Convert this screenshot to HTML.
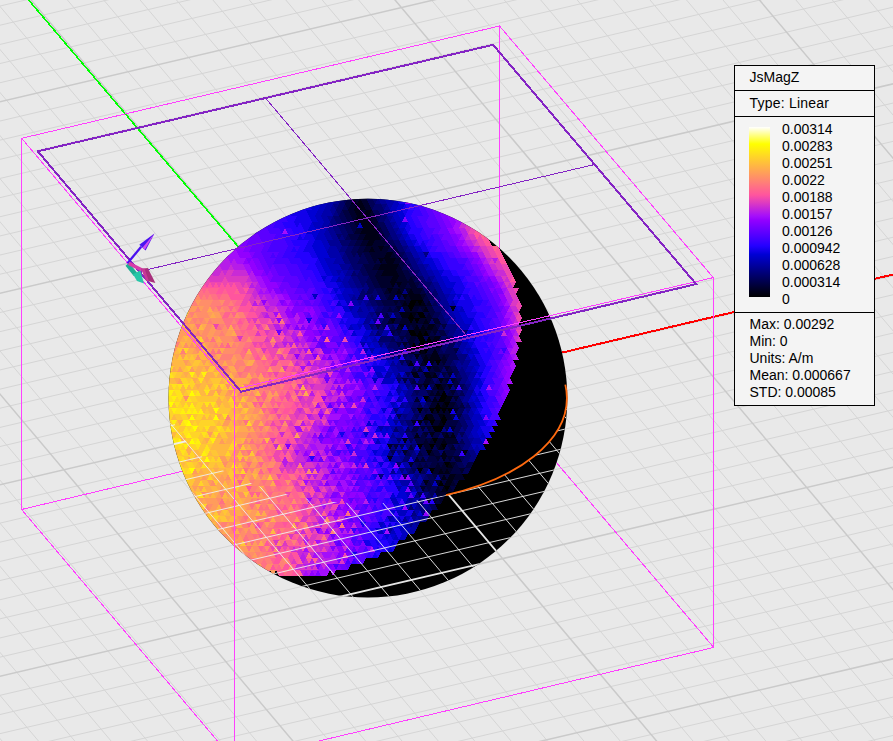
<!DOCTYPE html>
<html><head><meta charset="utf-8"><title>JsMagZ</title>
<style>html,body{margin:0;padding:0;background:#e9e9e9;overflow:hidden}svg{display:block}text{font-family:"Liberation Sans",sans-serif;font-size:14px;fill:#000}</style>
</head><body>
<svg width="893" height="741" viewBox="0 0 893 741">
<defs>
<linearGradient id="bar" x1="0" y1="0" x2="0" y2="1"><stop offset="0.000" stop-color="#ffffff"/><stop offset="0.025" stop-color="#ffffbf"/><stop offset="0.050" stop-color="#ffff7f"/><stop offset="0.075" stop-color="#ffff40"/><stop offset="0.100" stop-color="#ffff00"/><stop offset="0.125" stop-color="#fff10d"/><stop offset="0.150" stop-color="#ffe31a"/><stop offset="0.175" stop-color="#ffd428"/><stop offset="0.200" stop-color="#ffc635"/><stop offset="0.225" stop-color="#ffb842"/><stop offset="0.250" stop-color="#ffaa4f"/><stop offset="0.275" stop-color="#ff9c5c"/><stop offset="0.300" stop-color="#ff8e69"/><stop offset="0.325" stop-color="#ff8077"/><stop offset="0.350" stop-color="#ff7184"/><stop offset="0.375" stop-color="#ff6391"/><stop offset="0.400" stop-color="#ff559e"/><stop offset="0.425" stop-color="#ed47b1"/><stop offset="0.450" stop-color="#db39c3"/><stop offset="0.475" stop-color="#c82ad6"/><stop offset="0.500" stop-color="#b61ce9"/><stop offset="0.525" stop-color="#a40efb"/><stop offset="0.550" stop-color="#9200ff"/><stop offset="0.575" stop-color="#7f00ff"/><stop offset="0.600" stop-color="#6d00ff"/><stop offset="0.625" stop-color="#5b00ff"/><stop offset="0.650" stop-color="#4900ff"/><stop offset="0.675" stop-color="#3700ff"/><stop offset="0.700" stop-color="#2400ff"/><stop offset="0.725" stop-color="#1200ea"/><stop offset="0.750" stop-color="#0000d4"/><stop offset="0.775" stop-color="#0000bf"/><stop offset="0.800" stop-color="#0000aa"/><stop offset="0.825" stop-color="#000095"/><stop offset="0.850" stop-color="#00007f"/><stop offset="0.875" stop-color="#00006a"/><stop offset="0.900" stop-color="#000055"/><stop offset="0.925" stop-color="#000040"/><stop offset="0.950" stop-color="#00002a"/><stop offset="0.975" stop-color="#000015"/><stop offset="1.000" stop-color="#000000"/></linearGradient>
<clipPath id="cs"><circle cx="367.9" cy="398.1" r="199.4"/></clipPath>
<clipPath id="cl"><path d="M168.5 398.1A199.4 199.4 0 0 0 567.3 398.1A199.4 105.4 0 0 1 168.5 398.1Z"/></clipPath>
</defs>
<rect width="893" height="741" fill="#e9e9e9"/>
<g fill="none" stroke-linecap="butt">
<path d="M848.1 746.0L898.0 734.3M766.1 746.0L898.0 715.2M684.1 746.0L898.0 696.0M602.2 746.0L898.0 676.9M438.3 746.0L898.0 638.6M6.3 746.0L-5.0 732.6M356.4 746.0L898.0 619.4M42.7 746.0L-5.0 689.5M274.5 746.0L898.0 600.2M79.0 746.0L-5.0 646.5M192.7 746.0L898.0 581.1M115.3 746.0L-5.0 603.4M110.8 746.0L898.0 561.9M151.7 746.0L-5.0 560.4M29.0 746.0L898.0 542.8M188.0 746.0L-5.0 517.3M-5.0 734.8L898.0 523.6M224.4 746.0L-5.0 474.3M-5.0 715.7L898.0 504.4M260.7 746.0L-5.0 431.2M-5.0 696.5L898.0 485.3M333.4 746.0L-5.0 345.1M-5.0 658.3L898.0 446.9M369.8 746.0L-5.0 302.0M-5.0 639.1L898.0 427.8M406.2 746.0L-5.0 259.0M-5.0 620.0L898.0 408.6M442.5 746.0L-5.0 215.9M-5.0 600.9L898.0 389.4M478.9 746.0L-5.0 172.8M-5.0 581.7L898.0 370.3M515.3 746.0L-5.0 129.7M-5.0 562.6L898.0 351.1M551.7 746.0L-5.0 86.6M-5.0 543.4L898.0 331.9M588.1 746.0L-5.0 43.6M-5.0 524.3L898.0 312.8M624.4 746.0L-5.0 0.5M-5.0 505.2L898.0 293.6M697.2 746.0L63.2 -5.0M-5.0 466.9L898.0 255.3M733.6 746.0L99.5 -5.0M-5.0 447.7L898.0 236.1M770.0 746.0L135.9 -5.0M-5.0 428.6L898.0 216.9M806.4 746.0L172.3 -5.0M-5.0 409.4L898.0 197.8M842.9 746.0L208.7 -5.0M-5.0 390.3L898.0 178.6M879.3 746.0L245.1 -5.0M-5.0 371.1L898.0 159.4M898.0 725.1L281.6 -5.0M-5.0 352.0L898.0 140.2M898.0 681.9L318.0 -5.0M-5.0 332.8L898.0 121.1M898.0 638.8L354.4 -5.0M-5.0 313.7L898.0 101.9M898.0 552.5L427.2 -5.0M-5.0 275.4L898.0 63.5M898.0 509.4L463.7 -5.0M-5.0 256.2L898.0 44.3M898.0 466.2L500.1 -5.0M-5.0 237.1L898.0 25.2M898.0 423.1L536.5 -5.0M-5.0 217.9L898.0 6.0M898.0 379.9L573.0 -5.0M-5.0 198.8L863.1 -5.0M898.0 336.7L609.4 -5.0M-5.0 179.6L781.4 -5.0M898.0 293.6L645.8 -5.0M-5.0 160.5L699.8 -5.0M898.0 250.4L682.3 -5.0M-5.0 141.3L618.1 -5.0M898.0 207.3L718.8 -5.0M-5.0 122.2L536.5 -5.0M898.0 120.9L791.7 -5.0M-5.0 83.9L373.3 -5.0M898.0 77.7L828.1 -5.0M-5.0 64.7L291.7 -5.0M898.0 34.5L864.6 -5.0M-5.0 45.6L210.1 -5.0M-5.0 26.4L128.6 -5.0M-5.0 7.2L47.1 -5.0" stroke="#d5d5d5" stroke-width="1"/>
<path d="M520.2 746.0L898.0 657.7M297.1 746.0L-5.0 388.2M-5.0 677.4L898.0 466.1M660.8 746.0L26.8 -5.0M-5.0 486.0L898.0 274.4M898.0 595.6L390.8 -5.0M-5.0 294.5L898.0 82.7M898.0 164.1L755.2 -5.0M-5.0 103.0L454.9 -5.0" stroke="#cacaca" stroke-width="1.5"/>
</g>
<!-- axes -->
<path d="M28.6 0L367.5 398.9" stroke="#00ff00" stroke-width="1.6" fill="none" shape-rendering="crispEdges"/>
<path d="M367.5 398.5L893 274.5" stroke="#ff0000" stroke-width="2" fill="none" shape-rendering="crispEdges"/>
<!-- back box edges -->
<g fill="none" stroke="#ff40ff" stroke-width="1" shape-rendering="crispEdges">
<path d="M499.5 26V395M21.5 509.5L499.5 395.7L713.8 647.5"/>
</g>
<!-- sphere -->
<g clip-path="url(#cs)" shape-rendering="crispEdges">
<circle cx="367.9" cy="398.1" r="200.4" fill="#000"/>
<path fill="#000000" d="M408 306l6 0l-3-6zM411 300l6 0l-3 6zM417 300l6 0l-3 6zM408 306l6 0l-3 6zM408 318l6 0l-3-6zM417 312l6 0l-3 6zM420 318l6 0l-3-6zM408 318l6 0l-3 6zM414 318l6 0l-3 6zM408 330l6 0l-3 6zM411 336l6 0l-3-6zM417 336l6 0l-3-6zM423 336l6 0l-3-6zM417 336l6 0l-3 6zM420 342l6 0l-3-6zM426 342l6 0l-3-6zM411 348l6 0l-3-6zM417 348l6 0l-3-6zM420 342l6 0l-3 6zM417 348l6 0l-3 6zM423 348l6 0l-3 6zM435 360l6 0l-3 6zM435 384l6 0l-3 6zM441 396l6 0l-3-6zM423 396l6 0l-3 6zM438 402l6 0l-3-6zM441 396l6 0l-3 6zM435 408l6 0l-3-6zM444 402l6 0l-3 6zM417 408l6 0l-3 6zM429 408l6 0l-3 6zM435 408l6 0l-3 6zM441 408l6 0l-3 6zM447 408l6 0l-3 6zM423 420l6 0l-3-6zM441 420l6 0l-3-6zM429 420l6 0l-3 6zM441 420l6 0l-3 6zM432 426l6 0l-3 6zM435 432l6 0l-3-6zM438 426l6 0l-3 6zM432 438l6 0l-3 6zM417 444l6 0l-3 6zM429 444l6 0l-3 6zM441 444l6 0l-3 6zM426 450l6 0l-3 6zM444 462l6 0l-3 6zM417 468l6 0l-3 6zM429 468l6 0l-3 6zM438 486l6 0l-3-6zM444 486l6 0l-3 6z"/><path fill="#000015" d="M351 204l6 0l-3-6zM357 204l6 0l-3-6zM354 210l6 0l-3-6zM357 204l6 0l-3 6zM360 210l6 0l-3-6zM354 210l6 0l-3 6zM357 216l6 0l-3-6zM363 216l6 0l-3-6zM366 210l6 0l-3 6zM354 222l6 0l-3-6zM357 216l6 0l-3 6zM360 222l6 0l-3-6zM363 216l6 0l-3 6zM366 222l6 0l-3-6zM360 222l6 0l-3 6zM363 228l6 0l-3-6zM366 222l6 0l-3 6zM369 228l6 0l-3-6zM360 234l6 0l-3-6zM363 228l6 0l-3 6zM366 234l6 0l-3-6zM369 228l6 0l-3 6zM372 234l6 0l-3-6zM363 240l6 0l-3-6zM366 234l6 0l-3 6zM369 240l6 0l-3-6zM372 234l6 0l-3 6zM375 240l6 0l-3-6zM366 246l6 0l-3-6zM369 240l6 0l-3 6zM369 252l6 0l-3-6zM378 246l6 0l-3 6zM384 258l6 0l-3-6zM387 252l6 0l-3 6zM378 258l6 0l-3 6zM384 258l6 0l-3 6zM387 264l6 0l-3-6zM390 258l6 0l-3 6zM378 270l6 0l-3-6zM381 264l6 0l-3 6zM384 270l6 0l-3-6zM387 264l6 0l-3 6zM390 270l6 0l-3-6zM393 264l6 0l-3 6zM381 276l6 0l-3-6zM384 270l6 0l-3 6zM387 276l6 0l-3-6zM390 270l6 0l-3 6zM393 276l6 0l-3-6zM390 282l6 0l-3-6zM393 276l6 0l-3 6zM390 282l6 0l-3 6zM396 282l6 0l-3 6zM387 288l6 0l-3 6zM396 294l6 0l-3-6zM408 294l6 0l-3-6zM402 294l6 0l-3 6zM408 294l6 0l-3 6zM411 300l6 0l-3-6zM414 294l6 0l-3 6zM417 300l6 0l-3-6zM402 306l6 0l-3-6zM414 306l6 0l-3-6zM420 306l6 0l-3-6zM423 312l6 0l-3-6zM450 306l6 0l-3 6zM399 312l6 0l-3 6zM402 318l6 0l-3-6zM405 312l6 0l-3 6zM411 312l6 0l-3 6zM390 318l6 0l-3 6zM423 324l6 0l-3-6zM399 324l6 0l-3 6zM414 330l6 0l-3-6zM420 330l6 0l-3-6zM426 330l6 0l-3-6zM429 324l6 0l-3 6zM414 330l6 0l-3 6zM420 330l6 0l-3 6zM432 342l6 0l-3-6zM435 336l6 0l-3 6zM426 342l6 0l-3 6zM438 342l6 0l-3 6zM411 348l6 0l-3 6zM420 354l6 0l-3-6zM432 354l6 0l-3-6zM414 354l6 0l-3 6zM423 360l6 0l-3-6zM429 360l6 0l-3-6zM432 354l6 0l-3 6zM435 360l6 0l-3-6zM408 366l6 0l-3-6zM423 360l6 0l-3 6zM429 360l6 0l-3 6zM426 366l6 0l-3 6zM411 372l6 0l-3 6zM414 378l6 0l-3-6zM423 372l6 0l-3 6zM426 378l6 0l-3-6zM432 378l6 0l-3-6zM438 378l6 0l-3 6zM423 384l6 0l-3 6zM438 390l6 0l-3-6zM447 384l6 0l-3 6zM435 396l6 0l-3-6zM432 402l6 0l-3-6zM444 402l6 0l-3-6zM447 396l6 0l-3 6zM441 408l6 0l-3-6zM426 414l6 0l-3 6zM429 420l6 0l-3-6zM438 414l6 0l-3 6zM417 420l6 0l-3 6zM438 426l6 0l-3-6zM414 438l6 0l-3-6zM429 432l6 0l-3 6zM444 438l6 0l-3-6zM450 438l6 0l-3-6zM402 438l6 0l-3 6zM441 444l6 0l-3-6zM438 450l6 0l-3-6zM441 456l6 0l-3-6zM462 450l6 0l-3 6zM441 456l6 0l-3 6zM447 468l6 0l-3-6zM438 474l6 0l-3-6zM444 474l6 0l-3-6zM441 480l6 0l-3-6zM447 480l6 0l-3-6zM450 474l6 0l-3 6zM423 480l6 0l-3 6zM444 486l6 0l-3-6zM447 480l6 0l-3 6zM441 492l6 0l-3-6z"/><path fill="#00002b" d="M354 198l6 0l-3-6zM354 198l6 0l-3 6zM360 198l6 0l-3 6zM363 204l6 0l-3-6zM348 210l6 0l-3-6zM351 204l6 0l-3 6zM363 204l6 0l-3 6zM366 210l6 0l-3-6zM348 210l6 0l-3 6zM351 216l6 0l-3-6zM360 210l6 0l-3 6zM369 216l6 0l-3-6zM351 216l6 0l-3 6zM369 216l6 0l-3 6zM372 222l6 0l-3-6zM354 222l6 0l-3 6zM372 222l6 0l-3 6zM354 234l6 0l-3-6zM357 228l6 0l-3 6zM375 228l6 0l-3 6zM357 240l6 0l-3-6zM360 234l6 0l-3 6zM378 234l6 0l-3 6zM360 246l6 0l-3-6zM363 240l6 0l-3 6zM372 246l6 0l-3-6zM375 240l6 0l-3 6zM378 246l6 0l-3-6zM381 240l6 0l-3 6zM363 252l6 0l-3-6zM366 246l6 0l-3 6zM372 246l6 0l-3 6zM375 252l6 0l-3-6zM381 252l6 0l-3-6zM384 246l6 0l-3 6zM369 252l6 0l-3 6zM372 258l6 0l-3-6zM375 252l6 0l-3 6zM378 258l6 0l-3-6zM381 252l6 0l-3 6zM390 258l6 0l-3-6zM372 258l6 0l-3 6zM381 264l6 0l-3-6zM393 264l6 0l-3-6zM396 258l6 0l-3 6zM372 270l6 0l-3-6zM375 264l6 0l-3 6zM396 270l6 0l-3-6zM375 276l6 0l-3-6zM378 270l6 0l-3 6zM396 270l6 0l-3 6zM399 276l6 0l-3-6zM375 276l6 0l-3 6zM378 282l6 0l-3-6zM381 276l6 0l-3 6zM384 282l6 0l-3-6zM387 276l6 0l-3 6zM396 282l6 0l-3-6zM399 276l6 0l-3 6zM402 282l6 0l-3-6zM408 282l6 0l-3-6zM378 282l6 0l-3 6zM381 288l6 0l-3-6zM384 282l6 0l-3 6zM387 288l6 0l-3-6zM399 288l6 0l-3-6zM402 282l6 0l-3 6zM408 282l6 0l-3 6zM411 288l6 0l-3-6zM384 294l6 0l-3-6zM390 294l6 0l-3-6zM393 288l6 0l-3 6zM399 288l6 0l-3 6zM405 288l6 0l-3 6zM411 288l6 0l-3 6zM414 294l6 0l-3-6zM417 288l6 0l-3 6zM387 300l6 0l-3-6zM390 294l6 0l-3 6zM396 294l6 0l-3 6zM405 300l6 0l-3-6zM420 294l6 0l-3 6zM393 300l6 0l-3 6zM399 300l6 0l-3 6zM405 300l6 0l-3 6zM426 306l6 0l-3-6zM396 306l6 0l-3 6zM402 306l6 0l-3 6zM405 312l6 0l-3-6zM411 312l6 0l-3-6zM414 306l6 0l-3 6zM420 306l6 0l-3 6zM414 318l6 0l-3-6zM426 318l6 0l-3-6zM387 324l6 0l-3-6zM399 324l6 0l-3-6zM402 318l6 0l-3 6zM405 324l6 0l-3-6zM411 324l6 0l-3-6zM417 324l6 0l-3-6zM420 318l6 0l-3 6zM426 318l6 0l-3 6zM432 318l6 0l-3 6zM435 324l6 0l-3-6zM396 330l6 0l-3-6zM405 324l6 0l-3 6zM411 324l6 0l-3 6zM423 324l6 0l-3 6zM432 330l6 0l-3-6zM426 330l6 0l-3 6zM432 330l6 0l-3 6zM408 342l6 0l-3-6zM411 336l6 0l-3 6zM429 336l6 0l-3 6zM402 342l6 0l-3 6zM408 342l6 0l-3 6zM429 348l6 0l-3-6zM435 348l6 0l-3-6zM405 348l6 0l-3 6zM408 354l6 0l-3-6zM420 354l6 0l-3 6zM426 354l6 0l-3 6zM441 360l6 0l-3-6zM420 366l6 0l-3-6zM441 360l6 0l-3 6zM417 372l6 0l-3-6zM432 366l6 0l-3 6zM435 372l6 0l-3-6zM444 366l6 0l-3 6zM429 372l6 0l-3 6zM447 372l6 0l-3 6zM423 384l6 0l-3-6zM426 378l6 0l-3 6zM444 378l6 0l-3 6zM450 378l6 0l-3 6zM417 384l6 0l-3 6zM432 390l6 0l-3-6zM441 384l6 0l-3 6zM429 396l6 0l-3-6zM438 390l6 0l-3 6zM450 390l6 0l-3 6zM414 402l6 0l-3-6zM426 402l6 0l-3-6zM453 396l6 0l-3 6zM429 408l6 0l-3-6zM432 402l6 0l-3 6zM438 402l6 0l-3 6zM447 408l6 0l-3-6zM450 402l6 0l-3 6zM432 414l6 0l-3-6zM438 414l6 0l-3-6zM444 414l6 0l-3-6zM453 408l6 0l-3 6zM444 414l6 0l-3 6zM447 420l6 0l-3-6zM411 420l6 0l-3 6zM423 420l6 0l-3 6zM432 426l6 0l-3-6zM435 420l6 0l-3 6zM420 426l6 0l-3 6zM426 426l6 0l-3 6zM450 426l6 0l-3 6zM423 432l6 0l-3 6zM441 432l6 0l-3 6zM423 444l6 0l-3-6zM429 444l6 0l-3-6zM435 444l6 0l-3-6zM438 438l6 0l-3 6zM444 438l6 0l-3 6zM447 444l6 0l-3-6zM450 438l6 0l-3 6zM453 444l6 0l-3-6zM387 444l6 0l-3 6zM423 444l6 0l-3 6zM426 450l6 0l-3-6zM435 444l6 0l-3 6zM450 450l6 0l-3-6zM402 450l6 0l-3 6zM429 456l6 0l-3-6zM387 456l6 0l-3 6zM414 462l6 0l-3-6zM420 462l6 0l-3-6zM435 456l6 0l-3 6zM447 456l6 0l-3 6zM453 456l6 0l-3 6zM456 462l6 0l-3-6zM408 462l6 0l-3 6zM435 468l6 0l-3-6zM441 468l6 0l-3-6zM450 462l6 0l-3 6zM432 474l6 0l-3-6zM435 468l6 0l-3 6zM441 468l6 0l-3 6zM447 468l6 0l-3 6zM459 468l6 0l-3 6zM453 480l6 0l-3-6zM456 474l6 0l-3 6zM459 480l6 0l-3-6zM435 480l6 0l-3 6zM450 486l6 0l-3-6zM420 486l6 0l-3 6zM435 492l6 0l-3-6zM447 492l6 0l-3-6zM435 492l6 0l-3 6zM438 498l6 0l-3-6zM441 492l6 0l-3 6zM426 498l6 0l-3 6zM432 498l6 0l-3 6zM438 498l6 0l-3 6z"/><path fill="#000040" d="M351 192l6 0l-3 6zM357 192l6 0l-3 6zM360 198l6 0l-3-6zM363 192l6 0l-3 6zM345 204l6 0l-3-6zM348 198l6 0l-3 6zM345 204l6 0l-3 6zM342 210l6 0l-3 6zM345 216l6 0l-3-6zM345 216l6 0l-3 6zM348 222l6 0l-3-6zM348 222l6 0l-3 6zM351 228l6 0l-3-6zM375 228l6 0l-3-6zM351 228l6 0l-3 6zM378 234l6 0l-3-6zM348 234l6 0l-3 6zM351 240l6 0l-3-6zM354 234l6 0l-3 6zM381 240l6 0l-3-6zM354 246l6 0l-3-6zM357 240l6 0l-3 6zM384 246l6 0l-3-6zM357 252l6 0l-3-6zM360 246l6 0l-3 6zM387 252l6 0l-3-6zM390 246l6 0l-3 6zM393 252l6 0l-3-6zM357 252l6 0l-3 6zM363 252l6 0l-3 6zM366 258l6 0l-3-6zM393 252l6 0l-3 6zM396 258l6 0l-3-6zM366 258l6 0l-3 6zM369 264l6 0l-3-6zM375 264l6 0l-3-6zM399 264l6 0l-3-6zM363 264l6 0l-3 6zM366 270l6 0l-3-6zM369 264l6 0l-3 6zM399 264l6 0l-3 6zM366 270l6 0l-3 6zM369 276l6 0l-3-6zM372 270l6 0l-3 6zM402 270l6 0l-3 6zM405 276l6 0l-3-6zM369 276l6 0l-3 6zM372 282l6 0l-3-6zM405 276l6 0l-3 6zM411 276l6 0l-3 6zM372 282l6 0l-3 6zM375 288l6 0l-3-6zM393 288l6 0l-3-6zM405 288l6 0l-3-6zM414 282l6 0l-3 6zM381 288l6 0l-3 6zM420 294l6 0l-3-6zM384 294l6 0l-3 6zM423 300l6 0l-3-6zM381 300l6 0l-3 6zM384 306l6 0l-3-6zM387 300l6 0l-3 6zM390 306l6 0l-3-6zM396 306l6 0l-3-6zM423 300l6 0l-3 6zM387 312l6 0l-3-6zM393 312l6 0l-3-6zM417 312l6 0l-3-6zM426 306l6 0l-3 6zM429 312l6 0l-3-6zM384 318l6 0l-3-6zM423 312l6 0l-3 6zM429 312l6 0l-3 6zM393 324l6 0l-3-6zM396 318l6 0l-3 6zM375 324l6 0l-3 6zM408 330l6 0l-3-6zM417 324l6 0l-3 6zM435 324l6 0l-3 6zM441 324l6 0l-3 6zM390 330l6 0l-3 6zM396 330l6 0l-3 6zM405 336l6 0l-3-6zM429 336l6 0l-3-6zM438 330l6 0l-3 6zM441 336l6 0l-3-6zM399 336l6 0l-3 6zM405 336l6 0l-3 6zM414 342l6 0l-3-6zM444 342l6 0l-3-6zM396 342l6 0l-3 6zM414 342l6 0l-3 6zM432 342l6 0l-3 6zM426 354l6 0l-3-6zM429 348l6 0l-3 6zM435 348l6 0l-3 6zM453 348l6 0l-3 6zM438 354l6 0l-3 6zM444 354l6 0l-3 6zM405 360l6 0l-3 6zM432 366l6 0l-3-6zM438 366l6 0l-3-6zM411 372l6 0l-3-6zM429 372l6 0l-3-6zM438 366l6 0l-3 6zM447 372l6 0l-3-6zM441 372l6 0l-3 6zM402 378l6 0l-3 6zM411 384l6 0l-3-6zM429 384l6 0l-3-6zM441 384l6 0l-3-6zM453 384l6 0l-3-6zM444 390l6 0l-3-6zM453 384l6 0l-3 6zM426 390l6 0l-3 6zM432 390l6 0l-3 6zM447 396l6 0l-3-6zM435 396l6 0l-3 6zM453 408l6 0l-3-6zM459 408l6 0l-3-6zM423 408l6 0l-3 6zM432 414l6 0l-3 6zM435 420l6 0l-3-6zM450 414l6 0l-3 6zM456 414l6 0l-3 6zM444 426l6 0l-3-6zM447 420l6 0l-3 6zM450 426l6 0l-3-6zM453 420l6 0l-3 6zM411 432l6 0l-3-6zM414 426l6 0l-3 6zM429 432l6 0l-3-6zM444 426l6 0l-3 6zM420 438l6 0l-3-6zM432 438l6 0l-3-6zM435 432l6 0l-3 6zM447 432l6 0l-3 6zM414 438l6 0l-3 6zM417 444l6 0l-3-6zM420 438l6 0l-3 6zM426 438l6 0l-3 6zM393 444l6 0l-3 6zM408 450l6 0l-3-6zM447 444l6 0l-3 6zM417 456l6 0l-3-6zM432 450l6 0l-3 6zM435 456l6 0l-3-6zM444 450l6 0l-3 6zM447 456l6 0l-3-6zM450 450l6 0l-3 6zM426 462l6 0l-3-6zM429 456l6 0l-3 6zM432 462l6 0l-3-6zM444 462l6 0l-3-6zM417 468l6 0l-3-6zM423 468l6 0l-3-6zM429 468l6 0l-3-6zM432 462l6 0l-3 6zM438 462l6 0l-3 6zM453 468l6 0l-3-6zM465 468l6 0l-3-6zM468 462l6 0l-3 6zM450 474l6 0l-3-6zM453 468l6 0l-3 6zM456 474l6 0l-3-6zM432 474l6 0l-3 6zM438 474l6 0l-3 6zM444 474l6 0l-3 6zM426 486l6 0l-3-6zM441 480l6 0l-3 6zM453 480l6 0l-3 6zM426 486l6 0l-3 6zM438 486l6 0l-3 6zM450 486l6 0l-3 6zM435 504l6 0l-3-6z"/><path fill="#000055" d="M342 198l6 0l-3-6zM345 192l6 0l-3 6zM348 198l6 0l-3-6zM366 198l6 0l-3-6zM342 198l6 0l-3 6zM366 198l6 0l-3 6zM369 204l6 0l-3-6zM342 210l6 0l-3-6zM369 204l6 0l-3 6zM339 216l6 0l-3-6zM372 210l6 0l-3 6zM375 216l6 0l-3-6zM339 216l6 0l-3 6zM342 222l6 0l-3-6zM375 216l6 0l-3 6zM342 222l6 0l-3 6zM345 228l6 0l-3-6zM378 222l6 0l-3 6zM381 228l6 0l-3-6zM345 228l6 0l-3 6zM348 234l6 0l-3-6zM381 228l6 0l-3 6zM384 234l6 0l-3-6zM345 240l6 0l-3-6zM384 234l6 0l-3 6zM348 246l6 0l-3-6zM351 240l6 0l-3 6zM387 240l6 0l-3 6zM390 246l6 0l-3-6zM351 252l6 0l-3-6zM354 246l6 0l-3 6zM351 252l6 0l-3 6zM360 258l6 0l-3-6zM399 252l6 0l-3 6zM357 264l6 0l-3-6zM360 258l6 0l-3 6zM363 264l6 0l-3-6zM402 258l6 0l-3 6zM360 270l6 0l-3-6zM402 270l6 0l-3-6zM405 264l6 0l-3 6zM360 270l6 0l-3 6zM363 276l6 0l-3-6zM408 270l6 0l-3 6zM411 276l6 0l-3-6zM366 282l6 0l-3-6zM414 282l6 0l-3-6zM366 282l6 0l-3 6zM369 288l6 0l-3-6zM417 288l6 0l-3-6zM366 294l6 0l-3-6zM369 288l6 0l-3 6zM375 288l6 0l-3 6zM378 294l6 0l-3-6zM426 294l6 0l-3-6zM369 300l6 0l-3-6zM378 294l6 0l-3 6zM381 300l6 0l-3-6zM399 300l6 0l-3-6zM426 294l6 0l-3 6zM429 300l6 0l-3-6zM375 300l6 0l-3 6zM378 306l6 0l-3-6zM432 306l6 0l-3-6zM381 312l6 0l-3-6zM384 306l6 0l-3 6zM390 306l6 0l-3 6zM375 312l6 0l-3 6zM381 312l6 0l-3 6zM393 312l6 0l-3 6zM396 318l6 0l-3-6zM432 318l6 0l-3-6zM435 312l6 0l-3 6zM381 324l6 0l-3-6zM384 318l6 0l-3 6zM381 324l6 0l-3 6zM390 330l6 0l-3-6zM393 336l6 0l-3-6zM399 336l6 0l-3-6zM402 330l6 0l-3 6zM435 336l6 0l-3-6zM390 342l6 0l-3-6zM423 336l6 0l-3 6zM438 342l6 0l-3-6zM405 348l6 0l-3-6zM423 348l6 0l-3-6zM447 348l6 0l-3-6zM450 342l6 0l-3 6zM399 348l6 0l-3 6zM414 354l6 0l-3-6zM438 354l6 0l-3-6zM444 354l6 0l-3-6zM447 348l6 0l-3 6zM450 354l6 0l-3-6zM390 354l6 0l-3 6zM396 354l6 0l-3 6zM402 354l6 0l-3 6zM408 354l6 0l-3 6zM417 360l6 0l-3-6zM447 360l6 0l-3-6zM450 354l6 0l-3 6zM453 360l6 0l-3-6zM399 360l6 0l-3 6zM417 360l6 0l-3 6zM444 366l6 0l-3-6zM447 360l6 0l-3 6zM450 366l6 0l-3 6zM453 372l6 0l-3-6zM405 372l6 0l-3 6zM420 378l6 0l-3-6zM435 372l6 0l-3 6zM444 378l6 0l-3-6zM453 372l6 0l-3 6zM408 378l6 0l-3 6zM417 384l6 0l-3-6zM420 378l6 0l-3 6zM435 384l6 0l-3-6zM456 378l6 0l-3 6zM420 390l6 0l-3-6zM429 384l6 0l-3 6zM459 384l6 0l-3 6zM414 390l6 0l-3 6zM444 390l6 0l-3 6zM453 396l6 0l-3-6zM459 396l6 0l-3-6zM429 396l6 0l-3 6zM450 402l6 0l-3-6zM456 402l6 0l-3-6zM417 408l6 0l-3-6zM426 402l6 0l-3 6zM456 402l6 0l-3 6zM411 408l6 0l-3 6zM420 414l6 0l-3-6zM426 414l6 0l-3-6zM456 414l6 0l-3-6zM459 408l6 0l-3 6zM396 414l6 0l-3 6zM414 414l6 0l-3 6zM420 414l6 0l-3 6zM426 426l6 0l-3-6zM456 426l6 0l-3-6zM405 432l6 0l-3-6zM453 432l6 0l-3-6zM456 426l6 0l-3 6zM411 432l6 0l-3 6zM453 432l6 0l-3 6zM459 432l6 0l-3 6zM408 438l6 0l-3 6zM459 444l6 0l-3-6zM399 444l6 0l-3 6zM420 450l6 0l-3-6zM432 450l6 0l-3-6zM444 450l6 0l-3-6zM456 450l6 0l-3-6zM390 450l6 0l-3 6zM405 456l6 0l-3-6zM420 450l6 0l-3 6zM423 456l6 0l-3-6zM453 456l6 0l-3-6zM456 450l6 0l-3 6zM417 456l6 0l-3 6zM438 462l6 0l-3-6zM450 462l6 0l-3-6zM459 456l6 0l-3 6zM414 462l6 0l-3 6zM420 462l6 0l-3 6zM426 462l6 0l-3 6zM456 462l6 0l-3 6zM459 468l6 0l-3-6zM411 468l6 0l-3 6zM420 474l6 0l-3-6zM462 474l6 0l-3-6zM465 468l6 0l-3 6zM402 474l6 0l-3 6zM426 474l6 0l-3 6zM429 480l6 0l-3-6zM429 480l6 0l-3 6zM423 492l6 0l-3-6zM429 492l6 0l-3-6zM432 486l6 0l-3 6zM417 492l6 0l-3 6zM429 492l6 0l-3 6zM429 504l6 0l-3 6zM432 510l6 0l-3-6z"/><path fill="#00006a" d="M369 192l6 0l-3 6zM372 198l6 0l-3-6zM339 204l6 0l-3-6zM372 198l6 0l-3 6zM336 210l6 0l-3-6zM339 204l6 0l-3 6zM372 210l6 0l-3-6zM375 204l6 0l-3 6zM378 210l6 0l-3-6zM336 210l6 0l-3 6zM378 210l6 0l-3 6zM333 216l6 0l-3 6zM336 222l6 0l-3-6zM378 222l6 0l-3-6zM381 216l6 0l-3 6zM336 222l6 0l-3 6zM339 228l6 0l-3-6zM339 228l6 0l-3 6zM342 234l6 0l-3-6zM336 234l6 0l-3 6zM342 234l6 0l-3 6zM387 240l6 0l-3-6zM339 240l6 0l-3 6zM342 246l6 0l-3-6zM345 240l6 0l-3 6zM393 240l6 0l-3 6zM396 246l6 0l-3-6zM345 252l6 0l-3-6zM348 246l6 0l-3 6zM396 246l6 0l-3 6zM399 252l6 0l-3-6zM345 252l6 0l-3 6zM348 258l6 0l-3-6zM354 258l6 0l-3-6zM402 258l6 0l-3-6zM348 258l6 0l-3 6zM351 264l6 0l-3-6zM354 258l6 0l-3 6zM405 264l6 0l-3-6zM351 264l6 0l-3 6zM354 270l6 0l-3-6zM357 264l6 0l-3 6zM408 270l6 0l-3-6zM351 276l6 0l-3-6zM357 276l6 0l-3-6zM414 270l6 0l-3 6zM357 276l6 0l-3 6zM360 282l6 0l-3-6zM363 276l6 0l-3 6zM417 276l6 0l-3 6zM420 282l6 0l-3-6zM360 282l6 0l-3 6zM420 282l6 0l-3 6zM423 288l6 0l-3-6zM426 282l6 0l-3 6zM360 294l6 0l-3-6zM372 294l6 0l-3-6zM423 288l6 0l-3 6zM432 294l6 0l-3-6zM357 300l6 0l-3-6zM360 294l6 0l-3 6zM366 294l6 0l-3 6zM372 294l6 0l-3 6zM432 294l6 0l-3 6zM369 300l6 0l-3 6zM372 306l6 0l-3-6zM429 300l6 0l-3 6zM375 312l6 0l-3-6zM378 306l6 0l-3 6zM432 306l6 0l-3 6zM435 312l6 0l-3-6zM438 306l6 0l-3 6zM387 312l6 0l-3 6zM438 318l6 0l-3-6zM429 324l6 0l-3-6zM438 318l6 0l-3 6zM441 324l6 0l-3-6zM369 324l6 0l-3 6zM378 330l6 0l-3-6zM387 324l6 0l-3 6zM438 330l6 0l-3-6zM375 336l6 0l-3-6zM444 330l6 0l-3 6zM462 330l6 0l-3 6zM378 342l6 0l-3-6zM381 336l6 0l-3 6zM384 342l6 0l-3-6zM387 336l6 0l-3 6zM396 342l6 0l-3-6zM402 342l6 0l-3-6zM441 336l6 0l-3 6zM447 336l6 0l-3 6zM450 342l6 0l-3-6zM387 348l6 0l-3-6zM390 342l6 0l-3 6zM393 348l6 0l-3-6zM441 348l6 0l-3-6zM393 348l6 0l-3 6zM441 348l6 0l-3 6zM405 360l6 0l-3-6zM411 360l6 0l-3-6zM411 360l6 0l-3 6zM450 366l6 0l-3-6zM414 366l6 0l-3 6zM420 366l6 0l-3 6zM441 372l6 0l-3-6zM417 372l6 0l-3 6zM456 378l6 0l-3-6zM396 378l6 0l-3 6zM432 378l6 0l-3 6zM411 384l6 0l-3 6zM462 390l6 0l-3-6zM411 396l6 0l-3-6zM417 396l6 0l-3-6zM420 390l6 0l-3 6zM423 396l6 0l-3-6zM456 390l6 0l-3 6zM411 408l6 0l-3-6zM414 402l6 0l-3 6zM423 408l6 0l-3-6zM465 408l6 0l-3-6zM414 414l6 0l-3-6zM411 420l6 0l-3-6zM459 420l6 0l-3-6zM405 420l6 0l-3 6zM408 426l6 0l-3-6zM420 426l6 0l-3-6zM459 420l6 0l-3 6zM462 426l6 0l-3-6zM393 432l6 0l-3-6zM417 432l6 0l-3-6zM423 432l6 0l-3-6zM462 426l6 0l-3 6zM405 432l6 0l-3 6zM408 438l6 0l-3-6zM417 432l6 0l-3 6zM426 438l6 0l-3-6zM438 438l6 0l-3-6zM396 438l6 0l-3 6zM411 444l6 0l-3 6zM453 444l6 0l-3 6zM459 444l6 0l-3 6zM408 450l6 0l-3 6zM438 450l6 0l-3 6zM465 456l6 0l-3-6zM402 462l6 0l-3-6zM405 456l6 0l-3 6zM423 456l6 0l-3 6zM462 462l6 0l-3-6zM465 456l6 0l-3 6zM396 462l6 0l-3 6zM411 468l6 0l-3-6zM462 462l6 0l-3 6zM408 474l6 0l-3-6zM423 468l6 0l-3 6zM423 480l6 0l-3-6zM420 486l6 0l-3-6zM426 498l6 0l-3-6zM417 504l6 0l-3-6zM408 510l6 0l-3-6zM426 510l6 0l-3 6z"/><path fill="#000080" d="M336 198l6 0l-3-6zM375 192l6 0l-3 6zM336 198l6 0l-3 6zM375 204l6 0l-3-6zM333 204l6 0l-3 6zM381 204l6 0l-3 6zM333 216l6 0l-3-6zM381 216l6 0l-3-6zM384 210l6 0l-3 6zM330 222l6 0l-3-6zM384 222l6 0l-3-6zM330 222l6 0l-3 6zM333 228l6 0l-3-6zM384 222l6 0l-3 6zM387 228l6 0l-3-6zM333 228l6 0l-3 6zM336 234l6 0l-3-6zM387 228l6 0l-3 6zM390 234l6 0l-3-6zM339 240l6 0l-3-6zM390 234l6 0l-3 6zM393 240l6 0l-3-6zM339 252l6 0l-3-6zM342 246l6 0l-3 6zM402 246l6 0l-3 6zM342 258l6 0l-3-6zM405 252l6 0l-3 6zM408 258l6 0l-3-6zM423 252l6 0l-3 6zM342 258l6 0l-3 6zM345 264l6 0l-3-6zM408 258l6 0l-3 6zM411 264l6 0l-3-6zM348 270l6 0l-3-6zM411 264l6 0l-3 6zM414 270l6 0l-3-6zM354 270l6 0l-3 6zM417 276l6 0l-3-6zM351 276l6 0l-3 6zM354 282l6 0l-3-6zM426 282l6 0l-3-6zM354 282l6 0l-3 6zM357 288l6 0l-3-6zM363 288l6 0l-3-6zM429 288l6 0l-3-6zM363 288l6 0l-3 6zM402 294l6 0l-3-6zM429 288l6 0l-3 6zM435 300l6 0l-3-6zM366 306l6 0l-3-6zM435 300l6 0l-3 6zM372 306l6 0l-3 6zM441 312l6 0l-3-6zM369 312l6 0l-3 6zM441 312l6 0l-3 6zM372 318l6 0l-3 6zM378 318l6 0l-3 6zM444 318l6 0l-3 6zM372 330l6 0l-3-6zM393 324l6 0l-3 6zM444 330l6 0l-3-6zM447 324l6 0l-3 6zM450 330l6 0l-3-6zM453 324l6 0l-3 6zM378 330l6 0l-3 6zM447 336l6 0l-3-6zM450 330l6 0l-3 6zM393 336l6 0l-3 6zM378 342l6 0l-3 6zM384 342l6 0l-3 6zM399 348l6 0l-3-6zM444 342l6 0l-3 6zM456 342l6 0l-3 6zM387 348l6 0l-3 6zM456 354l6 0l-3 6zM459 360l6 0l-3-6zM462 354l6 0l-3 6zM402 366l6 0l-3-6zM453 360l6 0l-3 6zM459 360l6 0l-3 6zM408 366l6 0l-3 6zM459 372l6 0l-3-6zM396 378l6 0l-3-6zM408 378l6 0l-3-6zM459 372l6 0l-3 6zM462 378l6 0l-3-6zM459 384l6 0l-3-6zM462 378l6 0l-3 6zM405 384l6 0l-3 6zM450 390l6 0l-3-6zM465 384l6 0l-3 6zM462 390l6 0l-3 6zM411 396l6 0l-3 6zM417 396l6 0l-3 6zM459 396l6 0l-3 6zM408 402l6 0l-3 6zM462 402l6 0l-3 6zM393 408l6 0l-3 6zM465 408l6 0l-3 6zM402 414l6 0l-3 6zM417 420l6 0l-3-6zM462 414l6 0l-3 6zM465 420l6 0l-3-6zM399 420l6 0l-3 6zM408 426l6 0l-3 6zM441 432l6 0l-3-6zM459 432l6 0l-3-6zM456 438l6 0l-3-6zM462 438l6 0l-3-6zM411 444l6 0l-3-6zM456 438l6 0l-3 6zM462 438l6 0l-3 6zM465 444l6 0l-3-6zM390 450l6 0l-3-6zM405 444l6 0l-3 6zM462 450l6 0l-3-6zM465 444l6 0l-3 6zM387 456l6 0l-3-6zM396 450l6 0l-3 6zM411 456l6 0l-3-6zM468 450l6 0l-3 6zM471 456l6 0l-3-6zM411 456l6 0l-3 6zM468 462l6 0l-3-6zM471 456l6 0l-3 6zM399 468l6 0l-3 6zM405 468l6 0l-3 6zM378 474l6 0l-3 6zM414 474l6 0l-3 6zM420 474l6 0l-3 6zM411 480l6 0l-3 6zM414 486l6 0l-3 6zM414 498l6 0l-3-6zM423 492l6 0l-3 6zM417 504l6 0l-3 6zM420 510l6 0l-3-6zM426 510l6 0l-3-6zM411 516l6 0l-3-6zM420 510l6 0l-3 6zM420 522l6 0l-3-6zM408 522l6 0l-3 6z"/><path fill="#000095" d="M330 198l6 0l-3-6zM378 198l6 0l-3-6zM333 204l6 0l-3-6zM378 198l6 0l-3 6zM381 204l6 0l-3-6zM330 210l6 0l-3-6zM384 210l6 0l-3-6zM330 210l6 0l-3 6zM327 216l6 0l-3 6zM387 216l6 0l-3 6zM327 228l6 0l-3-6zM390 222l6 0l-3 6zM327 228l6 0l-3 6zM330 234l6 0l-3-6zM393 228l6 0l-3 6zM330 234l6 0l-3 6zM333 240l6 0l-3-6zM396 234l6 0l-3 6zM327 240l6 0l-3 6zM330 246l6 0l-3-6zM333 240l6 0l-3 6zM336 246l6 0l-3-6zM399 240l6 0l-3 6zM402 246l6 0l-3-6zM336 246l6 0l-3 6zM405 252l6 0l-3-6zM339 252l6 0l-3 6zM414 258l6 0l-3 6zM339 264l6 0l-3 6zM342 270l6 0l-3-6zM345 264l6 0l-3 6zM417 264l6 0l-3 6zM420 270l6 0l-3-6zM345 276l6 0l-3-6zM348 270l6 0l-3 6zM420 270l6 0l-3 6zM423 276l6 0l-3-6zM348 282l6 0l-3-6zM423 276l6 0l-3 6zM429 276l6 0l-3 6zM348 282l6 0l-3 6zM351 288l6 0l-3-6zM432 282l6 0l-3 6zM435 288l6 0l-3-6zM357 288l6 0l-3 6zM435 288l6 0l-3 6zM438 294l6 0l-3-6zM351 300l6 0l-3-6zM438 294l6 0l-3 6zM441 300l6 0l-3-6zM357 300l6 0l-3 6zM363 300l6 0l-3 6zM438 306l6 0l-3-6zM441 300l6 0l-3 6zM444 306l6 0l-3-6zM357 312l6 0l-3-6zM366 306l6 0l-3 6zM444 306l6 0l-3 6zM366 318l6 0l-3-6zM372 318l6 0l-3-6zM444 318l6 0l-3-6zM363 324l6 0l-3-6zM366 318l6 0l-3 6zM450 318l6 0l-3 6zM369 336l6 0l-3-6zM453 336l6 0l-3-6zM456 330l6 0l-3 6zM456 342l6 0l-3-6zM453 348l6 0l-3-6zM390 354l6 0l-3-6zM396 354l6 0l-3-6zM456 354l6 0l-3-6zM387 360l6 0l-3-6zM390 366l6 0l-3-6zM396 366l6 0l-3-6zM456 366l6 0l-3-6zM462 366l6 0l-3-6zM465 360l6 0l-3 6zM396 366l6 0l-3 6zM399 372l6 0l-3-6zM402 366l6 0l-3 6zM405 372l6 0l-3-6zM456 366l6 0l-3 6zM462 366l6 0l-3 6zM402 378l6 0l-3-6zM438 378l6 0l-3-6zM465 372l6 0l-3 6zM405 384l6 0l-3-6zM414 378l6 0l-3 6zM465 384l6 0l-3-6zM408 390l6 0l-3-6zM405 396l6 0l-3-6zM408 390l6 0l-3 6zM465 396l6 0l-3-6zM468 390l6 0l-3 6zM405 396l6 0l-3 6zM408 402l6 0l-3-6zM462 402l6 0l-3-6zM465 396l6 0l-3 6zM399 408l6 0l-3-6zM405 408l6 0l-3-6zM420 402l6 0l-3 6zM408 414l6 0l-3-6zM462 414l6 0l-3-6zM399 420l6 0l-3-6zM405 420l6 0l-3-6zM408 414l6 0l-3 6zM393 420l6 0l-3 6zM402 426l6 0l-3-6zM465 420l6 0l-3 6zM468 426l6 0l-3-6zM396 426l6 0l-3 6zM399 432l6 0l-3-6zM465 432l6 0l-3-6zM468 426l6 0l-3 6zM390 438l6 0l-3-6zM399 432l6 0l-3 6zM465 432l6 0l-3 6zM405 444l6 0l-3-6zM468 438l6 0l-3 6zM468 450l6 0l-3-6zM399 456l6 0l-3 6zM390 474l6 0l-3-6zM414 474l6 0l-3-6zM411 480l6 0l-3-6zM414 486l6 0l-3-6zM408 486l6 0l-3 6zM417 492l6 0l-3-6zM408 498l6 0l-3 6zM420 498l6 0l-3 6zM414 510l6 0l-3-6zM423 504l6 0l-3 6zM402 522l6 0l-3-6zM411 516l6 0l-3 6zM417 516l6 0l-3 6zM423 516l6 0l-3 6zM414 522l6 0l-3 6zM387 528l6 0l-3 6z"/><path fill="#0000aa" d="M381 192l6 0l-3 6zM384 198l6 0l-3-6zM324 198l6 0l-3 6zM327 204l6 0l-3-6zM330 198l6 0l-3 6zM384 198l6 0l-3 6zM387 204l6 0l-3-6zM390 198l6 0l-3 6zM324 210l6 0l-3-6zM327 204l6 0l-3 6zM387 204l6 0l-3 6zM321 216l6 0l-3-6zM324 210l6 0l-3 6zM327 216l6 0l-3-6zM387 216l6 0l-3-6zM390 210l6 0l-3 6zM321 216l6 0l-3 6zM324 222l6 0l-3-6zM390 222l6 0l-3-6zM321 228l6 0l-3-6zM324 222l6 0l-3 6zM393 228l6 0l-3-6zM324 234l6 0l-3-6zM396 234l6 0l-3-6zM324 234l6 0l-3 6zM327 240l6 0l-3-6zM399 240l6 0l-3-6zM327 252l6 0l-3-6zM330 246l6 0l-3 6zM333 252l6 0l-3-6zM408 246l6 0l-3 6zM411 252l6 0l-3-6zM327 252l6 0l-3 6zM330 258l6 0l-3-6zM333 252l6 0l-3 6zM336 258l6 0l-3-6zM411 252l6 0l-3 6zM414 258l6 0l-3-6zM333 264l6 0l-3-6zM336 258l6 0l-3 6zM339 264l6 0l-3-6zM417 264l6 0l-3-6zM423 264l6 0l-3 6zM336 270l6 0l-3 6zM342 270l6 0l-3 6zM426 270l6 0l-3 6zM429 276l6 0l-3-6zM336 282l6 0l-3-6zM342 282l6 0l-3-6zM345 276l6 0l-3 6zM432 282l6 0l-3-6zM342 282l6 0l-3 6zM345 288l6 0l-3-6zM351 288l6 0l-3 6zM354 294l6 0l-3-6zM348 294l6 0l-3 6zM354 294l6 0l-3 6zM444 294l6 0l-3 6zM351 300l6 0l-3 6zM354 306l6 0l-3-6zM360 306l6 0l-3-6zM450 306l6 0l-3-6zM348 306l6 0l-3 6zM360 306l6 0l-3 6zM363 312l6 0l-3-6zM369 312l6 0l-3-6zM399 312l6 0l-3-6zM447 312l6 0l-3-6zM357 312l6 0l-3 6zM360 318l6 0l-3-6zM363 312l6 0l-3 6zM447 312l6 0l-3 6zM450 318l6 0l-3-6zM447 324l6 0l-3-6zM363 324l6 0l-3 6zM366 330l6 0l-3-6zM456 330l6 0l-3-6zM372 330l6 0l-3 6zM381 336l6 0l-3-6zM384 330l6 0l-3 6zM459 336l6 0l-3-6zM372 342l6 0l-3-6zM453 336l6 0l-3 6zM459 336l6 0l-3 6zM360 342l6 0l-3 6zM381 348l6 0l-3-6zM459 348l6 0l-3-6zM462 342l6 0l-3 6zM369 348l6 0l-3 6zM459 348l6 0l-3 6zM465 348l6 0l-3 6zM381 360l6 0l-3-6zM384 354l6 0l-3 6zM393 360l6 0l-3-6zM465 360l6 0l-3-6zM390 366l6 0l-3 6zM393 372l6 0l-3-6zM423 372l6 0l-3-6zM465 372l6 0l-3-6zM468 366l6 0l-3 6zM384 378l6 0l-3-6zM387 372l6 0l-3 6zM393 372l6 0l-3 6zM468 378l6 0l-3-6zM471 372l6 0l-3 6zM399 384l6 0l-3-6zM468 378l6 0l-3 6zM396 390l6 0l-3-6zM468 390l6 0l-3-6zM396 390l6 0l-3 6zM402 390l6 0l-3 6zM396 402l6 0l-3-6zM402 402l6 0l-3 6zM468 402l6 0l-3 6zM471 408l6 0l-3-6zM402 414l6 0l-3-6zM405 408l6 0l-3 6zM468 414l6 0l-3-6zM468 414l6 0l-3 6zM378 426l6 0l-3 6zM390 426l6 0l-3 6zM396 438l6 0l-3-6zM468 438l6 0l-3-6zM390 438l6 0l-3 6zM393 444l6 0l-3-6zM471 444l6 0l-3-6zM474 438l6 0l-3 6zM477 444l6 0l-3-6zM396 450l6 0l-3-6zM474 450l6 0l-3-6zM399 456l6 0l-3-6zM414 450l6 0l-3 6zM474 450l6 0l-3 6zM390 462l6 0l-3-6zM393 456l6 0l-3 6zM396 462l6 0l-3-6zM402 462l6 0l-3 6zM405 468l6 0l-3-6zM402 474l6 0l-3-6zM417 480l6 0l-3-6zM435 480l6 0l-3-6zM399 480l6 0l-3 6zM402 486l6 0l-3-6zM405 480l6 0l-3 6zM417 480l6 0l-3 6zM396 486l6 0l-3 6zM432 498l6 0l-3-6zM405 504l6 0l-3-6zM411 504l6 0l-3-6zM414 498l6 0l-3 6zM414 510l6 0l-3 6zM387 516l6 0l-3 6zM414 522l6 0l-3-6zM405 528l6 0l-3-6zM411 528l6 0l-3-6zM408 534l6 0l-3-6zM411 528l6 0l-3 6z"/><path fill="#0000bf" d="M387 192l6 0l-3 6zM390 198l6 0l-3-6zM321 204l6 0l-3-6zM393 204l6 0l-3-6zM318 210l6 0l-3-6zM321 204l6 0l-3 6zM390 210l6 0l-3-6zM393 204l6 0l-3 6zM315 216l6 0l-3-6zM318 210l6 0l-3 6zM393 216l6 0l-3-6zM315 216l6 0l-3 6zM318 222l6 0l-3-6zM393 216l6 0l-3 6zM396 222l6 0l-3-6zM312 222l6 0l-3 6zM315 228l6 0l-3-6zM318 222l6 0l-3 6zM357 228l6 0l-3-6zM396 222l6 0l-3 6zM318 234l6 0l-3-6zM321 228l6 0l-3 6zM399 228l6 0l-3 6zM315 240l6 0l-3-6zM318 234l6 0l-3 6zM321 240l6 0l-3-6zM402 234l6 0l-3 6zM321 240l6 0l-3 6zM324 246l6 0l-3-6zM405 240l6 0l-3 6zM408 246l6 0l-3-6zM324 246l6 0l-3 6zM417 252l6 0l-3 6zM420 258l6 0l-3-6zM324 258l6 0l-3 6zM327 264l6 0l-3-6zM330 258l6 0l-3 6zM420 258l6 0l-3 6zM327 264l6 0l-3 6zM330 270l6 0l-3-6zM333 264l6 0l-3 6zM336 270l6 0l-3-6zM426 270l6 0l-3-6zM330 270l6 0l-3 6zM333 276l6 0l-3-6zM339 276l6 0l-3-6zM432 270l6 0l-3 6zM435 276l6 0l-3-6zM339 276l6 0l-3 6zM435 276l6 0l-3 6zM438 282l6 0l-3-6zM339 288l6 0l-3-6zM438 282l6 0l-3 6zM441 288l6 0l-3-6zM342 294l6 0l-3-6zM345 288l6 0l-3 6zM348 294l6 0l-3-6zM441 288l6 0l-3 6zM444 294l6 0l-3-6zM447 288l6 0l-3 6zM312 294l6 0l-3 6zM342 294l6 0l-3 6zM345 300l6 0l-3-6zM393 300l6 0l-3-6zM447 300l6 0l-3-6zM450 294l6 0l-3 6zM345 300l6 0l-3 6zM447 300l6 0l-3 6zM351 312l6 0l-3-6zM354 306l6 0l-3 6zM453 312l6 0l-3-6zM459 312l6 0l-3-6zM351 312l6 0l-3 6zM354 318l6 0l-3-6zM390 318l6 0l-3-6zM453 312l6 0l-3 6zM456 318l6 0l-3-6zM369 324l6 0l-3-6zM453 324l6 0l-3-6zM456 318l6 0l-3 6zM459 324l6 0l-3-6zM348 330l6 0l-3-6zM357 324l6 0l-3 6zM402 330l6 0l-3-6zM459 324l6 0l-3 6zM462 330l6 0l-3-6zM465 324l6 0l-3 6zM468 330l6 0l-3 6zM363 336l6 0l-3 6zM369 336l6 0l-3 6zM366 342l6 0l-3 6zM372 342l6 0l-3 6zM375 348l6 0l-3-6zM465 348l6 0l-3-6zM363 348l6 0l-3 6zM378 354l6 0l-3-6zM381 348l6 0l-3 6zM384 354l6 0l-3-6zM462 354l6 0l-3-6zM468 354l6 0l-3-6zM375 360l6 0l-3-6zM471 360l6 0l-3-6zM387 360l6 0l-3 6zM393 360l6 0l-3 6zM468 366l6 0l-3-6zM471 360l6 0l-3 6zM474 366l6 0l-3-6zM387 372l6 0l-3-6zM471 372l6 0l-3-6zM375 372l6 0l-3 6zM378 378l6 0l-3-6zM450 378l6 0l-3-6zM372 378l6 0l-3 6zM381 384l6 0l-3-6zM384 378l6 0l-3 6zM387 384l6 0l-3-6zM390 378l6 0l-3 6zM447 384l6 0l-3-6zM471 384l6 0l-3-6zM474 378l6 0l-3 6zM399 384l6 0l-3 6zM471 384l6 0l-3 6zM471 396l6 0l-3-6zM399 396l6 0l-3 6zM468 402l6 0l-3-6zM474 402l6 0l-3-6zM390 402l6 0l-3 6zM396 414l6 0l-3-6zM471 408l6 0l-3 6zM393 420l6 0l-3-6zM471 420l6 0l-3-6zM474 414l6 0l-3 6zM477 420l6 0l-3-6zM471 420l6 0l-3 6zM474 426l6 0l-3-6zM384 426l6 0l-3 6zM402 426l6 0l-3 6zM471 432l6 0l-3-6zM474 426l6 0l-3 6zM393 432l6 0l-3 6zM471 432l6 0l-3 6zM474 438l6 0l-3-6zM480 438l6 0l-3-6zM375 444l6 0l-3-6zM387 444l6 0l-3-6zM399 444l6 0l-3-6zM471 444l6 0l-3 6zM477 444l6 0l-3 6zM480 450l6 0l-3-6zM396 474l6 0l-3-6zM426 474l6 0l-3-6zM408 474l6 0l-3 6zM393 480l6 0l-3 6zM432 486l6 0l-3-6zM411 492l6 0l-3-6zM405 492l6 0l-3 6zM390 498l6 0l-3 6zM393 504l6 0l-3-6zM405 504l6 0l-3 6zM411 504l6 0l-3 6zM396 510l6 0l-3 6zM399 516l6 0l-3-6zM402 510l6 0l-3 6zM390 522l6 0l-3-6zM396 522l6 0l-3-6zM405 516l6 0l-3 6zM378 522l6 0l-3 6zM378 534l6 0l-3-6zM390 534l6 0l-3-6zM399 528l6 0l-3 6zM402 534l6 0l-3-6zM405 528l6 0l-3 6zM393 540l6 0l-3-6zM399 540l6 0l-3-6zM402 534l6 0l-3 6z"/><path fill="#0000d4" d="M396 198l6 0l-3-6zM309 204l6 0l-3-6zM312 198l6 0l-3 6zM315 204l6 0l-3-6zM318 198l6 0l-3 6zM309 204l6 0l-3 6zM312 210l6 0l-3-6zM315 204l6 0l-3 6zM396 210l6 0l-3-6zM399 204l6 0l-3 6zM306 210l6 0l-3 6zM309 216l6 0l-3-6zM312 210l6 0l-3 6zM396 210l6 0l-3 6zM399 216l6 0l-3-6zM309 216l6 0l-3 6zM312 222l6 0l-3-6zM399 216l6 0l-3 6zM309 228l6 0l-3-6zM399 228l6 0l-3-6zM402 222l6 0l-3 6zM306 234l6 0l-3-6zM309 228l6 0l-3 6zM312 234l6 0l-3-6zM315 228l6 0l-3 6zM402 234l6 0l-3-6zM312 234l6 0l-3 6zM405 240l6 0l-3-6zM312 246l6 0l-3-6zM315 240l6 0l-3 6zM318 246l6 0l-3-6zM411 240l6 0l-3 6zM312 246l6 0l-3 6zM315 252l6 0l-3-6zM318 246l6 0l-3 6zM321 252l6 0l-3-6zM414 246l6 0l-3 6zM417 252l6 0l-3-6zM315 252l6 0l-3 6zM318 258l6 0l-3-6zM321 252l6 0l-3 6zM324 258l6 0l-3-6zM318 258l6 0l-3 6zM321 264l6 0l-3-6zM423 264l6 0l-3-6zM426 258l6 0l-3 6zM429 264l6 0l-3-6zM321 264l6 0l-3 6zM324 270l6 0l-3-6zM429 264l6 0l-3 6zM432 270l6 0l-3-6zM324 270l6 0l-3 6zM327 276l6 0l-3-6zM438 270l6 0l-3 6zM321 276l6 0l-3 6zM330 282l6 0l-3-6zM333 276l6 0l-3 6zM441 276l6 0l-3 6zM444 282l6 0l-3-6zM336 282l6 0l-3 6zM444 282l6 0l-3 6zM447 288l6 0l-3-6zM450 282l6 0l-3 6zM333 288l6 0l-3 6zM339 288l6 0l-3 6zM450 294l6 0l-3-6zM336 294l6 0l-3 6zM339 300l6 0l-3-6zM456 294l6 0l-3 6zM336 306l6 0l-3-6zM453 300l6 0l-3 6zM342 306l6 0l-3 6zM345 312l6 0l-3-6zM456 306l6 0l-3 6zM459 312l6 0l-3 6zM462 318l6 0l-3-6zM357 324l6 0l-3-6zM360 318l6 0l-3 6zM462 318l6 0l-3 6zM465 324l6 0l-3-6zM468 318l6 0l-3 6zM351 324l6 0l-3 6zM354 330l6 0l-3-6zM351 336l6 0l-3-6zM363 336l6 0l-3-6zM366 330l6 0l-3 6zM465 336l6 0l-3-6zM360 342l6 0l-3-6zM366 342l6 0l-3-6zM375 336l6 0l-3 6zM462 342l6 0l-3-6zM465 336l6 0l-3 6zM471 336l6 0l-3 6zM369 348l6 0l-3-6zM468 342l6 0l-3 6zM372 354l6 0l-3-6zM375 348l6 0l-3 6zM471 348l6 0l-3 6zM474 354l6 0l-3-6zM366 354l6 0l-3 6zM468 354l6 0l-3 6zM384 366l6 0l-3-6zM372 366l6 0l-3 6zM375 372l6 0l-3-6zM378 366l6 0l-3 6zM381 372l6 0l-3-6zM474 366l6 0l-3 6zM390 378l6 0l-3-6zM399 372l6 0l-3 6zM477 372l6 0l-3 6zM477 384l6 0l-3-6zM402 390l6 0l-3-6zM426 390l6 0l-3-6zM477 384l6 0l-3 6zM387 396l6 0l-3-6zM399 396l6 0l-3-6zM477 396l6 0l-3-6zM420 402l6 0l-3-6zM471 396l6 0l-3 6zM393 408l6 0l-3-6zM474 402l6 0l-3 6zM477 408l6 0l-3-6zM381 408l6 0l-3 6zM390 414l6 0l-3-6zM399 408l6 0l-3 6zM474 414l6 0l-3-6zM387 420l6 0l-3-6zM453 420l6 0l-3-6zM366 426l6 0l-3-6zM387 420l6 0l-3 6zM390 426l6 0l-3-6zM396 426l6 0l-3-6zM477 420l6 0l-3 6zM480 426l6 0l-3-6zM375 432l6 0l-3-6zM381 432l6 0l-3-6zM387 432l6 0l-3-6zM447 432l6 0l-3-6zM477 432l6 0l-3-6zM363 432l6 0l-3 6zM381 432l6 0l-3 6zM387 432l6 0l-3 6zM477 432l6 0l-3 6zM480 438l6 0l-3 6zM402 450l6 0l-3-6zM372 450l6 0l-3 6zM381 456l6 0l-3-6zM384 450l6 0l-3 6zM393 456l6 0l-3-6zM384 462l6 0l-3-6zM378 462l6 0l-3 6zM390 462l6 0l-3 6zM396 486l6 0l-3-6zM399 492l6 0l-3-6zM402 486l6 0l-3 6zM390 498l6 0l-3-6zM396 498l6 0l-3-6zM399 492l6 0l-3 6zM402 498l6 0l-3-6zM402 498l6 0l-3 6zM393 504l6 0l-3 6zM399 504l6 0l-3 6zM390 510l6 0l-3 6zM417 516l6 0l-3-6zM381 528l6 0l-3-6zM387 528l6 0l-3-6zM393 528l6 0l-3-6zM399 528l6 0l-3-6zM402 522l6 0l-3 6zM375 528l6 0l-3 6zM384 534l6 0l-3 6zM390 534l6 0l-3 6zM390 546l6 0l-3-6zM387 552l6 0l-3-6z"/><path fill="#1200ea" d="M396 198l6 0l-3 6zM399 204l6 0l-3-6zM294 210l6 0l-3-6zM297 204l6 0l-3 6zM300 210l6 0l-3-6zM303 204l6 0l-3 6zM306 210l6 0l-3-6zM402 210l6 0l-3-6zM288 210l6 0l-3 6zM291 216l6 0l-3-6zM294 210l6 0l-3 6zM297 216l6 0l-3-6zM300 210l6 0l-3 6zM303 216l6 0l-3-6zM402 210l6 0l-3 6zM294 222l6 0l-3-6zM297 216l6 0l-3 6zM300 222l6 0l-3-6zM303 216l6 0l-3 6zM306 222l6 0l-3-6zM294 222l6 0l-3 6zM300 222l6 0l-3 6zM303 228l6 0l-3-6zM306 222l6 0l-3 6zM405 228l6 0l-3-6zM303 228l6 0l-3 6zM405 228l6 0l-3 6zM297 240l6 0l-3-6zM303 240l6 0l-3-6zM306 234l6 0l-3 6zM309 240l6 0l-3-6zM408 234l6 0l-3 6zM411 240l6 0l-3-6zM306 246l6 0l-3-6zM309 240l6 0l-3 6zM414 246l6 0l-3-6zM420 246l6 0l-3-6zM303 252l6 0l-3-6zM306 246l6 0l-3 6zM309 252l6 0l-3-6zM420 246l6 0l-3 6zM423 252l6 0l-3-6zM309 252l6 0l-3 6zM312 258l6 0l-3-6zM426 258l6 0l-3-6zM315 264l6 0l-3-6zM432 258l6 0l-3 6zM435 264l6 0l-3-6zM315 264l6 0l-3 6zM318 270l6 0l-3-6zM435 264l6 0l-3 6zM438 270l6 0l-3-6zM318 270l6 0l-3 6zM321 276l6 0l-3-6zM441 276l6 0l-3-6zM444 270l6 0l-3 6zM447 276l6 0l-3-6zM324 282l6 0l-3-6zM327 276l6 0l-3 6zM447 276l6 0l-3 6zM450 282l6 0l-3-6zM453 276l6 0l-3 6zM456 282l6 0l-3-6zM324 282l6 0l-3 6zM327 288l6 0l-3-6zM330 282l6 0l-3 6zM333 288l6 0l-3-6zM453 288l6 0l-3-6zM456 282l6 0l-3 6zM459 288l6 0l-3-6zM330 294l6 0l-3-6zM336 294l6 0l-3-6zM453 288l6 0l-3 6zM456 294l6 0l-3-6zM459 288l6 0l-3 6zM333 300l6 0l-3-6zM375 300l6 0l-3-6zM453 300l6 0l-3-6zM462 294l6 0l-3 6zM465 300l6 0l-3-6zM339 300l6 0l-3 6zM342 306l6 0l-3-6zM456 306l6 0l-3-6zM459 300l6 0l-3 6zM462 306l6 0l-3-6zM465 300l6 0l-3 6zM468 306l6 0l-3-6zM462 306l6 0l-3 6zM465 312l6 0l-3-6zM468 306l6 0l-3 6zM342 318l6 0l-3-6zM345 312l6 0l-3 6zM348 318l6 0l-3-6zM465 312l6 0l-3 6zM468 318l6 0l-3-6zM471 312l6 0l-3 6zM306 318l6 0l-3 6zM339 324l6 0l-3-6zM345 324l6 0l-3-6zM348 318l6 0l-3 6zM351 324l6 0l-3-6zM354 318l6 0l-3 6zM471 324l6 0l-3-6zM345 324l6 0l-3 6zM360 330l6 0l-3-6zM471 324l6 0l-3 6zM474 330l6 0l-3-6zM354 330l6 0l-3 6zM357 336l6 0l-3-6zM360 330l6 0l-3 6zM474 330l6 0l-3 6zM477 336l6 0l-3-6zM468 342l6 0l-3-6zM471 348l6 0l-3-6zM366 354l6 0l-3-6zM372 354l6 0l-3 6zM378 354l6 0l-3 6zM474 354l6 0l-3 6zM477 360l6 0l-3-6zM363 360l6 0l-3 6zM372 366l6 0l-3-6zM378 366l6 0l-3-6zM381 360l6 0l-3 6zM477 360l6 0l-3 6zM480 366l6 0l-3-6zM366 366l6 0l-3 6zM477 372l6 0l-3-6zM480 366l6 0l-3 6zM372 378l6 0l-3-6zM381 372l6 0l-3 6zM474 378l6 0l-3-6zM393 384l6 0l-3-6zM480 378l6 0l-3 6zM390 390l6 0l-3-6zM474 390l6 0l-3-6zM393 396l6 0l-3-6zM474 390l6 0l-3 6zM375 396l6 0l-3 6zM384 402l6 0l-3-6zM387 396l6 0l-3 6zM477 396l6 0l-3 6zM480 402l6 0l-3-6zM387 408l6 0l-3-6zM450 414l6 0l-3-6zM477 408l6 0l-3 6zM480 414l6 0l-3 6zM372 426l6 0l-3-6zM483 420l6 0l-3 6zM480 426l6 0l-3 6zM483 432l6 0l-3-6zM486 426l6 0l-3 6zM339 432l6 0l-3 6zM483 432l6 0l-3 6zM486 438l6 0l-3-6zM372 438l6 0l-3 6zM378 438l6 0l-3 6zM381 444l6 0l-3-6zM378 450l6 0l-3-6zM384 450l6 0l-3-6zM414 450l6 0l-3-6zM375 456l6 0l-3-6zM378 450l6 0l-3 6zM372 462l6 0l-3-6zM381 456l6 0l-3 6zM408 462l6 0l-3-6zM387 468l6 0l-3-6zM399 468l6 0l-3-6zM381 468l6 0l-3 6zM384 474l6 0l-3-6zM372 474l6 0l-3 6zM384 474l6 0l-3 6zM390 474l6 0l-3 6zM396 474l6 0l-3 6zM387 480l6 0l-3 6zM411 492l6 0l-3 6zM396 498l6 0l-3 6zM396 510l6 0l-3-6zM405 516l6 0l-3-6zM408 510l6 0l-3 6zM384 522l6 0l-3-6zM393 516l6 0l-3 6zM399 516l6 0l-3 6zM408 522l6 0l-3-6zM360 522l6 0l-3 6zM396 522l6 0l-3 6zM381 528l6 0l-3 6zM393 528l6 0l-3 6zM396 534l6 0l-3-6zM381 540l6 0l-3-6zM387 540l6 0l-3-6zM396 534l6 0l-3 6zM363 540l6 0l-3 6zM366 546l6 0l-3-6zM375 540l6 0l-3 6zM387 540l6 0l-3 6zM393 540l6 0l-3 6zM375 552l6 0l-3-6zM390 546l6 0l-3 6zM351 552l6 0l-3 6zM372 558l6 0l-3-6z"/><path fill="#2400ff" d="M402 198l6 0l-3 6zM408 198l6 0l-3 6zM411 204l6 0l-3-6zM288 210l6 0l-3-6zM405 204l6 0l-3 6zM411 204l6 0l-3 6zM285 216l6 0l-3-6zM405 216l6 0l-3-6zM408 210l6 0l-3 6zM285 216l6 0l-3 6zM288 222l6 0l-3-6zM291 216l6 0l-3 6zM405 216l6 0l-3 6zM408 222l6 0l-3-6zM282 222l6 0l-3 6zM285 228l6 0l-3-6zM288 222l6 0l-3 6zM291 228l6 0l-3-6zM297 228l6 0l-3-6zM408 222l6 0l-3 6zM411 228l6 0l-3-6zM291 228l6 0l-3 6zM294 234l6 0l-3-6zM297 228l6 0l-3 6zM300 234l6 0l-3-6zM408 234l6 0l-3-6zM411 228l6 0l-3 6zM414 234l6 0l-3-6zM417 228l6 0l-3 6zM300 234l6 0l-3 6zM414 234l6 0l-3 6zM417 240l6 0l-3-6zM291 240l6 0l-3 6zM294 246l6 0l-3-6zM297 240l6 0l-3 6zM300 246l6 0l-3-6zM303 240l6 0l-3 6zM417 240l6 0l-3 6zM423 240l6 0l-3 6zM291 252l6 0l-3-6zM297 252l6 0l-3-6zM300 246l6 0l-3 6zM426 246l6 0l-3 6zM294 258l6 0l-3-6zM297 252l6 0l-3 6zM300 258l6 0l-3-6zM303 252l6 0l-3 6zM306 258l6 0l-3-6zM429 252l6 0l-3 6zM432 258l6 0l-3-6zM435 252l6 0l-3 6zM438 258l6 0l-3-6zM300 258l6 0l-3 6zM303 264l6 0l-3-6zM306 258l6 0l-3 6zM309 264l6 0l-3-6zM312 258l6 0l-3 6zM438 258l6 0l-3 6zM441 264l6 0l-3-6zM306 270l6 0l-3-6zM309 264l6 0l-3 6zM312 270l6 0l-3-6zM441 264l6 0l-3 6zM444 270l6 0l-3-6zM312 270l6 0l-3 6zM315 276l6 0l-3-6zM450 270l6 0l-3 6zM453 276l6 0l-3-6zM315 276l6 0l-3 6zM318 282l6 0l-3-6zM459 276l6 0l-3 6zM462 282l6 0l-3 6zM321 288l6 0l-3 6zM324 294l6 0l-3-6zM462 294l6 0l-3-6zM465 288l6 0l-3 6zM330 294l6 0l-3 6zM459 300l6 0l-3-6zM471 300l6 0l-3-6zM327 300l6 0l-3 6zM471 300l6 0l-3 6zM474 306l6 0l-3-6zM477 300l6 0l-3 6zM330 306l6 0l-3 6zM471 312l6 0l-3-6zM474 318l6 0l-3-6zM477 312l6 0l-3 6zM480 318l6 0l-3-6zM342 318l6 0l-3 6zM474 318l6 0l-3 6zM477 324l6 0l-3-6zM339 324l6 0l-3 6zM468 330l6 0l-3-6zM477 324l6 0l-3 6zM480 330l6 0l-3-6zM342 330l6 0l-3 6zM387 336l6 0l-3-6zM471 336l6 0l-3-6zM480 330l6 0l-3 6zM354 342l6 0l-3-6zM357 336l6 0l-3 6zM474 342l6 0l-3-6zM477 336l6 0l-3 6zM483 336l6 0l-3 6zM354 342l6 0l-3 6zM363 348l6 0l-3-6zM474 342l6 0l-3 6zM477 348l6 0l-3-6zM480 342l6 0l-3 6zM483 348l6 0l-3-6zM357 348l6 0l-3 6zM477 348l6 0l-3 6zM480 354l6 0l-3-6zM486 354l6 0l-3-6zM399 360l6 0l-3-6zM480 354l6 0l-3 6zM483 360l6 0l-3-6zM486 354l6 0l-3 6zM369 360l6 0l-3 6zM375 360l6 0l-3 6zM426 366l6 0l-3-6zM483 360l6 0l-3 6zM384 366l6 0l-3 6zM483 372l6 0l-3-6zM486 366l6 0l-3 6zM480 378l6 0l-3-6zM483 372l6 0l-3 6zM387 384l6 0l-3 6zM393 384l6 0l-3 6zM480 390l6 0l-3-6zM483 384l6 0l-3 6zM390 390l6 0l-3 6zM480 390l6 0l-3 6zM483 396l6 0l-3-6zM366 402l6 0l-3-6zM381 396l6 0l-3 6zM393 396l6 0l-3 6zM402 402l6 0l-3-6zM483 396l6 0l-3 6zM384 402l6 0l-3 6zM396 402l6 0l-3 6zM480 402l6 0l-3 6zM483 408l6 0l-3-6zM366 414l6 0l-3-6zM378 414l6 0l-3-6zM480 414l6 0l-3-6zM483 408l6 0l-3 6zM486 414l6 0l-3-6zM369 420l6 0l-3-6zM372 414l6 0l-3 6zM375 420l6 0l-3-6zM381 420l6 0l-3-6zM486 414l6 0l-3 6zM381 420l6 0l-3 6zM486 426l6 0l-3-6zM489 420l6 0l-3 6zM489 432l6 0l-3-6zM375 432l6 0l-3 6zM402 438l6 0l-3-6zM384 438l6 0l-3 6zM345 444l6 0l-3 6zM366 450l6 0l-3-6zM381 444l6 0l-3 6zM369 456l6 0l-3-6zM309 456l6 0l-3 6zM366 462l6 0l-3-6zM375 468l6 0l-3-6zM393 468l6 0l-3 6zM369 480l6 0l-3-6zM393 480l6 0l-3-6zM390 486l6 0l-3-6zM375 492l6 0l-3-6zM378 486l6 0l-3 6zM384 486l6 0l-3 6zM387 492l6 0l-3-6zM390 486l6 0l-3 6zM393 492l6 0l-3-6zM393 492l6 0l-3 6zM372 498l6 0l-3 6zM384 498l6 0l-3 6zM429 504l6 0l-3-6zM381 504l6 0l-3 6zM378 510l6 0l-3 6zM378 522l6 0l-3-6zM390 522l6 0l-3 6zM369 528l6 0l-3 6zM375 540l6 0l-3-6zM369 540l6 0l-3 6zM372 546l6 0l-3-6zM378 546l6 0l-3-6zM381 540l6 0l-3 6zM384 546l6 0l-3-6zM372 546l6 0l-3 6zM381 552l6 0l-3-6zM384 546l6 0l-3 6zM375 552l6 0l-3 6z"/><path fill="#3700ff" d="M414 198l6 0l-3 6zM408 210l6 0l-3-6zM414 210l6 0l-3-6zM279 216l6 0l-3-6zM282 210l6 0l-3 6zM411 216l6 0l-3-6zM414 210l6 0l-3 6zM417 216l6 0l-3-6zM270 222l6 0l-3-6zM273 216l6 0l-3 6zM276 222l6 0l-3-6zM279 216l6 0l-3 6zM282 222l6 0l-3-6zM411 216l6 0l-3 6zM414 222l6 0l-3-6zM273 228l6 0l-3-6zM276 222l6 0l-3 6zM279 228l6 0l-3-6zM414 222l6 0l-3 6zM417 228l6 0l-3-6zM279 228l6 0l-3 6zM285 228l6 0l-3 6zM288 234l6 0l-3-6zM420 234l6 0l-3-6zM282 234l6 0l-3 6zM285 240l6 0l-3-6zM288 234l6 0l-3 6zM291 240l6 0l-3-6zM294 234l6 0l-3 6zM420 234l6 0l-3 6zM423 240l6 0l-3-6zM429 240l6 0l-3-6zM285 240l6 0l-3 6zM288 246l6 0l-3-6zM426 246l6 0l-3-6zM429 240l6 0l-3 6zM285 252l6 0l-3-6zM288 246l6 0l-3 6zM294 246l6 0l-3 6zM429 252l6 0l-3-6zM432 246l6 0l-3 6zM282 258l6 0l-3-6zM285 252l6 0l-3 6zM288 258l6 0l-3-6zM291 252l6 0l-3 6zM441 252l6 0l-3 6zM444 258l6 0l-3-6zM288 258l6 0l-3 6zM291 264l6 0l-3-6zM294 258l6 0l-3 6zM297 264l6 0l-3-6zM444 258l6 0l-3 6zM447 264l6 0l-3-6zM450 258l6 0l-3 6zM453 264l6 0l-3-6zM297 264l6 0l-3 6zM300 270l6 0l-3-6zM303 264l6 0l-3 6zM447 264l6 0l-3 6zM450 270l6 0l-3-6zM453 264l6 0l-3 6zM456 270l6 0l-3-6zM459 264l6 0l-3 6zM300 270l6 0l-3 6zM303 276l6 0l-3-6zM306 270l6 0l-3 6zM309 276l6 0l-3-6zM456 270l6 0l-3 6zM459 276l6 0l-3-6zM462 270l6 0l-3 6zM465 276l6 0l-3-6zM303 276l6 0l-3 6zM309 276l6 0l-3 6zM312 282l6 0l-3-6zM462 282l6 0l-3-6zM312 282l6 0l-3 6zM315 288l6 0l-3-6zM318 282l6 0l-3 6zM321 288l6 0l-3-6zM465 288l6 0l-3-6zM468 282l6 0l-3 6zM471 288l6 0l-3-6zM315 288l6 0l-3 6zM318 294l6 0l-3-6zM327 288l6 0l-3 6zM468 294l6 0l-3-6zM471 288l6 0l-3 6zM474 294l6 0l-3-6zM321 300l6 0l-3-6zM324 294l6 0l-3 6zM327 300l6 0l-3-6zM363 300l6 0l-3-6zM468 294l6 0l-3 6zM474 294l6 0l-3 6zM477 300l6 0l-3-6zM321 300l6 0l-3 6zM324 306l6 0l-3-6zM333 300l6 0l-3 6zM480 306l6 0l-3-6zM483 300l6 0l-3 6zM324 306l6 0l-3 6zM327 312l6 0l-3-6zM333 312l6 0l-3-6zM336 306l6 0l-3 6zM339 312l6 0l-3-6zM474 306l6 0l-3 6zM477 312l6 0l-3-6zM480 306l6 0l-3 6zM483 312l6 0l-3-6zM486 306l6 0l-3 6zM321 312l6 0l-3 6zM324 318l6 0l-3-6zM330 318l6 0l-3-6zM333 312l6 0l-3 6zM339 312l6 0l-3 6zM483 312l6 0l-3 6zM336 318l6 0l-3 6zM480 318l6 0l-3 6zM483 324l6 0l-3-6zM486 318l6 0l-3 6zM321 324l6 0l-3 6zM342 330l6 0l-3-6zM384 330l6 0l-3-6zM483 324l6 0l-3 6zM486 330l6 0l-3-6zM345 336l6 0l-3-6zM483 336l6 0l-3-6zM486 330l6 0l-3 6zM489 336l6 0l-3-6zM348 342l6 0l-3-6zM351 336l6 0l-3 6zM480 342l6 0l-3-6zM486 342l6 0l-3-6zM489 336l6 0l-3 6zM489 348l6 0l-3-6zM354 354l6 0l-3-6zM483 348l6 0l-3 6zM489 348l6 0l-3 6zM501 348l6 0l-3 6zM348 354l6 0l-3 6zM354 354l6 0l-3 6zM357 360l6 0l-3-6zM360 354l6 0l-3 6zM489 360l6 0l-3-6zM360 366l6 0l-3-6zM366 366l6 0l-3-6zM486 366l6 0l-3-6zM360 366l6 0l-3 6zM363 372l6 0l-3-6zM354 378l6 0l-3-6zM357 372l6 0l-3 6zM360 378l6 0l-3-6zM366 378l6 0l-3-6zM486 378l6 0l-3-6zM489 372l6 0l-3 6zM360 378l6 0l-3 6zM483 384l6 0l-3-6zM486 378l6 0l-3 6zM489 384l6 0l-3-6zM381 384l6 0l-3 6zM384 390l6 0l-3-6zM456 390l6 0l-3-6zM372 390l6 0l-3 6zM378 390l6 0l-3 6zM381 396l6 0l-3-6zM384 390l6 0l-3 6zM378 402l6 0l-3-6zM486 402l6 0l-3-6zM489 396l6 0l-3 6zM492 402l6 0l-3-6zM369 408l6 0l-3-6zM378 402l6 0l-3 6zM381 408l6 0l-3-6zM486 402l6 0l-3 6zM489 408l6 0l-3-6zM363 408l6 0l-3 6zM384 414l6 0l-3-6zM378 414l6 0l-3 6zM390 414l6 0l-3 6zM375 420l6 0l-3 6zM378 426l6 0l-3-6zM414 426l6 0l-3-6zM492 426l6 0l-3-6zM351 432l6 0l-3-6zM357 432l6 0l-3-6zM372 426l6 0l-3 6zM360 438l6 0l-3-6zM369 432l6 0l-3 6zM357 444l6 0l-3-6zM369 444l6 0l-3 6zM372 450l6 0l-3-6zM375 444l6 0l-3 6zM348 450l6 0l-3 6zM366 450l6 0l-3 6zM459 456l6 0l-3-6zM357 456l6 0l-3 6zM369 456l6 0l-3 6zM366 462l6 0l-3 6zM369 468l6 0l-3-6zM381 468l6 0l-3-6zM384 462l6 0l-3 6zM378 474l6 0l-3-6zM387 468l6 0l-3 6zM363 480l6 0l-3-6zM381 480l6 0l-3-6zM375 480l6 0l-3 6zM384 486l6 0l-3-6zM369 492l6 0l-3-6zM366 498l6 0l-3-6zM420 498l6 0l-3-6zM366 498l6 0l-3 6zM381 504l6 0l-3-6zM387 504l6 0l-3-6zM372 510l6 0l-3-6zM375 516l6 0l-3-6zM393 516l6 0l-3-6zM375 516l6 0l-3 6zM369 528l6 0l-3-6zM372 522l6 0l-3 6zM375 528l6 0l-3-6zM384 522l6 0l-3 6zM351 528l6 0l-3 6zM366 534l6 0l-3-6zM372 534l6 0l-3-6zM369 540l6 0l-3-6zM372 534l6 0l-3 6zM378 534l6 0l-3 6zM378 546l6 0l-3 6zM366 558l6 0l-3-6zM351 564l6 0l-3-6z"/><path fill="#4900ff" d="M417 204l6 0l-3-6zM417 204l6 0l-3 6zM420 210l6 0l-3-6zM420 210l6 0l-3 6zM423 216l6 0l-3-6zM264 222l6 0l-3-6zM267 216l6 0l-3 6zM417 216l6 0l-3 6zM420 222l6 0l-3-6zM423 216l6 0l-3 6zM258 222l6 0l-3 6zM261 228l6 0l-3-6zM264 222l6 0l-3 6zM267 228l6 0l-3-6zM270 222l6 0l-3 6zM420 222l6 0l-3 6zM423 228l6 0l-3-6zM267 228l6 0l-3 6zM270 234l6 0l-3-6zM273 228l6 0l-3 6zM276 234l6 0l-3-6zM423 228l6 0l-3 6zM426 234l6 0l-3-6zM429 228l6 0l-3 6zM273 240l6 0l-3-6zM276 234l6 0l-3 6zM279 240l6 0l-3-6zM426 234l6 0l-3 6zM432 234l6 0l-3 6zM435 240l6 0l-3-6zM270 246l6 0l-3-6zM273 240l6 0l-3 6zM276 246l6 0l-3-6zM279 240l6 0l-3 6zM282 246l6 0l-3-6zM432 246l6 0l-3-6zM435 240l6 0l-3 6zM438 246l6 0l-3-6zM267 252l6 0l-3-6zM270 246l6 0l-3 6zM273 252l6 0l-3-6zM276 246l6 0l-3 6zM279 252l6 0l-3-6zM282 246l6 0l-3 6zM435 252l6 0l-3-6zM438 246l6 0l-3 6zM441 252l6 0l-3-6zM270 258l6 0l-3-6zM276 258l6 0l-3-6zM279 252l6 0l-3 6zM447 252l6 0l-3 6zM450 258l6 0l-3-6zM273 264l6 0l-3-6zM276 258l6 0l-3 6zM279 264l6 0l-3-6zM282 258l6 0l-3 6zM285 264l6 0l-3-6zM456 258l6 0l-3 6zM459 264l6 0l-3-6zM462 258l6 0l-3 6zM285 264l6 0l-3 6zM288 270l6 0l-3-6zM291 264l6 0l-3 6zM294 270l6 0l-3-6zM462 270l6 0l-3-6zM288 270l6 0l-3 6zM291 276l6 0l-3-6zM294 270l6 0l-3 6zM297 276l6 0l-3-6zM468 270l6 0l-3 6zM297 276l6 0l-3 6zM300 282l6 0l-3-6zM306 282l6 0l-3-6zM465 276l6 0l-3 6zM468 282l6 0l-3-6zM471 276l6 0l-3 6zM474 282l6 0l-3-6zM297 288l6 0l-3-6zM300 282l6 0l-3 6zM303 288l6 0l-3-6zM306 282l6 0l-3 6zM309 288l6 0l-3-6zM477 288l6 0l-3-6zM303 288l6 0l-3 6zM312 294l6 0l-3-6zM477 288l6 0l-3 6zM480 294l6 0l-3-6zM309 300l6 0l-3-6zM318 294l6 0l-3 6zM480 294l6 0l-3 6zM483 300l6 0l-3-6zM318 306l6 0l-3-6zM330 306l6 0l-3-6zM486 306l6 0l-3-6zM489 312l6 0l-3-6zM378 318l6 0l-3-6zM486 318l6 0l-3-6zM489 312l6 0l-3 6zM492 318l6 0l-3-6zM318 318l6 0l-3 6zM321 324l6 0l-3-6zM330 318l6 0l-3 6zM333 324l6 0l-3-6zM489 324l6 0l-3-6zM333 324l6 0l-3 6zM489 324l6 0l-3 6zM492 330l6 0l-3-6zM339 336l6 0l-3-6zM348 330l6 0l-3 6zM492 330l6 0l-3 6zM495 336l6 0l-3-6zM339 336l6 0l-3 6zM345 336l6 0l-3 6zM492 342l6 0l-3-6zM495 336l6 0l-3 6zM336 342l6 0l-3 6zM348 342l6 0l-3 6zM351 348l6 0l-3-6zM357 348l6 0l-3-6zM486 342l6 0l-3 6zM492 342l6 0l-3 6zM402 354l6 0l-3-6zM492 354l6 0l-3-6zM495 348l6 0l-3 6zM492 354l6 0l-3 6zM495 360l6 0l-3-6zM498 354l6 0l-3 6zM345 360l6 0l-3 6zM414 366l6 0l-3-6zM489 360l6 0l-3 6zM492 366l6 0l-3-6zM489 372l6 0l-3-6zM492 366l6 0l-3 6zM351 372l6 0l-3 6zM492 378l6 0l-3-6zM354 378l6 0l-3 6zM363 384l6 0l-3-6zM378 378l6 0l-3 6zM363 384l6 0l-3 6zM378 390l6 0l-3-6zM414 390l6 0l-3-6zM489 384l6 0l-3 6zM363 396l6 0l-3-6zM375 396l6 0l-3-6zM486 390l6 0l-3 6zM489 396l6 0l-3-6zM492 390l6 0l-3 6zM372 402l6 0l-3-6zM390 402l6 0l-3-6zM363 408l6 0l-3-6zM366 402l6 0l-3 6zM375 408l6 0l-3-6zM492 402l6 0l-3 6zM495 408l6 0l-3-6zM375 408l6 0l-3 6zM387 408l6 0l-3 6zM489 408l6 0l-3 6zM492 414l6 0l-3-6zM366 414l6 0l-3 6zM384 414l6 0l-3 6zM489 420l6 0l-3-6zM492 414l6 0l-3 6zM495 420l6 0l-3-6zM369 432l6 0l-3-6zM354 438l6 0l-3-6zM366 438l6 0l-3-6zM348 450l6 0l-3-6zM354 450l6 0l-3-6zM336 450l6 0l-3 6zM354 450l6 0l-3 6zM357 456l6 0l-3-6zM360 450l6 0l-3 6zM363 456l6 0l-3-6zM354 462l6 0l-3-6zM363 456l6 0l-3 6zM375 456l6 0l-3 6zM378 462l6 0l-3-6zM354 462l6 0l-3 6zM360 462l6 0l-3 6zM354 474l6 0l-3-6zM369 468l6 0l-3 6zM375 468l6 0l-3 6zM357 480l6 0l-3-6zM354 486l6 0l-3-6zM372 486l6 0l-3-6zM381 480l6 0l-3 6zM408 486l6 0l-3-6zM372 486l6 0l-3 6zM369 492l6 0l-3 6zM372 498l6 0l-3-6zM378 498l6 0l-3-6zM381 492l6 0l-3 6zM387 492l6 0l-3 6zM378 498l6 0l-3 6zM399 504l6 0l-3-6zM363 504l6 0l-3 6zM378 510l6 0l-3-6zM384 510l6 0l-3-6zM387 504l6 0l-3 6zM390 510l6 0l-3-6zM372 510l6 0l-3 6zM381 516l6 0l-3-6zM384 510l6 0l-3 6zM387 516l6 0l-3-6zM357 516l6 0l-3 6zM360 522l6 0l-3-6zM369 516l6 0l-3 6zM381 516l6 0l-3 6zM366 522l6 0l-3 6zM357 528l6 0l-3 6zM351 540l6 0l-3-6zM360 534l6 0l-3 6zM363 540l6 0l-3-6zM366 534l6 0l-3 6zM351 540l6 0l-3 6zM357 540l6 0l-3 6zM363 552l6 0l-3-6zM363 552l6 0l-3 6zM369 552l6 0l-3 6zM345 564l6 0l-3-6zM333 564l6 0l-3 6z"/><path fill="#5b00ff" d="M423 204l6 0l-3-6zM423 204l6 0l-3 6zM426 210l6 0l-3-6zM432 210l6 0l-3-6zM426 210l6 0l-3 6zM429 216l6 0l-3-6zM426 222l6 0l-3-6zM429 216l6 0l-3 6zM432 222l6 0l-3-6zM255 228l6 0l-3-6zM426 222l6 0l-3 6zM429 228l6 0l-3-6zM432 222l6 0l-3 6zM435 228l6 0l-3-6zM252 234l6 0l-3-6zM255 228l6 0l-3 6zM258 234l6 0l-3-6zM261 228l6 0l-3 6zM264 234l6 0l-3-6zM432 234l6 0l-3-6zM435 228l6 0l-3 6zM258 234l6 0l-3 6zM261 240l6 0l-3-6zM264 234l6 0l-3 6zM267 240l6 0l-3-6zM270 234l6 0l-3 6zM438 234l6 0l-3 6zM261 240l6 0l-3 6zM264 246l6 0l-3-6zM267 240l6 0l-3 6zM441 240l6 0l-3 6zM444 246l6 0l-3-6zM261 252l6 0l-3-6zM264 246l6 0l-3 6zM444 246l6 0l-3 6zM447 252l6 0l-3-6zM450 246l6 0l-3 6zM453 252l6 0l-3-6zM261 252l6 0l-3 6zM264 258l6 0l-3-6zM267 252l6 0l-3 6zM273 252l6 0l-3 6zM453 252l6 0l-3 6zM456 258l6 0l-3-6zM264 258l6 0l-3 6zM267 264l6 0l-3-6zM270 258l6 0l-3 6zM465 264l6 0l-3-6zM267 264l6 0l-3 6zM273 264l6 0l-3 6zM276 270l6 0l-3-6zM279 264l6 0l-3 6zM282 270l6 0l-3-6zM465 264l6 0l-3 6zM468 270l6 0l-3-6zM276 270l6 0l-3 6zM279 276l6 0l-3-6zM282 270l6 0l-3 6zM285 276l6 0l-3-6zM471 276l6 0l-3-6zM282 282l6 0l-3-6zM285 276l6 0l-3 6zM288 282l6 0l-3-6zM291 276l6 0l-3 6zM294 282l6 0l-3-6zM477 276l6 0l-3 6zM288 282l6 0l-3 6zM291 288l6 0l-3-6zM294 282l6 0l-3 6zM474 282l6 0l-3 6zM480 282l6 0l-3 6zM483 288l6 0l-3-6zM294 294l6 0l-3-6zM297 288l6 0l-3 6zM300 294l6 0l-3-6zM306 294l6 0l-3-6zM309 288l6 0l-3 6zM483 288l6 0l-3 6zM486 294l6 0l-3-6zM297 300l6 0l-3-6zM306 294l6 0l-3 6zM315 300l6 0l-3-6zM486 294l6 0l-3 6zM489 300l6 0l-3-6zM303 300l6 0l-3 6zM306 306l6 0l-3-6zM312 306l6 0l-3-6zM315 300l6 0l-3 6zM489 300l6 0l-3 6zM492 306l6 0l-3-6zM318 306l6 0l-3 6zM321 312l6 0l-3-6zM492 306l6 0l-3 6zM495 312l6 0l-3-6zM306 318l6 0l-3-6zM318 318l6 0l-3-6zM327 312l6 0l-3 6zM315 324l6 0l-3-6zM324 318l6 0l-3 6zM492 318l6 0l-3 6zM495 324l6 0l-3-6zM336 330l6 0l-3-6zM495 324l6 0l-3 6zM498 330l6 0l-3-6zM318 330l6 0l-3 6zM336 330l6 0l-3 6zM498 330l6 0l-3 6zM321 336l6 0l-3 6zM330 342l6 0l-3-6zM333 336l6 0l-3 6zM336 342l6 0l-3-6zM498 342l6 0l-3-6zM318 342l6 0l-3 6zM321 348l6 0l-3-6zM342 342l6 0l-3 6zM345 348l6 0l-3-6zM495 348l6 0l-3-6zM498 342l6 0l-3 6zM501 348l6 0l-3-6zM333 348l6 0l-3 6zM351 348l6 0l-3 6zM345 360l6 0l-3-6zM342 366l6 0l-3-6zM357 360l6 0l-3 6zM495 360l6 0l-3 6zM348 366l6 0l-3 6zM354 366l6 0l-3 6zM495 372l6 0l-3-6zM369 372l6 0l-3 6zM495 372l6 0l-3 6zM366 378l6 0l-3 6zM369 384l6 0l-3-6zM375 384l6 0l-3-6zM492 378l6 0l-3 6zM495 384l6 0l-3-6zM498 378l6 0l-3 6zM366 390l6 0l-3-6zM375 384l6 0l-3 6zM492 390l6 0l-3-6zM495 384l6 0l-3 6zM366 390l6 0l-3 6zM369 396l6 0l-3-6zM495 396l6 0l-3-6zM348 402l6 0l-3-6zM357 396l6 0l-3 6zM363 396l6 0l-3 6zM369 396l6 0l-3 6zM327 408l6 0l-3-6zM372 402l6 0l-3 6zM333 408l6 0l-3 6zM360 414l6 0l-3-6zM369 408l6 0l-3 6zM372 414l6 0l-3-6zM495 408l6 0l-3 6zM351 420l6 0l-3-6zM363 420l6 0l-3-6zM354 426l6 0l-3-6zM363 420l6 0l-3 6zM369 420l6 0l-3 6zM384 426l6 0l-3-6zM327 432l6 0l-3-6zM360 426l6 0l-3 6zM318 438l6 0l-3-6zM336 438l6 0l-3-6zM342 438l6 0l-3-6zM351 432l6 0l-3 6zM357 432l6 0l-3 6zM378 438l6 0l-3-6zM351 444l6 0l-3-6zM354 438l6 0l-3 6zM366 438l6 0l-3 6zM357 444l6 0l-3 6zM363 444l6 0l-3 6zM333 456l6 0l-3-6zM342 450l6 0l-3 6zM348 462l6 0l-3-6zM351 456l6 0l-3 6zM372 462l6 0l-3 6zM330 474l6 0l-3-6zM348 474l6 0l-3-6zM357 468l6 0l-3 6zM360 474l6 0l-3-6zM366 474l6 0l-3-6zM351 480l6 0l-3-6zM360 474l6 0l-3 6zM366 474l6 0l-3 6zM357 480l6 0l-3 6zM360 486l6 0l-3-6zM369 480l6 0l-3 6zM357 492l6 0l-3-6zM360 486l6 0l-3 6zM366 486l6 0l-3 6zM381 492l6 0l-3-6zM363 492l6 0l-3 6zM375 492l6 0l-3 6zM384 498l6 0l-3-6zM408 498l6 0l-3-6zM348 498l6 0l-3 6zM369 504l6 0l-3-6zM375 504l6 0l-3-6zM354 510l6 0l-3-6zM360 510l6 0l-3-6zM369 504l6 0l-3 6zM375 504l6 0l-3 6zM357 516l6 0l-3-6zM360 510l6 0l-3 6zM363 516l6 0l-3-6zM369 516l6 0l-3-6zM348 522l6 0l-3-6zM372 522l6 0l-3-6zM363 528l6 0l-3-6zM360 534l6 0l-3-6zM363 528l6 0l-3 6zM354 534l6 0l-3 6zM336 546l6 0l-3-6zM354 546l6 0l-3-6zM351 552l6 0l-3-6zM354 558l6 0l-3-6zM360 558l6 0l-3-6zM354 558l6 0l-3 6zM357 564l6 0l-3-6zM360 558l6 0l-3 6zM345 564l6 0l-3 6z"/><path fill="#6d00ff" d="M429 204l6 0l-3 6zM432 210l6 0l-3 6zM435 216l6 0l-3-6zM435 216l6 0l-3 6zM438 222l6 0l-3-6zM438 222l6 0l-3 6zM441 228l6 0l-3-6zM246 234l6 0l-3-6zM249 228l6 0l-3 6zM438 234l6 0l-3-6zM441 228l6 0l-3 6zM444 234l6 0l-3-6zM240 234l6 0l-3 6zM246 234l6 0l-3 6zM249 240l6 0l-3-6zM252 234l6 0l-3 6zM255 240l6 0l-3-6zM441 240l6 0l-3-6zM444 234l6 0l-3 6zM447 240l6 0l-3-6zM246 246l6 0l-3-6zM249 240l6 0l-3 6zM252 246l6 0l-3-6zM255 240l6 0l-3 6zM258 246l6 0l-3-6zM447 240l6 0l-3 6zM450 246l6 0l-3-6zM249 252l6 0l-3-6zM252 246l6 0l-3 6zM255 252l6 0l-3-6zM258 246l6 0l-3 6zM252 258l6 0l-3-6zM255 252l6 0l-3 6zM258 258l6 0l-3-6zM459 252l6 0l-3 6zM462 258l6 0l-3-6zM258 258l6 0l-3 6zM261 264l6 0l-3-6zM468 258l6 0l-3 6zM261 264l6 0l-3 6zM264 270l6 0l-3-6zM270 270l6 0l-3-6zM471 264l6 0l-3 6zM474 270l6 0l-3-6zM264 270l6 0l-3 6zM270 270l6 0l-3 6zM273 276l6 0l-3-6zM474 270l6 0l-3 6zM477 276l6 0l-3-6zM270 282l6 0l-3-6zM273 276l6 0l-3 6zM276 282l6 0l-3-6zM279 276l6 0l-3 6zM480 282l6 0l-3-6zM486 282l6 0l-3-6zM279 288l6 0l-3-6zM282 282l6 0l-3 6zM285 288l6 0l-3-6zM486 282l6 0l-3 6zM489 288l6 0l-3-6zM279 288l6 0l-3 6zM285 288l6 0l-3 6zM288 294l6 0l-3-6zM291 288l6 0l-3 6zM492 294l6 0l-3-6zM288 294l6 0l-3 6zM291 300l6 0l-3-6zM294 294l6 0l-3 6zM300 294l6 0l-3 6zM303 300l6 0l-3-6zM492 294l6 0l-3 6zM495 300l6 0l-3-6zM294 306l6 0l-3-6zM300 306l6 0l-3-6zM309 300l6 0l-3 6zM495 300l6 0l-3 6zM312 306l6 0l-3 6zM315 312l6 0l-3-6zM498 306l6 0l-3 6zM303 312l6 0l-3 6zM315 312l6 0l-3 6zM495 312l6 0l-3 6zM498 318l6 0l-3-6zM327 324l6 0l-3-6zM375 324l6 0l-3-6zM498 318l6 0l-3 6zM315 324l6 0l-3 6zM327 324l6 0l-3 6zM330 330l6 0l-3-6zM276 330l6 0l-3 6zM324 330l6 0l-3 6zM327 336l6 0l-3-6zM330 330l6 0l-3 6zM333 336l6 0l-3-6zM312 342l6 0l-3-6zM318 342l6 0l-3-6zM501 336l6 0l-3 6zM315 348l6 0l-3-6zM321 348l6 0l-3 6zM324 354l6 0l-3-6zM327 348l6 0l-3 6zM345 348l6 0l-3 6zM348 354l6 0l-3-6zM498 354l6 0l-3-6zM504 354l6 0l-3-6zM327 360l6 0l-3-6zM501 360l6 0l-3-6zM339 360l6 0l-3 6zM348 366l6 0l-3-6zM498 366l6 0l-3-6zM330 366l6 0l-3 6zM333 372l6 0l-3-6zM339 372l6 0l-3-6zM342 366l6 0l-3 6zM351 372l6 0l-3-6zM357 372l6 0l-3-6zM498 366l6 0l-3 6zM339 372l6 0l-3 6zM348 378l6 0l-3-6zM498 378l6 0l-3-6zM324 378l6 0l-3 6zM348 378l6 0l-3 6zM360 390l6 0l-3-6zM369 384l6 0l-3 6zM498 390l6 0l-3-6zM498 390l6 0l-3 6zM345 396l6 0l-3 6zM354 402l6 0l-3-6zM495 396l6 0l-3 6zM498 402l6 0l-3-6zM342 402l6 0l-3 6zM357 408l6 0l-3-6zM498 402l6 0l-3 6zM345 408l6 0l-3 6zM348 414l6 0l-3-6zM351 408l6 0l-3 6zM357 420l6 0l-3-6zM333 420l6 0l-3 6zM345 420l6 0l-3 6zM351 420l6 0l-3 6zM357 420l6 0l-3 6zM330 426l6 0l-3 6zM339 432l6 0l-3-6zM345 432l6 0l-3-6zM354 426l6 0l-3 6zM366 426l6 0l-3 6zM324 438l6 0l-3-6zM345 432l6 0l-3 6zM318 438l6 0l-3 6zM342 438l6 0l-3 6zM348 438l6 0l-3 6zM330 450l6 0l-3-6zM360 450l6 0l-3-6zM330 450l6 0l-3 6zM318 462l6 0l-3-6zM342 462l6 0l-3-6zM360 462l6 0l-3-6zM333 468l6 0l-3-6zM363 468l6 0l-3 6zM375 480l6 0l-3-6zM336 486l6 0l-3-6zM348 486l6 0l-3-6zM363 480l6 0l-3 6zM378 486l6 0l-3-6zM351 492l6 0l-3-6zM363 492l6 0l-3-6zM354 498l6 0l-3 6zM423 504l6 0l-3-6zM357 504l6 0l-3 6zM366 510l6 0l-3 6zM345 516l6 0l-3 6zM354 522l6 0l-3-6zM363 516l6 0l-3 6zM366 522l6 0l-3-6zM330 534l6 0l-3 6zM333 540l6 0l-3 6zM345 552l6 0l-3-6zM357 552l6 0l-3-6zM360 546l6 0l-3 6zM348 558l6 0l-3-6zM357 552l6 0l-3 6zM339 564l6 0l-3 6zM342 570l6 0l-3-6z"/><path fill="#8000ff" d="M435 204l6 0l-3 6zM438 210l6 0l-3-6zM438 210l6 0l-3 6zM441 216l6 0l-3-6zM402 222l6 0l-3-6zM441 216l6 0l-3 6zM444 222l6 0l-3-6zM444 222l6 0l-3 6zM447 228l6 0l-3-6zM237 240l6 0l-3-6zM243 240l6 0l-3-6zM450 234l6 0l-3 6zM453 240l6 0l-3-6zM237 240l6 0l-3 6zM240 246l6 0l-3-6zM243 240l6 0l-3 6zM453 240l6 0l-3 6zM243 252l6 0l-3-6zM246 246l6 0l-3 6zM456 246l6 0l-3 6zM459 252l6 0l-3-6zM249 252l6 0l-3 6zM465 252l6 0l-3 6zM468 258l6 0l-3-6zM246 258l6 0l-3 6zM252 258l6 0l-3 6zM255 264l6 0l-3-6zM471 264l6 0l-3-6zM474 258l6 0l-3 6zM255 264l6 0l-3 6zM258 270l6 0l-3-6zM477 264l6 0l-3 6zM261 276l6 0l-3-6zM267 276l6 0l-3-6zM480 270l6 0l-3 6zM267 276l6 0l-3 6zM483 276l6 0l-3 6zM276 282l6 0l-3 6zM492 282l6 0l-3 6zM273 288l6 0l-3 6zM276 294l6 0l-3-6zM282 294l6 0l-3-6zM489 288l6 0l-3 6zM495 288l6 0l-3 6zM498 294l6 0l-3-6zM279 300l6 0l-3 6zM291 300l6 0l-3 6zM297 300l6 0l-3 6zM348 306l6 0l-3-6zM498 306l6 0l-3-6zM291 312l6 0l-3-6zM294 306l6 0l-3 6zM297 312l6 0l-3-6zM300 306l6 0l-3 6zM306 306l6 0l-3 6zM501 312l6 0l-3-6zM291 312l6 0l-3 6zM312 318l6 0l-3-6zM501 312l6 0l-3 6zM312 318l6 0l-3 6zM501 324l6 0l-3-6zM294 330l6 0l-3-6zM300 330l6 0l-3-6zM306 330l6 0l-3-6zM501 324l6 0l-3 6zM504 330l6 0l-3-6zM312 330l6 0l-3 6zM315 336l6 0l-3-6zM321 336l6 0l-3-6zM504 330l6 0l-3 6zM327 336l6 0l-3 6zM504 342l6 0l-3-6zM324 342l6 0l-3 6zM327 348l6 0l-3-6zM330 342l6 0l-3 6zM333 348l6 0l-3-6zM339 348l6 0l-3-6zM504 342l6 0l-3 6zM309 348l6 0l-3 6zM339 348l6 0l-3 6zM312 354l6 0l-3 6zM336 354l6 0l-3 6zM342 354l6 0l-3 6zM351 360l6 0l-3-6zM363 360l6 0l-3-6zM504 354l6 0l-3 6zM330 366l6 0l-3-6zM351 360l6 0l-3 6zM501 360l6 0l-3 6zM504 366l6 0l-3-6zM501 372l6 0l-3-6zM324 378l6 0l-3-6zM342 378l6 0l-3-6zM345 372l6 0l-3 6zM363 372l6 0l-3 6zM501 372l6 0l-3 6zM333 384l6 0l-3-6zM342 378l6 0l-3 6zM501 384l6 0l-3-6zM336 390l6 0l-3-6zM342 390l6 0l-3-6zM348 390l6 0l-3-6zM351 384l6 0l-3 6zM357 384l6 0l-3 6zM501 384l6 0l-3 6zM504 390l6 0l-3-6zM342 390l6 0l-3 6zM351 396l6 0l-3-6zM354 390l6 0l-3 6zM357 396l6 0l-3-6zM360 390l6 0l-3 6zM501 396l6 0l-3-6zM351 396l6 0l-3 6zM501 396l6 0l-3 6zM336 402l6 0l-3 6zM348 402l6 0l-3 6zM360 402l6 0l-3 6zM354 414l6 0l-3-6zM339 420l6 0l-3-6zM342 414l6 0l-3 6zM345 420l6 0l-3-6zM354 414l6 0l-3 6zM360 414l6 0l-3 6zM483 420l6 0l-3-6zM327 420l6 0l-3 6zM336 426l6 0l-3-6zM339 420l6 0l-3 6zM342 426l6 0l-3-6zM348 426l6 0l-3-6zM360 426l6 0l-3-6zM336 426l6 0l-3 6zM348 426l6 0l-3 6zM327 432l6 0l-3 6zM348 438l6 0l-3-6zM384 438l6 0l-3-6zM330 438l6 0l-3 6zM336 438l6 0l-3 6zM360 438l6 0l-3 6zM285 444l6 0l-3 6zM333 444l6 0l-3 6zM342 450l6 0l-3-6zM324 450l6 0l-3 6zM339 456l6 0l-3-6zM345 456l6 0l-3-6zM327 456l6 0l-3 6zM330 462l6 0l-3-6zM339 456l6 0l-3 6zM336 474l6 0l-3-6zM342 474l6 0l-3-6zM345 468l6 0l-3 6zM351 468l6 0l-3 6zM339 480l6 0l-3-6zM342 474l6 0l-3 6zM354 474l6 0l-3 6zM387 480l6 0l-3-6zM399 480l6 0l-3-6zM324 486l6 0l-3-6zM345 480l6 0l-3 6zM366 486l6 0l-3-6zM405 492l6 0l-3-6zM330 498l6 0l-3-6zM333 492l6 0l-3 6zM345 492l6 0l-3 6zM354 498l6 0l-3-6zM345 504l6 0l-3-6zM357 504l6 0l-3-6zM360 498l6 0l-3 6zM336 510l6 0l-3-6zM345 504l6 0l-3 6zM366 510l6 0l-3-6zM351 516l6 0l-3 6zM336 522l6 0l-3 6zM342 522l6 0l-3 6zM348 522l6 0l-3 6zM354 522l6 0l-3 6zM357 528l6 0l-3-6zM315 528l6 0l-3 6zM339 528l6 0l-3 6zM345 528l6 0l-3 6zM354 534l6 0l-3-6zM348 534l6 0l-3 6zM357 540l6 0l-3-6zM360 546l6 0l-3-6zM330 546l6 0l-3 6zM348 546l6 0l-3 6zM366 546l6 0l-3 6zM336 558l6 0l-3-6zM345 552l6 0l-3 6zM336 558l6 0l-3 6zM348 558l6 0l-3 6zM315 564l6 0l-3 6zM327 564l6 0l-3 6zM336 570l6 0l-3-6zM315 576l6 0l-3-6z"/><path fill="#9200ff" d="M405 204l6 0l-3-6zM444 210l6 0l-3 6zM447 216l6 0l-3-6zM447 216l6 0l-3 6zM450 222l6 0l-3-6zM450 222l6 0l-3 6zM447 228l6 0l-3 6zM450 234l6 0l-3-6zM456 234l6 0l-3 6zM234 246l6 0l-3-6zM456 246l6 0l-3-6zM459 240l6 0l-3 6zM234 246l6 0l-3 6zM237 252l6 0l-3-6zM240 246l6 0l-3 6zM462 246l6 0l-3 6zM465 252l6 0l-3-6zM237 252l6 0l-3 6zM240 258l6 0l-3-6zM243 252l6 0l-3 6zM246 258l6 0l-3-6zM471 252l6 0l-3 6zM474 258l6 0l-3-6zM243 264l6 0l-3-6zM249 264l6 0l-3-6zM477 264l6 0l-3-6zM249 264l6 0l-3 6zM252 270l6 0l-3-6zM480 270l6 0l-3-6zM252 270l6 0l-3 6zM255 276l6 0l-3-6zM258 270l6 0l-3 6zM483 276l6 0l-3-6zM261 276l6 0l-3 6zM264 282l6 0l-3-6zM489 276l6 0l-3 6zM492 282l6 0l-3-6zM264 282l6 0l-3 6zM267 288l6 0l-3-6zM270 282l6 0l-3 6zM273 288l6 0l-3-6zM495 288l6 0l-3-6zM267 288l6 0l-3 6zM282 294l6 0l-3 6zM285 300l6 0l-3-6zM498 294l6 0l-3 6zM501 300l6 0l-3-6zM261 300l6 0l-3 6zM282 306l6 0l-3-6zM288 306l6 0l-3-6zM501 300l6 0l-3 6zM285 312l6 0l-3-6zM303 312l6 0l-3-6zM309 312l6 0l-3-6zM504 306l6 0l-3 6zM285 312l6 0l-3 6zM288 318l6 0l-3-6zM297 312l6 0l-3 6zM300 318l6 0l-3-6zM309 312l6 0l-3 6zM336 318l6 0l-3-6zM276 318l6 0l-3 6zM297 324l6 0l-3-6zM300 318l6 0l-3 6zM309 324l6 0l-3-6zM504 318l6 0l-3 6zM285 324l6 0l-3 6zM309 324l6 0l-3 6zM318 330l6 0l-3-6zM303 336l6 0l-3-6zM306 330l6 0l-3 6zM309 336l6 0l-3-6zM507 336l6 0l-3-6zM306 342l6 0l-3-6zM309 336l6 0l-3 6zM507 336l6 0l-3 6zM507 348l6 0l-3-6zM330 354l6 0l-3-6zM336 354l6 0l-3-6zM294 354l6 0l-3 6zM321 360l6 0l-3-6zM339 360l6 0l-3-6zM507 360l6 0l-3-6zM507 360l6 0l-3 6zM369 372l6 0l-3-6zM504 366l6 0l-3 6zM507 372l6 0l-3-6zM336 378l6 0l-3-6zM504 378l6 0l-3-6zM507 372l6 0l-3 6zM339 384l6 0l-3-6zM357 384l6 0l-3-6zM504 378l6 0l-3 6zM345 384l6 0l-3 6zM336 390l6 0l-3 6zM504 390l6 0l-3 6zM321 396l6 0l-3 6zM336 402l6 0l-3-6zM330 402l6 0l-3 6zM345 408l6 0l-3-6zM354 402l6 0l-3 6zM330 414l6 0l-3-6zM336 414l6 0l-3-6zM339 408l6 0l-3 6zM342 414l6 0l-3-6zM357 408l6 0l-3 6zM318 414l6 0l-3 6zM321 432l6 0l-3-6zM324 426l6 0l-3 6zM342 426l6 0l-3 6zM312 438l6 0l-3-6zM330 438l6 0l-3-6zM321 444l6 0l-3-6zM324 438l6 0l-3 6zM327 444l6 0l-3-6zM333 444l6 0l-3-6zM369 444l6 0l-3-6zM324 450l6 0l-3-6zM339 444l6 0l-3 6zM351 444l6 0l-3 6zM303 456l6 0l-3-6zM315 456l6 0l-3-6zM306 462l6 0l-3-6zM312 462l6 0l-3-6zM345 456l6 0l-3 6zM327 468l6 0l-3-6zM336 462l6 0l-3 6zM348 462l6 0l-3 6zM357 468l6 0l-3-6zM393 468l6 0l-3-6zM372 474l6 0l-3-6zM324 474l6 0l-3 6zM333 480l6 0l-3-6zM348 474l6 0l-3 6zM405 480l6 0l-3-6zM336 486l6 0l-3 6zM339 492l6 0l-3-6zM345 492l6 0l-3-6zM354 486l6 0l-3 6zM336 498l6 0l-3-6zM342 498l6 0l-3-6zM348 498l6 0l-3-6zM351 492l6 0l-3 6zM357 492l6 0l-3 6zM360 498l6 0l-3-6zM306 498l6 0l-3 6zM342 498l6 0l-3 6zM351 504l6 0l-3-6zM342 510l6 0l-3-6zM351 504l6 0l-3 6zM402 510l6 0l-3-6zM333 516l6 0l-3-6zM342 510l6 0l-3 6zM348 510l6 0l-3 6zM423 516l6 0l-3-6zM342 522l6 0l-3-6zM345 528l6 0l-3-6zM324 534l6 0l-3-6zM342 534l6 0l-3 6zM345 540l6 0l-3-6zM339 540l6 0l-3 6zM342 546l6 0l-3-6zM348 546l6 0l-3-6zM336 546l6 0l-3 6zM339 552l6 0l-3-6zM354 546l6 0l-3 6zM339 552l6 0l-3 6zM342 558l6 0l-3 6zM330 570l6 0l-3-6zM309 576l6 0l-3-6z"/><path fill="#a40efb" d="M450 210l6 0l-3 6zM453 216l6 0l-3-6zM453 216l6 0l-3 6zM456 222l6 0l-3-6zM453 228l6 0l-3-6zM456 222l6 0l-3 6zM282 234l6 0l-3-6zM453 228l6 0l-3 6zM456 234l6 0l-3-6zM459 240l6 0l-3-6zM462 246l6 0l-3-6zM225 252l6 0l-3-6zM228 246l6 0l-3 6zM231 252l6 0l-3-6zM468 246l6 0l-3 6zM222 258l6 0l-3-6zM225 252l6 0l-3 6zM228 258l6 0l-3-6zM231 252l6 0l-3 6zM234 258l6 0l-3-6zM228 258l6 0l-3 6zM234 258l6 0l-3 6zM237 264l6 0l-3-6zM240 258l6 0l-3 6zM480 258l6 0l-3 6zM243 264l6 0l-3 6zM246 270l6 0l-3-6zM483 264l6 0l-3 6zM486 270l6 0l-3-6zM246 270l6 0l-3 6zM486 270l6 0l-3 6zM489 276l6 0l-3-6zM255 276l6 0l-3 6zM258 282l6 0l-3-6zM258 282l6 0l-3 6zM261 288l6 0l-3-6zM498 282l6 0l-3 6zM258 294l6 0l-3-6zM264 294l6 0l-3-6zM270 294l6 0l-3-6zM501 288l6 0l-3 6zM270 294l6 0l-3 6zM276 294l6 0l-3 6zM279 300l6 0l-3-6zM276 306l6 0l-3-6zM285 300l6 0l-3 6zM504 306l6 0l-3-6zM288 306l6 0l-3 6zM273 312l6 0l-3 6zM504 318l6 0l-3-6zM507 312l6 0l-3 6zM288 318l6 0l-3 6zM291 324l6 0l-3-6zM303 324l6 0l-3-6zM507 324l6 0l-3-6zM291 324l6 0l-3 6zM303 324l6 0l-3 6zM312 330l6 0l-3-6zM507 324l6 0l-3 6zM510 330l6 0l-3 6zM294 342l6 0l-3-6zM303 336l6 0l-3 6zM510 342l6 0l-3-6zM309 348l6 0l-3-6zM312 342l6 0l-3 6zM510 342l6 0l-3 6zM303 348l6 0l-3 6zM342 354l6 0l-3-6zM507 348l6 0l-3 6zM324 354l6 0l-3 6zM330 354l6 0l-3 6zM333 360l6 0l-3-6zM510 354l6 0l-3 6zM306 366l6 0l-3-6zM336 366l6 0l-3-6zM354 366l6 0l-3-6zM510 366l6 0l-3-6zM300 366l6 0l-3 6zM324 366l6 0l-3 6zM336 366l6 0l-3 6zM510 366l6 0l-3 6zM330 378l6 0l-3-6zM333 372l6 0l-3 6zM336 378l6 0l-3 6zM351 384l6 0l-3-6zM507 384l6 0l-3-6zM330 390l6 0l-3-6zM354 390l6 0l-3-6zM486 390l6 0l-3-6zM327 396l6 0l-3-6zM345 396l6 0l-3-6zM348 390l6 0l-3 6zM342 402l6 0l-3-6zM315 408l6 0l-3-6zM324 402l6 0l-3 6zM318 414l6 0l-3-6zM327 420l6 0l-3-6zM330 414l6 0l-3 6zM333 420l6 0l-3-6zM336 414l6 0l-3 6zM348 414l6 0l-3 6zM330 426l6 0l-3-6zM294 426l6 0l-3 6zM297 432l6 0l-3-6zM318 426l6 0l-3 6zM333 432l6 0l-3-6zM321 432l6 0l-3 6zM333 432l6 0l-3 6zM312 438l6 0l-3 6zM339 444l6 0l-3-6zM483 444l6 0l-3-6zM309 444l6 0l-3 6zM312 450l6 0l-3-6zM336 450l6 0l-3-6zM294 450l6 0l-3 6zM306 450l6 0l-3 6zM315 456l6 0l-3 6zM324 462l6 0l-3-6zM333 456l6 0l-3 6zM315 468l6 0l-3-6zM342 462l6 0l-3 6zM345 468l6 0l-3-6zM315 468l6 0l-3 6zM327 468l6 0l-3 6zM333 468l6 0l-3 6zM339 468l6 0l-3 6zM321 480l6 0l-3-6zM330 474l6 0l-3 6zM336 474l6 0l-3 6zM345 480l6 0l-3-6zM303 480l6 0l-3 6zM318 486l6 0l-3-6zM327 480l6 0l-3 6zM330 486l6 0l-3-6zM333 480l6 0l-3 6zM339 480l6 0l-3 6zM342 486l6 0l-3-6zM351 480l6 0l-3 6zM315 492l6 0l-3-6zM342 486l6 0l-3 6zM348 486l6 0l-3 6zM324 498l6 0l-3-6zM330 498l6 0l-3 6zM333 504l6 0l-3-6zM336 498l6 0l-3 6zM321 504l6 0l-3 6zM339 504l6 0l-3 6zM348 510l6 0l-3-6zM327 516l6 0l-3-6zM336 510l6 0l-3 6zM339 516l6 0l-3-6zM351 516l6 0l-3-6zM333 516l6 0l-3 6zM333 528l6 0l-3-6zM318 534l6 0l-3-6zM384 534l6 0l-3-6zM327 540l6 0l-3-6zM333 540l6 0l-3-6zM336 534l6 0l-3 6zM339 540l6 0l-3-6zM315 540l6 0l-3 6zM345 540l6 0l-3 6zM303 552l6 0l-3-6zM312 558l6 0l-3-6zM321 552l6 0l-3 6zM324 558l6 0l-3-6zM327 552l6 0l-3 6zM333 552l6 0l-3 6zM318 570l6 0l-3-6zM324 570l6 0l-3-6zM303 576l6 0l-3-6zM312 570l6 0l-3 6zM318 570l6 0l-3 6zM321 576l6 0l-3-6zM324 570l6 0l-3 6zM330 570l6 0l-3 6z"/><path fill="#b61ce9" d="M459 228l6 0l-3 6zM462 234l6 0l-3-6zM462 234l6 0l-3 6zM465 240l6 0l-3 6zM468 246l6 0l-3-6zM471 252l6 0l-3-6zM474 246l6 0l-3 6zM219 252l6 0l-3 6zM477 252l6 0l-3 6zM480 258l6 0l-3-6zM216 258l6 0l-3 6zM219 264l6 0l-3-6zM222 258l6 0l-3 6zM225 264l6 0l-3-6zM231 264l6 0l-3-6zM483 264l6 0l-3-6zM492 258l6 0l-3 6zM219 264l6 0l-3 6zM222 270l6 0l-3-6zM225 264l6 0l-3 6zM231 264l6 0l-3 6zM234 270l6 0l-3-6zM237 264l6 0l-3 6zM240 270l6 0l-3-6zM249 276l6 0l-3-6zM492 270l6 0l-3 6zM249 276l6 0l-3 6zM252 282l6 0l-3-6zM495 276l6 0l-3 6zM498 282l6 0l-3-6zM249 288l6 0l-3-6zM255 288l6 0l-3-6zM501 288l6 0l-3-6zM255 288l6 0l-3 6zM261 288l6 0l-3 6zM504 294l6 0l-3-6zM258 294l6 0l-3 6zM264 294l6 0l-3 6zM267 300l6 0l-3-6zM273 300l6 0l-3-6zM504 294l6 0l-3 6zM507 300l6 0l-3-6zM252 306l6 0l-3-6zM267 300l6 0l-3 6zM270 306l6 0l-3-6zM273 300l6 0l-3 6zM507 300l6 0l-3 6zM264 306l6 0l-3 6zM276 306l6 0l-3 6zM279 312l6 0l-3-6zM282 306l6 0l-3 6zM507 312l6 0l-3-6zM264 318l6 0l-3-6zM279 312l6 0l-3 6zM282 318l6 0l-3-6zM294 318l6 0l-3-6zM510 318l6 0l-3-6zM285 324l6 0l-3-6zM294 318l6 0l-3 6zM510 318l6 0l-3 6zM273 324l6 0l-3 6zM276 330l6 0l-3-6zM282 330l6 0l-3-6zM288 330l6 0l-3-6zM297 324l6 0l-3 6zM510 330l6 0l-3-6zM282 330l6 0l-3 6zM291 336l6 0l-3-6zM300 330l6 0l-3 6zM513 336l6 0l-3-6zM291 336l6 0l-3 6zM300 342l6 0l-3-6zM315 336l6 0l-3 6zM282 342l6 0l-3 6zM288 342l6 0l-3 6zM294 342l6 0l-3 6zM300 342l6 0l-3 6zM306 342l6 0l-3 6zM513 348l6 0l-3-6zM297 348l6 0l-3 6zM312 354l6 0l-3-6zM360 354l6 0l-3-6zM510 354l6 0l-3-6zM513 348l6 0l-3 6zM303 360l6 0l-3-6zM306 354l6 0l-3 6zM309 360l6 0l-3-6zM318 354l6 0l-3 6zM369 360l6 0l-3-6zM513 360l6 0l-3-6zM312 366l6 0l-3-6zM318 366l6 0l-3-6zM321 360l6 0l-3 6zM327 360l6 0l-3 6zM333 360l6 0l-3 6zM318 366l6 0l-3 6zM327 372l6 0l-3-6zM345 372l6 0l-3-6zM318 378l6 0l-3-6zM321 372l6 0l-3 6zM330 378l6 0l-3 6zM345 384l6 0l-3-6zM372 390l6 0l-3-6zM309 396l6 0l-3-6zM324 390l6 0l-3 6zM333 396l6 0l-3-6zM327 396l6 0l-3 6zM339 396l6 0l-3 6zM333 408l6 0l-3-6zM306 414l6 0l-3 6zM324 414l6 0l-3 6zM300 426l6 0l-3-6zM312 426l6 0l-3-6zM318 426l6 0l-3-6zM312 426l6 0l-3 6zM315 432l6 0l-3-6zM306 438l6 0l-3-6zM303 444l6 0l-3-6zM309 444l6 0l-3-6zM315 444l6 0l-3-6zM363 444l6 0l-3-6zM297 444l6 0l-3 6zM300 450l6 0l-3-6zM306 450l6 0l-3-6zM315 444l6 0l-3 6zM318 450l6 0l-3-6zM321 444l6 0l-3 6zM327 444l6 0l-3 6zM300 450l6 0l-3 6zM312 450l6 0l-3 6zM321 456l6 0l-3-6zM327 456l6 0l-3-6zM282 462l6 0l-3-6zM303 456l6 0l-3 6zM336 462l6 0l-3-6zM282 462l6 0l-3 6zM300 462l6 0l-3 6zM321 468l6 0l-3-6zM324 462l6 0l-3 6zM330 462l6 0l-3 6zM309 468l6 0l-3 6zM306 474l6 0l-3 6zM312 474l6 0l-3 6zM327 480l6 0l-3-6zM309 480l6 0l-3 6zM315 480l6 0l-3 6zM312 486l6 0l-3 6zM327 492l6 0l-3-6zM333 492l6 0l-3-6zM327 492l6 0l-3 6zM318 498l6 0l-3 6zM324 498l6 0l-3 6zM363 504l6 0l-3-6zM354 510l6 0l-3 6zM318 522l6 0l-3-6zM321 516l6 0l-3 6zM318 522l6 0l-3 6zM327 528l6 0l-3 6zM336 534l6 0l-3-6zM342 534l6 0l-3-6zM303 540l6 0l-3 6zM327 540l6 0l-3 6zM327 552l6 0l-3-6zM333 552l6 0l-3-6zM369 552l6 0l-3-6zM300 558l6 0l-3-6zM315 552l6 0l-3 6zM330 558l6 0l-3-6zM300 558l6 0l-3 6zM309 564l6 0l-3-6zM318 558l6 0l-3 6zM324 558l6 0l-3 6zM327 564l6 0l-3-6zM330 558l6 0l-3 6zM333 564l6 0l-3-6zM303 564l6 0l-3 6zM309 564l6 0l-3 6zM300 570l6 0l-3 6zM306 570l6 0l-3 6z"/><path fill="#c82bd6" d="M459 216l6 0l-3 6zM462 222l6 0l-3-6zM459 228l6 0l-3-6zM462 222l6 0l-3 6zM465 240l6 0l-3-6zM471 240l6 0l-3 6zM477 252l6 0l-3-6zM213 264l6 0l-3-6zM486 258l6 0l-3 6zM210 270l6 0l-3-6zM213 264l6 0l-3 6zM216 270l6 0l-3-6zM228 270l6 0l-3-6zM489 264l6 0l-3 6zM492 270l6 0l-3-6zM210 270l6 0l-3 6zM213 276l6 0l-3-6zM216 270l6 0l-3 6zM222 270l6 0l-3 6zM231 276l6 0l-3-6zM234 270l6 0l-3 6zM237 276l6 0l-3-6zM240 270l6 0l-3 6zM243 276l6 0l-3-6zM495 276l6 0l-3-6zM498 270l6 0l-3 6zM501 276l6 0l-3-6zM246 282l6 0l-3-6zM504 282l6 0l-3-6zM252 282l6 0l-3 6zM507 288l6 0l-3-6zM252 294l6 0l-3-6zM252 294l6 0l-3 6zM261 300l6 0l-3-6zM258 306l6 0l-3-6zM264 306l6 0l-3-6zM267 312l6 0l-3-6zM270 306l6 0l-3 6zM510 306l6 0l-3 6zM513 312l6 0l-3-6zM261 312l6 0l-3 6zM270 318l6 0l-3 6zM282 318l6 0l-3 6zM513 324l6 0l-3-6zM324 330l6 0l-3-6zM513 324l6 0l-3 6zM285 336l6 0l-3-6zM294 330l6 0l-3 6zM501 336l6 0l-3-6zM282 342l6 0l-3-6zM297 336l6 0l-3 6zM513 336l6 0l-3 6zM273 348l6 0l-3-6zM288 354l6 0l-3-6zM291 348l6 0l-3 6zM315 348l6 0l-3 6zM297 360l6 0l-3-6zM294 366l6 0l-3-6zM303 360l6 0l-3 6zM315 360l6 0l-3 6zM324 366l6 0l-3-6zM309 372l6 0l-3-6zM312 366l6 0l-3 6zM315 372l6 0l-3 6zM303 384l6 0l-3-6zM321 384l6 0l-3-6zM327 384l6 0l-3-6zM297 384l6 0l-3 6zM309 384l6 0l-3 6zM324 390l6 0l-3-6zM327 384l6 0l-3 6zM333 384l6 0l-3 6zM339 384l6 0l-3 6zM297 396l6 0l-3 6zM324 402l6 0l-3-6zM330 402l6 0l-3-6zM333 396l6 0l-3 6zM360 402l6 0l-3-6zM297 408l6 0l-3 6zM321 408l6 0l-3 6zM309 420l6 0l-3-6zM315 420l6 0l-3 6zM324 426l6 0l-3-6zM309 432l6 0l-3-6zM279 432l6 0l-3 6zM300 438l6 0l-3-6zM303 432l6 0l-3 6zM309 432l6 0l-3 6zM315 432l6 0l-3 6zM372 438l6 0l-3-6zM294 438l6 0l-3 6zM300 438l6 0l-3 6zM306 438l6 0l-3 6zM273 444l6 0l-3 6zM294 450l6 0l-3-6zM297 456l6 0l-3-6zM318 450l6 0l-3 6zM351 456l6 0l-3-6zM294 462l6 0l-3-6zM297 456l6 0l-3 6zM300 462l6 0l-3-6zM288 462l6 0l-3 6zM294 462l6 0l-3 6zM312 462l6 0l-3 6zM318 462l6 0l-3 6zM339 468l6 0l-3-6zM351 468l6 0l-3-6zM303 468l6 0l-3 6zM321 468l6 0l-3 6zM324 474l6 0l-3-6zM312 486l6 0l-3-6zM300 486l6 0l-3 6zM324 486l6 0l-3 6zM306 498l6 0l-3-6zM312 498l6 0l-3-6zM321 492l6 0l-3 6zM339 492l6 0l-3 6zM309 504l6 0l-3-6zM318 510l6 0l-3-6zM327 504l6 0l-3 6zM312 510l6 0l-3 6zM318 510l6 0l-3 6zM330 510l6 0l-3 6zM315 516l6 0l-3 6zM339 516l6 0l-3 6zM312 522l6 0l-3 6zM327 528l6 0l-3-6zM330 522l6 0l-3 6zM351 528l6 0l-3-6zM300 534l6 0l-3-6zM309 528l6 0l-3 6zM333 528l6 0l-3 6zM348 534l6 0l-3-6zM303 540l6 0l-3-6zM318 546l6 0l-3-6zM330 546l6 0l-3-6zM291 552l6 0l-3-6zM297 552l6 0l-3-6zM312 546l6 0l-3 6zM318 546l6 0l-3 6zM324 546l6 0l-3 6zM342 546l6 0l-3 6zM297 552l6 0l-3 6zM303 552l6 0l-3 6zM309 552l6 0l-3 6zM318 558l6 0l-3-6zM303 564l6 0l-3-6zM315 564l6 0l-3-6zM321 564l6 0l-3-6zM294 570l6 0l-3-6zM297 564l6 0l-3 6zM321 564l6 0l-3 6z"/><path fill="#db39c3" d="M465 228l6 0l-3-6zM465 228l6 0l-3 6zM468 234l6 0l-3 6zM471 240l6 0l-3-6zM474 246l6 0l-3-6zM480 246l6 0l-3 6zM483 252l6 0l-3-6zM483 252l6 0l-3 6zM486 258l6 0l-3-6zM489 264l6 0l-3-6zM495 264l6 0l-3-6zM495 264l6 0l-3 6zM498 270l6 0l-3-6zM204 270l6 0l-3 6zM207 276l6 0l-3-6zM219 276l6 0l-3-6zM225 276l6 0l-3-6zM228 270l6 0l-3 6zM207 276l6 0l-3 6zM210 282l6 0l-3-6zM213 276l6 0l-3 6zM216 282l6 0l-3-6zM219 276l6 0l-3 6zM225 276l6 0l-3 6zM228 282l6 0l-3-6zM231 276l6 0l-3 6zM234 282l6 0l-3-6zM237 276l6 0l-3 6zM240 282l6 0l-3-6zM243 276l6 0l-3 6zM501 276l6 0l-3 6zM240 282l6 0l-3 6zM246 282l6 0l-3 6zM504 282l6 0l-3 6zM246 294l6 0l-3-6zM249 288l6 0l-3 6zM507 288l6 0l-3 6zM510 294l6 0l-3-6zM249 300l6 0l-3-6zM255 300l6 0l-3-6zM510 294l6 0l-3 6zM513 300l6 0l-3-6zM249 300l6 0l-3 6zM510 306l6 0l-3-6zM513 300l6 0l-3 6zM273 312l6 0l-3-6zM258 318l6 0l-3-6zM267 312l6 0l-3 6zM270 318l6 0l-3-6zM513 312l6 0l-3 6zM252 318l6 0l-3 6zM255 324l6 0l-3 6zM267 324l6 0l-3 6zM270 330l6 0l-3-6zM279 324l6 0l-3 6zM516 330l6 0l-3-6zM255 336l6 0l-3-6zM264 330l6 0l-3 6zM288 330l6 0l-3 6zM237 336l6 0l-3 6zM264 342l6 0l-3-6zM285 336l6 0l-3 6zM288 342l6 0l-3-6zM516 342l6 0l-3-6zM276 342l6 0l-3 6zM279 348l6 0l-3-6zM297 348l6 0l-3-6zM303 348l6 0l-3-6zM261 348l6 0l-3 6zM294 354l6 0l-3-6zM300 354l6 0l-3-6zM318 354l6 0l-3-6zM279 360l6 0l-3-6zM291 360l6 0l-3-6zM300 354l6 0l-3 6zM297 360l6 0l-3 6zM282 366l6 0l-3 6zM315 372l6 0l-3-6zM321 372l6 0l-3-6zM297 372l6 0l-3 6zM303 372l6 0l-3 6zM309 372l6 0l-3 6zM312 378l6 0l-3-6zM318 378l6 0l-3 6zM303 384l6 0l-3 6zM312 390l6 0l-3-6zM315 384l6 0l-3 6zM318 390l6 0l-3-6zM321 384l6 0l-3 6zM294 390l6 0l-3 6zM330 390l6 0l-3 6zM339 396l6 0l-3-6zM300 402l6 0l-3-6zM306 402l6 0l-3-6zM309 396l6 0l-3 6zM300 402l6 0l-3 6zM306 402l6 0l-3 6zM318 402l6 0l-3 6zM339 408l6 0l-3-6zM294 414l6 0l-3-6zM300 414l6 0l-3-6zM309 408l6 0l-3 6zM327 408l6 0l-3 6zM294 414l6 0l-3 6zM312 414l6 0l-3 6zM315 420l6 0l-3-6zM321 420l6 0l-3-6zM288 426l6 0l-3-6zM306 426l6 0l-3-6zM303 432l6 0l-3-6zM363 432l6 0l-3-6zM291 432l6 0l-3 6zM270 438l6 0l-3 6zM285 444l6 0l-3-6zM297 444l6 0l-3-6zM345 444l6 0l-3-6zM291 444l6 0l-3 6zM303 444l6 0l-3 6zM282 450l6 0l-3 6zM291 456l6 0l-3-6zM291 456l6 0l-3 6zM321 456l6 0l-3 6zM285 468l6 0l-3-6zM291 468l6 0l-3-6zM303 468l6 0l-3-6zM306 462l6 0l-3 6zM309 468l6 0l-3-6zM363 468l6 0l-3-6zM279 468l6 0l-3 6zM285 468l6 0l-3 6zM291 468l6 0l-3 6zM318 474l6 0l-3-6zM297 480l6 0l-3-6zM315 480l6 0l-3-6zM318 474l6 0l-3 6zM294 486l6 0l-3-6zM306 486l6 0l-3-6zM321 480l6 0l-3 6zM318 486l6 0l-3 6zM330 486l6 0l-3 6zM303 492l6 0l-3 6zM315 492l6 0l-3 6zM312 498l6 0l-3 6zM321 504l6 0l-3-6zM303 504l6 0l-3 6zM312 510l6 0l-3-6zM315 504l6 0l-3 6zM324 510l6 0l-3-6zM309 516l6 0l-3-6zM324 510l6 0l-3 6zM300 522l6 0l-3-6zM303 516l6 0l-3 6zM327 516l6 0l-3 6zM330 522l6 0l-3-6zM306 522l6 0l-3 6zM294 534l6 0l-3-6zM321 528l6 0l-3 6zM288 534l6 0l-3 6zM309 540l6 0l-3-6zM312 534l6 0l-3 6zM324 534l6 0l-3 6zM273 540l6 0l-3 6zM282 546l6 0l-3-6zM309 540l6 0l-3 6zM321 540l6 0l-3 6zM324 546l6 0l-3-6zM276 546l6 0l-3 6zM315 552l6 0l-3-6zM291 564l6 0l-3-6zM339 564l6 0l-3-6zM300 570l6 0l-3-6zM306 570l6 0l-3-6zM312 570l6 0l-3-6z"/><path fill="#ed47b1" d="M468 222l6 0l-3 6zM471 228l6 0l-3-6zM468 234l6 0l-3-6zM471 228l6 0l-3 6zM477 240l6 0l-3-6zM477 240l6 0l-3 6zM480 246l6 0l-3-6zM486 246l6 0l-3 6zM489 252l6 0l-3-6zM489 252l6 0l-3 6zM492 258l6 0l-3-6zM501 264l6 0l-3 6zM504 270l6 0l-3-6zM504 270l6 0l-3 6zM507 276l6 0l-3-6zM201 276l6 0l-3 6zM204 282l6 0l-3-6zM222 282l6 0l-3-6zM507 276l6 0l-3 6zM204 282l6 0l-3 6zM210 282l6 0l-3 6zM216 282l6 0l-3 6zM222 282l6 0l-3 6zM228 282l6 0l-3 6zM234 282l6 0l-3 6zM237 288l6 0l-3-6zM243 288l6 0l-3-6zM510 282l6 0l-3 6zM237 288l6 0l-3 6zM240 294l6 0l-3-6zM513 288l6 0l-3 6zM243 300l6 0l-3-6zM246 294l6 0l-3 6zM240 306l6 0l-3-6zM243 300l6 0l-3 6zM255 300l6 0l-3 6zM516 306l6 0l-3-6zM249 312l6 0l-3-6zM255 312l6 0l-3-6zM258 306l6 0l-3 6zM261 312l6 0l-3-6zM516 306l6 0l-3 6zM255 312l6 0l-3 6zM516 318l6 0l-3-6zM246 318l6 0l-3 6zM258 318l6 0l-3 6zM261 324l6 0l-3-6zM264 318l6 0l-3 6zM273 324l6 0l-3-6zM516 318l6 0l-3 6zM213 324l6 0l-3 6zM258 330l6 0l-3-6zM267 336l6 0l-3-6zM270 330l6 0l-3 6zM279 336l6 0l-3-6zM516 330l6 0l-3 6zM267 336l6 0l-3 6zM273 336l6 0l-3 6zM276 342l6 0l-3-6zM342 342l6 0l-3-6zM252 342l6 0l-3 6zM258 342l6 0l-3 6zM264 342l6 0l-3 6zM267 348l6 0l-3-6zM285 348l6 0l-3-6zM267 348l6 0l-3 6zM270 354l6 0l-3-6zM273 348l6 0l-3 6zM270 354l6 0l-3 6zM276 354l6 0l-3 6zM285 360l6 0l-3-6zM288 354l6 0l-3 6zM270 366l6 0l-3-6zM273 360l6 0l-3 6zM291 360l6 0l-3 6zM300 366l6 0l-3-6zM309 360l6 0l-3 6zM291 372l6 0l-3-6zM297 372l6 0l-3-6zM306 366l6 0l-3 6zM273 372l6 0l-3 6zM294 378l6 0l-3-6zM300 378l6 0l-3-6zM327 372l6 0l-3 6zM267 384l6 0l-3-6zM279 384l6 0l-3-6zM300 378l6 0l-3 6zM306 378l6 0l-3 6zM309 384l6 0l-3-6zM315 384l6 0l-3-6zM306 390l6 0l-3-6zM285 396l6 0l-3-6zM300 390l6 0l-3 6zM312 390l6 0l-3 6zM318 390l6 0l-3 6zM321 396l6 0l-3-6zM285 396l6 0l-3 6zM303 396l6 0l-3 6zM294 402l6 0l-3 6zM303 408l6 0l-3-6zM309 408l6 0l-3-6zM321 408l6 0l-3-6zM351 408l6 0l-3-6zM273 408l6 0l-3 6zM315 408l6 0l-3 6zM276 414l6 0l-3 6zM288 414l6 0l-3 6zM291 420l6 0l-3-6zM297 420l6 0l-3-6zM300 414l6 0l-3 6zM270 426l6 0l-3-6zM279 420l6 0l-3 6zM285 420l6 0l-3 6zM291 420l6 0l-3 6zM303 420l6 0l-3 6zM321 420l6 0l-3 6zM276 426l6 0l-3 6zM288 426l6 0l-3 6zM291 432l6 0l-3-6zM297 432l6 0l-3 6zM282 450l6 0l-3-6zM273 456l6 0l-3-6zM276 450l6 0l-3 6zM288 450l6 0l-3 6zM309 456l6 0l-3-6zM273 456l6 0l-3 6zM276 462l6 0l-3-6zM279 468l6 0l-3-6zM288 474l6 0l-3-6zM297 468l6 0l-3 6zM276 474l6 0l-3 6zM303 480l6 0l-3-6zM309 480l6 0l-3-6zM291 480l6 0l-3 6zM294 486l6 0l-3 6zM297 492l6 0l-3-6zM306 486l6 0l-3 6zM321 492l6 0l-3-6zM285 492l6 0l-3 6zM318 498l6 0l-3-6zM315 504l6 0l-3-6zM327 504l6 0l-3-6zM339 504l6 0l-3-6zM300 510l6 0l-3-6zM330 510l6 0l-3-6zM333 504l6 0l-3 6zM276 510l6 0l-3 6zM300 510l6 0l-3 6zM303 516l6 0l-3-6zM315 516l6 0l-3-6zM309 516l6 0l-3 6zM312 522l6 0l-3-6zM336 522l6 0l-3-6zM255 528l6 0l-3-6zM294 522l6 0l-3 6zM309 528l6 0l-3-6zM315 528l6 0l-3-6zM321 528l6 0l-3-6zM324 522l6 0l-3 6zM312 534l6 0l-3-6zM297 540l6 0l-3-6zM315 540l6 0l-3-6zM318 534l6 0l-3 6zM297 540l6 0l-3 6zM306 546l6 0l-3-6zM270 546l6 0l-3 6zM282 546l6 0l-3 6zM288 546l6 0l-3 6zM294 546l6 0l-3 6zM306 546l6 0l-3 6zM309 552l6 0l-3-6zM321 552l6 0l-3-6zM273 552l6 0l-3 6zM288 558l6 0l-3-6zM342 558l6 0l-3-6zM288 558l6 0l-3 6z"/><path fill="#ff559e" d="M474 234l6 0l-3-6zM477 228l6 0l-3 6zM474 234l6 0l-3 6zM483 240l6 0l-3-6zM483 240l6 0l-3 6zM486 246l6 0l-3-6zM495 252l6 0l-3-6zM495 252l6 0l-3 6zM498 258l6 0l-3-6zM498 258l6 0l-3 6zM501 264l6 0l-3-6zM198 282l6 0l-3-6zM510 282l6 0l-3-6zM198 282l6 0l-3 6zM201 288l6 0l-3-6zM207 288l6 0l-3-6zM213 288l6 0l-3-6zM219 288l6 0l-3-6zM225 288l6 0l-3-6zM231 288l6 0l-3-6zM216 294l6 0l-3-6zM219 288l6 0l-3 6zM225 288l6 0l-3 6zM228 294l6 0l-3-6zM231 288l6 0l-3 6zM243 288l6 0l-3 6zM228 294l6 0l-3 6zM231 300l6 0l-3-6zM234 294l6 0l-3 6zM237 300l6 0l-3-6zM240 294l6 0l-3 6zM246 306l6 0l-3-6zM237 312l6 0l-3-6zM240 306l6 0l-3 6zM243 312l6 0l-3-6zM246 306l6 0l-3 6zM252 306l6 0l-3 6zM246 318l6 0l-3-6zM249 312l6 0l-3 6zM252 318l6 0l-3-6zM276 318l6 0l-3-6zM237 324l6 0l-3-6zM249 324l6 0l-3-6zM267 324l6 0l-3-6zM246 330l6 0l-3-6zM249 324l6 0l-3 6zM258 330l6 0l-3 6zM261 336l6 0l-3-6zM273 336l6 0l-3-6zM297 336l6 0l-3-6zM279 336l6 0l-3 6zM255 348l6 0l-3-6zM261 348l6 0l-3-6zM264 354l6 0l-3-6zM282 354l6 0l-3-6zM285 348l6 0l-3 6zM255 360l6 0l-3-6zM267 360l6 0l-3-6zM285 372l6 0l-3-6zM288 366l6 0l-3 6zM294 366l6 0l-3 6zM303 372l6 0l-3-6zM267 372l6 0l-3 6zM282 378l6 0l-3-6zM288 378l6 0l-3-6zM282 378l6 0l-3 6zM285 384l6 0l-3-6zM288 378l6 0l-3 6zM294 378l6 0l-3 6zM312 378l6 0l-3 6zM288 390l6 0l-3-6zM294 390l6 0l-3-6zM306 390l6 0l-3 6zM315 396l6 0l-3-6zM279 396l6 0l-3 6zM288 402l6 0l-3-6zM312 402l6 0l-3-6zM315 396l6 0l-3 6zM318 402l6 0l-3-6zM258 402l6 0l-3 6zM276 402l6 0l-3 6zM291 408l6 0l-3-6zM297 408l6 0l-3-6zM270 414l6 0l-3-6zM282 414l6 0l-3-6zM285 408l6 0l-3 6zM291 408l6 0l-3 6zM306 414l6 0l-3-6zM312 414l6 0l-3-6zM303 420l6 0l-3-6zM309 420l6 0l-3 6zM285 432l6 0l-3-6zM306 426l6 0l-3 6zM276 438l6 0l-3-6zM288 438l6 0l-3-6zM276 438l6 0l-3 6zM279 444l6 0l-3-6zM282 438l6 0l-3 6zM288 438l6 0l-3 6zM291 444l6 0l-3-6zM288 450l6 0l-3-6zM279 456l6 0l-3-6zM267 456l6 0l-3 6zM279 456l6 0l-3 6zM288 462l6 0l-3-6zM267 468l6 0l-3 6zM282 474l6 0l-3-6zM300 474l6 0l-3-6zM282 474l6 0l-3 6zM285 480l6 0l-3-6zM294 474l6 0l-3 6zM273 480l6 0l-3 6zM276 486l6 0l-3-6zM297 480l6 0l-3 6zM246 486l6 0l-3 6zM303 492l6 0l-3-6zM309 492l6 0l-3-6zM309 492l6 0l-3 6zM300 498l6 0l-3 6zM282 510l6 0l-3-6zM291 504l6 0l-3 6zM297 504l6 0l-3 6zM306 510l6 0l-3-6zM309 504l6 0l-3 6zM294 510l6 0l-3 6zM297 516l6 0l-3-6zM306 522l6 0l-3-6zM282 522l6 0l-3 6zM276 534l6 0l-3-6zM297 528l6 0l-3 6zM306 534l6 0l-3-6zM279 540l6 0l-3-6zM291 540l6 0l-3-6zM306 534l6 0l-3 6zM264 546l6 0l-3-6zM312 546l6 0l-3-6zM300 546l6 0l-3 6zM276 558l6 0l-3-6zM291 552l6 0l-3 6zM294 558l6 0l-3-6zM273 564l6 0l-3-6zM276 558l6 0l-3 6zM294 558l6 0l-3 6zM306 558l6 0l-3 6zM270 570l6 0l-3-6zM282 570l6 0l-3-6zM285 564l6 0l-3 6zM291 564l6 0l-3 6zM279 576l6 0l-3-6zM291 576l6 0l-3-6zM294 570l6 0l-3 6z"/><path fill="#ff6391" d="M477 228l6 0l-3-6zM480 234l6 0l-3-6zM480 234l6 0l-3 6zM492 246l6 0l-3 6zM195 288l6 0l-3-6zM201 288l6 0l-3 6zM207 288l6 0l-3 6zM210 294l6 0l-3-6zM213 288l6 0l-3 6zM222 294l6 0l-3-6zM234 294l6 0l-3-6zM216 294l6 0l-3 6zM234 306l6 0l-3-6zM237 300l6 0l-3 6zM228 306l6 0l-3 6zM222 318l6 0l-3-6zM225 312l6 0l-3 6zM231 312l6 0l-3 6zM243 312l6 0l-3 6zM240 318l6 0l-3 6zM255 324l6 0l-3-6zM237 324l6 0l-3 6zM261 324l6 0l-3 6zM240 330l6 0l-3 6zM246 330l6 0l-3 6zM249 336l6 0l-3-6zM252 330l6 0l-3 6zM252 342l6 0l-3-6zM255 336l6 0l-3 6zM258 342l6 0l-3-6zM261 336l6 0l-3 6zM324 342l6 0l-3-6zM225 348l6 0l-3-6zM249 348l6 0l-3-6zM291 348l6 0l-3-6zM243 348l6 0l-3 6zM249 348l6 0l-3 6zM252 354l6 0l-3-6zM306 354l6 0l-3-6zM252 354l6 0l-3 6zM264 354l6 0l-3 6zM273 360l6 0l-3-6zM315 360l6 0l-3-6zM261 360l6 0l-3 6zM267 360l6 0l-3 6zM279 360l6 0l-3 6zM282 366l6 0l-3-6zM285 360l6 0l-3 6zM264 366l6 0l-3 6zM261 372l6 0l-3 6zM276 378l6 0l-3-6zM279 372l6 0l-3 6zM285 372l6 0l-3 6zM249 384l6 0l-3-6zM273 384l6 0l-3-6zM297 384l6 0l-3-6zM255 384l6 0l-3 6zM267 384l6 0l-3 6zM282 390l6 0l-3-6zM285 384l6 0l-3 6zM261 396l6 0l-3-6zM279 396l6 0l-3-6zM288 390l6 0l-3 6zM255 396l6 0l-3 6zM261 396l6 0l-3 6zM270 402l6 0l-3-6zM294 402l6 0l-3-6zM252 402l6 0l-3 6zM270 402l6 0l-3 6zM282 402l6 0l-3 6zM285 408l6 0l-3-6zM288 402l6 0l-3 6zM261 408l6 0l-3 6zM267 408l6 0l-3 6zM279 408l6 0l-3 6zM288 414l6 0l-3-6zM303 408l6 0l-3 6zM324 414l6 0l-3-6zM282 414l6 0l-3 6zM264 426l6 0l-3-6zM273 420l6 0l-3 6zM276 426l6 0l-3-6zM294 426l6 0l-3-6zM270 426l6 0l-3 6zM300 426l6 0l-3 6zM267 432l6 0l-3 6zM270 438l6 0l-3-6zM282 438l6 0l-3-6zM285 432l6 0l-3 6zM261 444l6 0l-3-6zM267 444l6 0l-3-6zM264 450l6 0l-3-6zM270 450l6 0l-3-6zM255 456l6 0l-3-6zM264 450l6 0l-3 6zM270 450l6 0l-3 6zM285 456l6 0l-3-6zM285 456l6 0l-3 6zM258 462l6 0l-3 6zM258 474l6 0l-3-6zM294 474l6 0l-3-6zM279 480l6 0l-3-6zM300 474l6 0l-3 6zM237 480l6 0l-3 6zM279 480l6 0l-3 6zM282 486l6 0l-3-6zM288 486l6 0l-3-6zM276 486l6 0l-3 6zM291 492l6 0l-3-6zM249 492l6 0l-3 6zM255 492l6 0l-3 6zM267 492l6 0l-3 6zM291 492l6 0l-3 6zM294 498l6 0l-3-6zM255 504l6 0l-3-6zM276 498l6 0l-3 6zM288 498l6 0l-3 6zM294 498l6 0l-3 6zM303 504l6 0l-3-6zM273 504l6 0l-3 6zM276 510l6 0l-3-6zM285 516l6 0l-3-6zM306 510l6 0l-3 6zM321 516l6 0l-3-6zM264 522l6 0l-3-6zM297 516l6 0l-3 6zM246 522l6 0l-3 6zM258 522l6 0l-3 6zM273 528l6 0l-3-6zM276 522l6 0l-3 6zM279 528l6 0l-3-6zM285 528l6 0l-3-6zM288 522l6 0l-3 6zM297 528l6 0l-3-6zM291 528l6 0l-3 6zM303 528l6 0l-3 6zM258 534l6 0l-3 6zM270 534l6 0l-3 6zM273 540l6 0l-3-6zM282 534l6 0l-3 6zM294 534l6 0l-3 6zM300 534l6 0l-3 6zM285 540l6 0l-3 6zM288 546l6 0l-3-6zM294 546l6 0l-3-6zM300 546l6 0l-3-6zM258 546l6 0l-3 6zM267 552l6 0l-3-6zM279 552l6 0l-3-6zM285 552l6 0l-3-6zM279 552l6 0l-3 6zM282 558l6 0l-3-6zM285 552l6 0l-3 6zM249 564l6 0l-3-6zM270 558l6 0l-3 6zM297 564l6 0l-3-6zM312 558l6 0l-3 6zM276 570l6 0l-3-6zM276 570l6 0l-3 6zM285 576l6 0l-3-6zM288 570l6 0l-3 6zM297 576l6 0l-3-6z"/><path fill="#ff7184" d="M195 288l6 0l-3 6zM198 294l6 0l-3-6zM204 294l6 0l-3-6zM189 300l6 0l-3-6zM192 294l6 0l-3 6zM198 294l6 0l-3 6zM204 294l6 0l-3 6zM210 294l6 0l-3 6zM213 300l6 0l-3-6zM219 300l6 0l-3-6zM222 294l6 0l-3 6zM225 300l6 0l-3-6zM189 300l6 0l-3 6zM222 306l6 0l-3-6zM225 300l6 0l-3 6zM231 300l6 0l-3 6zM216 306l6 0l-3 6zM234 306l6 0l-3 6zM222 318l6 0l-3 6zM225 324l6 0l-3-6zM228 318l6 0l-3 6zM234 318l6 0l-3 6zM243 324l6 0l-3-6zM279 324l6 0l-3-6zM195 324l6 0l-3 6zM216 330l6 0l-3-6zM225 324l6 0l-3 6zM231 324l6 0l-3 6zM240 330l6 0l-3-6zM243 324l6 0l-3 6zM252 330l6 0l-3-6zM234 330l6 0l-3 6zM237 336l6 0l-3-6zM243 336l6 0l-3-6zM210 342l6 0l-3-6zM234 342l6 0l-3-6zM240 342l6 0l-3-6zM243 336l6 0l-3 6zM249 336l6 0l-3 6zM198 342l6 0l-3 6zM219 348l6 0l-3-6zM243 348l6 0l-3-6zM246 342l6 0l-3 6zM270 342l6 0l-3 6zM210 354l6 0l-3-6zM216 354l6 0l-3-6zM240 354l6 0l-3-6zM258 354l6 0l-3-6zM279 348l6 0l-3 6zM240 354l6 0l-3 6zM258 354l6 0l-3 6zM282 354l6 0l-3 6zM213 360l6 0l-3 6zM255 360l6 0l-3 6zM258 366l6 0l-3-6zM264 366l6 0l-3-6zM276 366l6 0l-3-6zM222 366l6 0l-3 6zM243 372l6 0l-3-6zM246 366l6 0l-3 6zM255 372l6 0l-3-6zM258 366l6 0l-3 6zM261 372l6 0l-3-6zM270 366l6 0l-3 6zM273 372l6 0l-3-6zM276 366l6 0l-3 6zM237 372l6 0l-3 6zM255 372l6 0l-3 6zM264 378l6 0l-3-6zM270 378l6 0l-3-6zM291 372l6 0l-3 6zM306 378l6 0l-3-6zM252 378l6 0l-3 6zM255 384l6 0l-3-6zM276 378l6 0l-3 6zM291 384l6 0l-3-6zM261 384l6 0l-3 6zM264 390l6 0l-3-6zM273 384l6 0l-3 6zM276 390l6 0l-3-6zM270 390l6 0l-3 6zM276 390l6 0l-3 6zM282 390l6 0l-3 6zM291 396l6 0l-3-6zM297 396l6 0l-3-6zM276 402l6 0l-3-6zM282 402l6 0l-3-6zM279 408l6 0l-3-6zM312 402l6 0l-3 6zM276 414l6 0l-3-6zM264 414l6 0l-3 6zM273 420l6 0l-3-6zM279 420l6 0l-3-6zM243 420l6 0l-3 6zM267 420l6 0l-3 6zM297 420l6 0l-3 6zM258 426l6 0l-3 6zM273 432l6 0l-3-6zM279 432l6 0l-3-6zM282 426l6 0l-3 6zM258 438l6 0l-3-6zM264 438l6 0l-3-6zM273 432l6 0l-3 6zM249 444l6 0l-3-6zM273 444l6 0l-3-6zM255 444l6 0l-3 6zM267 444l6 0l-3 6zM279 444l6 0l-3 6zM246 450l6 0l-3 6zM258 450l6 0l-3 6zM267 456l6 0l-3-6zM261 456l6 0l-3 6zM264 462l6 0l-3-6zM246 462l6 0l-3 6zM273 468l6 0l-3-6zM276 462l6 0l-3 6zM243 468l6 0l-3 6zM270 474l6 0l-3-6zM273 468l6 0l-3 6zM276 474l6 0l-3-6zM312 474l6 0l-3-6zM240 474l6 0l-3 6zM288 474l6 0l-3 6zM291 480l6 0l-3-6zM261 480l6 0l-3 6zM300 486l6 0l-3-6zM264 486l6 0l-3 6zM267 492l6 0l-3-6zM273 492l6 0l-3-6zM279 492l6 0l-3-6zM282 486l6 0l-3 6zM276 498l6 0l-3-6zM282 498l6 0l-3-6zM288 498l6 0l-3-6zM297 492l6 0l-3 6zM219 504l6 0l-3-6zM267 504l6 0l-3-6zM282 498l6 0l-3 6zM285 504l6 0l-3-6zM297 504l6 0l-3-6zM249 504l6 0l-3 6zM258 510l6 0l-3-6zM264 510l6 0l-3-6zM279 504l6 0l-3 6zM285 504l6 0l-3 6zM294 510l6 0l-3-6zM267 516l6 0l-3-6zM270 510l6 0l-3 6zM273 516l6 0l-3-6zM279 516l6 0l-3-6zM291 516l6 0l-3-6zM345 516l6 0l-3-6zM243 516l6 0l-3 6zM288 522l6 0l-3-6zM291 516l6 0l-3 6zM252 522l6 0l-3 6zM300 522l6 0l-3 6zM339 528l6 0l-3-6zM231 528l6 0l-3 6zM255 528l6 0l-3 6zM267 528l6 0l-3 6zM273 528l6 0l-3 6zM282 534l6 0l-3-6zM285 528l6 0l-3 6zM288 534l6 0l-3-6zM243 540l6 0l-3-6zM252 534l6 0l-3 6zM264 534l6 0l-3 6zM321 540l6 0l-3-6zM243 540l6 0l-3 6zM249 540l6 0l-3 6zM267 540l6 0l-3 6zM270 546l6 0l-3-6zM279 540l6 0l-3 6zM246 546l6 0l-3 6zM261 552l6 0l-3-6zM240 558l6 0l-3-6zM264 558l6 0l-3-6zM306 558l6 0l-3-6zM252 558l6 0l-3 6zM261 564l6 0l-3-6zM261 564l6 0l-3 6zM273 564l6 0l-3 6zM261 576l6 0l-3-6zM264 570l6 0l-3 6zM282 570l6 0l-3 6z"/><path fill="#ff8077" d="M192 294l6 0l-3-6zM201 300l6 0l-3-6zM207 300l6 0l-3-6zM192 306l6 0l-3-6zM210 306l6 0l-3-6zM213 300l6 0l-3 6zM216 306l6 0l-3-6zM228 306l6 0l-3-6zM195 312l6 0l-3-6zM210 306l6 0l-3 6zM222 306l6 0l-3 6zM225 312l6 0l-3-6zM231 312l6 0l-3-6zM189 312l6 0l-3 6zM219 312l6 0l-3 6zM228 318l6 0l-3-6zM237 312l6 0l-3 6zM240 318l6 0l-3-6zM192 318l6 0l-3 6zM198 318l6 0l-3 6zM207 324l6 0l-3-6zM231 324l6 0l-3-6zM219 324l6 0l-3 6zM234 330l6 0l-3-6zM264 330l6 0l-3-6zM195 336l6 0l-3-6zM219 336l6 0l-3-6zM192 342l6 0l-3-6zM204 342l6 0l-3-6zM231 336l6 0l-3 6zM174 342l6 0l-3 6zM195 348l6 0l-3-6zM213 348l6 0l-3-6zM231 348l6 0l-3-6zM237 348l6 0l-3-6zM240 342l6 0l-3 6zM180 354l6 0l-3-6zM234 354l6 0l-3-6zM237 348l6 0l-3 6zM255 348l6 0l-3 6zM210 354l6 0l-3 6zM219 360l6 0l-3-6zM222 354l6 0l-3 6zM225 360l6 0l-3-6zM228 354l6 0l-3 6zM249 360l6 0l-3-6zM234 366l6 0l-3-6zM237 360l6 0l-3 6zM240 366l6 0l-3-6zM252 366l6 0l-3-6zM288 366l6 0l-3-6zM234 366l6 0l-3 6zM249 372l6 0l-3-6zM252 366l6 0l-3 6zM240 378l6 0l-3-6zM243 372l6 0l-3 6zM249 372l6 0l-3 6zM270 378l6 0l-3 6zM243 384l6 0l-3 6zM258 390l6 0l-3-6zM270 390l6 0l-3-6zM279 384l6 0l-3 6zM291 384l6 0l-3 6zM237 396l6 0l-3-6zM243 396l6 0l-3-6zM249 396l6 0l-3-6zM258 390l6 0l-3 6zM264 390l6 0l-3 6zM258 402l6 0l-3-6zM273 396l6 0l-3 6zM291 396l6 0l-3 6zM255 408l6 0l-3-6zM264 402l6 0l-3 6zM267 408l6 0l-3-6zM273 408l6 0l-3-6zM264 414l6 0l-3-6zM225 420l6 0l-3-6zM261 420l6 0l-3-6zM270 414l6 0l-3 6zM285 420l6 0l-3-6zM252 426l6 0l-3-6zM255 420l6 0l-3 6zM261 420l6 0l-3 6zM252 426l6 0l-3 6zM267 432l6 0l-3-6zM246 438l6 0l-3-6zM255 432l6 0l-3 6zM261 432l6 0l-3 6zM243 444l6 0l-3-6zM255 444l6 0l-3-6zM237 444l6 0l-3 6zM261 444l6 0l-3 6zM240 450l6 0l-3 6zM261 456l6 0l-3-6zM240 462l6 0l-3-6zM270 462l6 0l-3-6zM255 468l6 0l-3-6zM264 462l6 0l-3 6zM297 468l6 0l-3-6zM249 468l6 0l-3 6zM264 474l6 0l-3-6zM234 474l6 0l-3 6zM258 474l6 0l-3 6zM270 474l6 0l-3 6zM273 480l6 0l-3-6zM249 480l6 0l-3 6zM258 486l6 0l-3-6zM264 486l6 0l-3-6zM267 480l6 0l-3 6zM249 492l6 0l-3-6zM252 486l6 0l-3 6zM270 486l6 0l-3 6zM285 492l6 0l-3-6zM288 486l6 0l-3 6zM219 492l6 0l-3 6zM261 492l6 0l-3 6zM270 498l6 0l-3-6zM273 492l6 0l-3 6zM279 492l6 0l-3 6zM300 498l6 0l-3-6zM249 504l6 0l-3-6zM261 504l6 0l-3-6zM270 498l6 0l-3 6zM273 504l6 0l-3-6zM279 504l6 0l-3-6zM204 510l6 0l-3-6zM219 504l6 0l-3 6zM261 504l6 0l-3 6zM258 510l6 0l-3 6zM264 510l6 0l-3 6zM282 510l6 0l-3 6zM288 510l6 0l-3 6zM240 522l6 0l-3-6zM255 516l6 0l-3 6zM267 516l6 0l-3 6zM273 516l6 0l-3 6zM276 522l6 0l-3-6zM282 522l6 0l-3-6zM285 516l6 0l-3 6zM219 528l6 0l-3-6zM222 522l6 0l-3 6zM231 528l6 0l-3-6zM240 522l6 0l-3 6zM243 528l6 0l-3-6zM261 528l6 0l-3-6zM267 528l6 0l-3-6zM270 522l6 0l-3 6zM237 528l6 0l-3 6zM246 534l6 0l-3-6zM258 534l6 0l-3-6zM261 528l6 0l-3 6zM264 534l6 0l-3-6zM279 528l6 0l-3 6zM330 534l6 0l-3-6zM234 534l6 0l-3 6zM246 534l6 0l-3 6zM249 540l6 0l-3-6zM255 540l6 0l-3-6zM267 540l6 0l-3-6zM276 534l6 0l-3 6zM255 540l6 0l-3 6zM291 540l6 0l-3 6zM228 546l6 0l-3 6zM237 552l6 0l-3 6zM246 558l6 0l-3-6zM255 552l6 0l-3 6zM261 552l6 0l-3 6zM267 552l6 0l-3 6zM270 558l6 0l-3-6zM246 558l6 0l-3 6zM255 564l6 0l-3-6zM258 558l6 0l-3 6zM264 558l6 0l-3 6zM267 564l6 0l-3-6zM279 564l6 0l-3-6zM285 564l6 0l-3-6zM249 564l6 0l-3 6zM279 564l6 0l-3 6z"/><path fill="#ff8e69" d="M195 300l6 0l-3-6zM186 306l6 0l-3-6zM198 306l6 0l-3-6zM201 300l6 0l-3 6zM204 306l6 0l-3-6zM207 300l6 0l-3 6zM219 300l6 0l-3 6zM186 306l6 0l-3 6zM201 312l6 0l-3-6zM204 306l6 0l-3 6zM213 312l6 0l-3-6zM219 312l6 0l-3-6zM186 318l6 0l-3-6zM195 312l6 0l-3 6zM198 318l6 0l-3-6zM201 312l6 0l-3 6zM204 318l6 0l-3-6zM234 318l6 0l-3-6zM180 318l6 0l-3 6zM183 324l6 0l-3-6zM189 324l6 0l-3-6zM195 324l6 0l-3-6zM201 324l6 0l-3-6zM210 318l6 0l-3 6zM213 324l6 0l-3-6zM216 318l6 0l-3 6zM219 324l6 0l-3-6zM204 330l6 0l-3-6zM207 324l6 0l-3 6zM222 330l6 0l-3-6zM189 336l6 0l-3-6zM201 336l6 0l-3-6zM204 330l6 0l-3 6zM213 336l6 0l-3-6zM216 330l6 0l-3 6zM222 330l6 0l-3 6zM168 342l6 0l-3-6zM171 336l6 0l-3 6zM201 336l6 0l-3 6zM219 336l6 0l-3 6zM222 342l6 0l-3-6zM225 336l6 0l-3 6zM228 342l6 0l-3-6zM246 342l6 0l-3-6zM270 342l6 0l-3-6zM183 348l6 0l-3-6zM189 348l6 0l-3-6zM207 348l6 0l-3-6zM210 342l6 0l-3 6zM222 342l6 0l-3 6zM234 342l6 0l-3 6zM171 348l6 0l-3 6zM195 348l6 0l-3 6zM222 354l6 0l-3-6zM225 348l6 0l-3 6zM228 354l6 0l-3-6zM231 348l6 0l-3 6zM276 354l6 0l-3-6zM195 360l6 0l-3-6zM234 354l6 0l-3 6zM237 360l6 0l-3-6zM243 360l6 0l-3-6zM246 354l6 0l-3 6zM165 360l6 0l-3 6zM216 366l6 0l-3-6zM219 360l6 0l-3 6zM225 360l6 0l-3 6zM228 366l6 0l-3-6zM162 366l6 0l-3 6zM216 366l6 0l-3 6zM219 372l6 0l-3-6zM225 372l6 0l-3-6zM237 372l6 0l-3-6zM240 366l6 0l-3 6zM222 378l6 0l-3-6zM234 378l6 0l-3-6zM252 378l6 0l-3-6zM261 384l6 0l-3-6zM264 378l6 0l-3 6zM225 384l6 0l-3 6zM246 390l6 0l-3-6zM249 384l6 0l-3 6zM252 390l6 0l-3-6zM228 390l6 0l-3 6zM183 396l6 0l-3 6zM231 396l6 0l-3 6zM237 396l6 0l-3 6zM246 402l6 0l-3-6zM249 396l6 0l-3 6zM264 402l6 0l-3-6zM234 402l6 0l-3 6zM243 408l6 0l-3-6zM252 414l6 0l-3-6zM255 408l6 0l-3 6zM258 414l6 0l-3 6zM267 420l6 0l-3-6zM237 420l6 0l-3 6zM282 426l6 0l-3-6zM246 426l6 0l-3 6zM255 432l6 0l-3-6zM261 432l6 0l-3-6zM249 432l6 0l-3 6zM252 438l6 0l-3-6zM252 438l6 0l-3 6zM258 438l6 0l-3 6zM249 444l6 0l-3 6zM252 450l6 0l-3-6zM258 450l6 0l-3-6zM234 450l6 0l-3 6zM243 456l6 0l-3-6zM252 450l6 0l-3 6zM234 462l6 0l-3-6zM246 462l6 0l-3-6zM255 456l6 0l-3 6zM222 462l6 0l-3 6zM243 468l6 0l-3-6zM261 468l6 0l-3-6zM267 468l6 0l-3-6zM270 462l6 0l-3 6zM261 468l6 0l-3 6zM306 474l6 0l-3-6zM225 480l6 0l-3-6zM249 480l6 0l-3-6zM264 474l6 0l-3 6zM210 486l6 0l-3-6zM252 486l6 0l-3-6zM255 480l6 0l-3 6zM285 480l6 0l-3 6zM219 492l6 0l-3-6zM255 492l6 0l-3-6zM261 492l6 0l-3-6zM201 492l6 0l-3 6zM237 492l6 0l-3 6zM240 498l6 0l-3-6zM264 498l6 0l-3-6zM216 498l6 0l-3 6zM231 504l6 0l-3-6zM252 498l6 0l-3 6zM258 498l6 0l-3 6zM264 498l6 0l-3 6zM291 504l6 0l-3-6zM207 504l6 0l-3 6zM222 510l6 0l-3-6zM231 504l6 0l-3 6zM246 510l6 0l-3-6zM252 510l6 0l-3-6zM270 510l6 0l-3-6zM288 510l6 0l-3-6zM243 516l6 0l-3-6zM237 516l6 0l-3 6zM258 522l6 0l-3-6zM261 516l6 0l-3 6zM279 516l6 0l-3 6zM324 522l6 0l-3-6zM207 528l6 0l-3-6zM216 522l6 0l-3 6zM228 522l6 0l-3 6zM303 528l6 0l-3-6zM228 534l6 0l-3-6zM240 534l6 0l-3-6zM222 534l6 0l-3 6zM240 534l6 0l-3 6zM261 540l6 0l-3-6zM285 540l6 0l-3-6zM234 546l6 0l-3-6zM261 540l6 0l-3 6zM276 546l6 0l-3-6zM234 546l6 0l-3 6zM252 546l6 0l-3 6zM255 552l6 0l-3-6zM264 546l6 0l-3 6zM273 552l6 0l-3-6zM243 552l6 0l-3 6zM249 552l6 0l-3 6zM258 558l6 0l-3-6zM243 564l6 0l-3-6zM282 558l6 0l-3 6zM252 570l6 0l-3-6zM258 570l6 0l-3-6zM264 570l6 0l-3-6zM267 564l6 0l-3 6zM288 570l6 0l-3-6zM258 570l6 0l-3 6z"/><path fill="#ff9c5c" d="M195 300l6 0l-3 6zM183 312l6 0l-3-6zM189 312l6 0l-3-6zM192 306l6 0l-3 6zM198 306l6 0l-3 6zM180 318l6 0l-3-6zM192 318l6 0l-3-6zM207 312l6 0l-3 6zM213 312l6 0l-3 6zM216 318l6 0l-3-6zM177 324l6 0l-3-6zM204 318l6 0l-3 6zM174 330l6 0l-3-6zM177 324l6 0l-3 6zM183 324l6 0l-3 6zM186 330l6 0l-3-6zM192 330l6 0l-3-6zM210 330l6 0l-3-6zM174 330l6 0l-3 6zM177 336l6 0l-3-6zM180 330l6 0l-3 6zM183 336l6 0l-3-6zM192 330l6 0l-3 6zM198 330l6 0l-3 6zM207 336l6 0l-3-6zM210 330l6 0l-3 6zM225 336l6 0l-3-6zM228 330l6 0l-3 6zM174 342l6 0l-3-6zM177 336l6 0l-3 6zM189 336l6 0l-3 6zM207 336l6 0l-3 6zM213 336l6 0l-3 6zM204 342l6 0l-3 6zM216 342l6 0l-3 6zM228 342l6 0l-3 6zM192 354l6 0l-3-6zM207 348l6 0l-3 6zM213 348l6 0l-3 6zM180 354l6 0l-3 6zM204 354l6 0l-3 6zM207 360l6 0l-3-6zM213 360l6 0l-3-6zM231 360l6 0l-3-6zM261 360l6 0l-3-6zM183 360l6 0l-3 6zM201 360l6 0l-3 6zM210 366l6 0l-3-6zM231 360l6 0l-3 6zM243 360l6 0l-3 6zM177 372l6 0l-3-6zM189 372l6 0l-3-6zM204 366l6 0l-3 6zM267 372l6 0l-3-6zM279 372l6 0l-3-6zM219 372l6 0l-3 6zM225 372l6 0l-3 6zM231 372l6 0l-3 6zM258 378l6 0l-3-6zM177 384l6 0l-3-6zM231 384l6 0l-3-6zM246 378l6 0l-3 6zM258 378l6 0l-3 6zM234 390l6 0l-3-6zM216 390l6 0l-3 6zM225 396l6 0l-3-6zM234 390l6 0l-3 6zM240 390l6 0l-3 6zM246 390l6 0l-3 6zM252 390l6 0l-3 6zM267 396l6 0l-3-6zM273 396l6 0l-3-6zM252 402l6 0l-3-6zM267 396l6 0l-3 6zM240 402l6 0l-3 6zM261 408l6 0l-3-6zM237 408l6 0l-3 6zM246 414l6 0l-3-6zM249 408l6 0l-3 6zM240 414l6 0l-3 6zM249 420l6 0l-3-6zM255 420l6 0l-3-6zM222 426l6 0l-3-6zM225 420l6 0l-3 6zM234 426l6 0l-3-6zM240 426l6 0l-3-6zM264 426l6 0l-3 6zM207 432l6 0l-3 6zM234 438l6 0l-3-6zM237 432l6 0l-3 6zM240 438l6 0l-3-6zM243 432l6 0l-3 6zM294 438l6 0l-3-6zM219 444l6 0l-3-6zM246 438l6 0l-3 6zM234 450l6 0l-3-6zM243 444l6 0l-3 6zM231 456l6 0l-3-6zM219 456l6 0l-3 6zM222 462l6 0l-3-6zM228 462l6 0l-3-6zM249 456l6 0l-3 6zM258 462l6 0l-3-6zM234 462l6 0l-3 6zM240 462l6 0l-3 6zM249 468l6 0l-3-6zM252 462l6 0l-3 6zM192 474l6 0l-3-6zM237 468l6 0l-3 6zM246 474l6 0l-3-6zM255 468l6 0l-3 6zM201 480l6 0l-3-6zM219 480l6 0l-3-6zM237 480l6 0l-3-6zM246 474l6 0l-3 6zM255 480l6 0l-3-6zM261 480l6 0l-3-6zM207 480l6 0l-3 6zM219 480l6 0l-3 6zM225 480l6 0l-3 6zM234 486l6 0l-3-6zM183 492l6 0l-3-6zM192 486l6 0l-3 6zM198 486l6 0l-3 6zM231 492l6 0l-3-6zM207 492l6 0l-3 6zM216 498l6 0l-3-6zM225 492l6 0l-3 6zM246 498l6 0l-3-6zM258 498l6 0l-3-6zM198 498l6 0l-3 6zM204 498l6 0l-3 6zM207 504l6 0l-3-6zM210 498l6 0l-3 6zM213 504l6 0l-3-6zM225 504l6 0l-3-6zM243 504l6 0l-3-6zM246 498l6 0l-3 6zM195 504l6 0l-3 6zM210 510l6 0l-3-6zM213 504l6 0l-3 6zM225 504l6 0l-3 6zM243 504l6 0l-3 6zM267 504l6 0l-3 6zM204 510l6 0l-3 6zM216 510l6 0l-3 6zM228 510l6 0l-3 6zM231 516l6 0l-3-6zM240 510l6 0l-3 6zM249 516l6 0l-3-6zM252 510l6 0l-3 6zM234 522l6 0l-3-6zM246 522l6 0l-3-6zM249 516l6 0l-3 6zM294 522l6 0l-3-6zM225 528l6 0l-3-6zM249 528l6 0l-3-6zM264 522l6 0l-3 6zM216 534l6 0l-3-6zM219 528l6 0l-3 6zM225 528l6 0l-3 6zM243 528l6 0l-3 6zM249 528l6 0l-3 6zM252 534l6 0l-3-6zM219 540l6 0l-3-6zM225 540l6 0l-3-6zM228 534l6 0l-3 6zM231 540l6 0l-3-6zM237 540l6 0l-3-6zM228 546l6 0l-3-6zM237 540l6 0l-3 6zM246 546l6 0l-3-6zM252 546l6 0l-3-6zM240 546l6 0l-3 6zM243 552l6 0l-3-6zM249 552l6 0l-3-6zM234 558l6 0l-3-6zM252 558l6 0l-3-6zM270 570l6 0l-3 6z"/><path fill="#ffaa4f" d="M207 312l6 0l-3-6zM210 318l6 0l-3-6zM186 318l6 0l-3 6zM189 324l6 0l-3 6zM201 324l6 0l-3 6zM228 330l6 0l-3-6zM171 336l6 0l-3-6zM186 330l6 0l-3 6zM231 336l6 0l-3-6zM180 342l6 0l-3-6zM186 342l6 0l-3-6zM195 336l6 0l-3 6zM216 342l6 0l-3-6zM171 348l6 0l-3-6zM177 348l6 0l-3-6zM186 342l6 0l-3 6zM192 342l6 0l-3 6zM168 354l6 0l-3-6zM186 354l6 0l-3-6zM189 348l6 0l-3 6zM204 354l6 0l-3-6zM219 348l6 0l-3 6zM246 354l6 0l-3-6zM168 354l6 0l-3 6zM174 354l6 0l-3 6zM216 354l6 0l-3 6zM168 366l6 0l-3-6zM186 366l6 0l-3-6zM207 360l6 0l-3 6zM222 366l6 0l-3-6zM246 366l6 0l-3-6zM249 360l6 0l-3 6zM165 372l6 0l-3-6zM171 372l6 0l-3-6zM195 372l6 0l-3-6zM198 366l6 0l-3 6zM213 372l6 0l-3-6zM228 366l6 0l-3 6zM231 372l6 0l-3-6zM183 372l6 0l-3 6zM195 372l6 0l-3 6zM204 378l6 0l-3-6zM207 372l6 0l-3 6zM210 378l6 0l-3-6zM216 378l6 0l-3-6zM246 378l6 0l-3-6zM162 378l6 0l-3 6zM174 378l6 0l-3 6zM192 378l6 0l-3 6zM204 378l6 0l-3 6zM219 384l6 0l-3-6zM228 378l6 0l-3 6zM234 378l6 0l-3 6zM237 384l6 0l-3-6zM240 378l6 0l-3 6zM243 384l6 0l-3-6zM195 384l6 0l-3 6zM207 384l6 0l-3 6zM216 390l6 0l-3-6zM231 384l6 0l-3 6zM237 384l6 0l-3 6zM300 390l6 0l-3-6zM207 396l6 0l-3-6zM210 390l6 0l-3 6zM303 396l6 0l-3-6zM216 402l6 0l-3-6zM225 396l6 0l-3 6zM234 402l6 0l-3-6zM243 396l6 0l-3 6zM216 402l6 0l-3 6zM246 402l6 0l-3 6zM249 408l6 0l-3-6zM231 408l6 0l-3 6zM234 414l6 0l-3-6zM258 414l6 0l-3-6zM216 414l6 0l-3 6zM237 420l6 0l-3-6zM246 414l6 0l-3 6zM252 414l6 0l-3 6zM177 420l6 0l-3 6zM231 420l6 0l-3 6zM249 420l6 0l-3 6zM258 426l6 0l-3-6zM237 432l6 0l-3-6zM240 426l6 0l-3 6zM243 432l6 0l-3-6zM249 432l6 0l-3-6zM216 438l6 0l-3-6zM225 432l6 0l-3 6zM228 438l6 0l-3-6zM180 438l6 0l-3 6zM204 438l6 0l-3 6zM225 444l6 0l-3-6zM228 438l6 0l-3 6zM234 438l6 0l-3 6zM237 444l6 0l-3-6zM186 450l6 0l-3-6zM246 450l6 0l-3-6zM186 450l6 0l-3 6zM186 462l6 0l-3-6zM195 456l6 0l-3 6zM231 456l6 0l-3 6zM252 462l6 0l-3-6zM198 462l6 0l-3 6zM204 462l6 0l-3 6zM225 468l6 0l-3-6zM228 462l6 0l-3 6zM198 474l6 0l-3-6zM213 468l6 0l-3 6zM222 474l6 0l-3-6zM231 468l6 0l-3 6zM252 474l6 0l-3-6zM192 474l6 0l-3 6zM195 480l6 0l-3-6zM204 474l6 0l-3 6zM213 480l6 0l-3-6zM216 474l6 0l-3 6zM222 474l6 0l-3 6zM243 480l6 0l-3-6zM192 486l6 0l-3-6zM195 480l6 0l-3 6zM216 486l6 0l-3-6zM228 486l6 0l-3-6zM243 480l6 0l-3 6zM246 486l6 0l-3-6zM270 486l6 0l-3-6zM204 486l6 0l-3 6zM207 492l6 0l-3-6zM216 486l6 0l-3 6zM225 492l6 0l-3-6zM228 486l6 0l-3 6zM237 492l6 0l-3-6zM240 486l6 0l-3 6zM243 492l6 0l-3-6zM258 486l6 0l-3 6zM189 492l6 0l-3 6zM192 498l6 0l-3-6zM213 492l6 0l-3 6zM228 498l6 0l-3-6zM252 498l6 0l-3-6zM201 504l6 0l-3-6zM222 498l6 0l-3 6zM228 498l6 0l-3 6zM234 498l6 0l-3 6zM240 498l6 0l-3 6zM237 504l6 0l-3 6zM240 510l6 0l-3-6zM255 504l6 0l-3 6zM198 510l6 0l-3 6zM210 510l6 0l-3 6zM234 510l6 0l-3 6zM237 516l6 0l-3-6zM246 510l6 0l-3 6zM261 516l6 0l-3-6zM210 522l6 0l-3-6zM225 516l6 0l-3 6zM252 522l6 0l-3-6zM270 522l6 0l-3-6zM213 528l6 0l-3-6zM234 522l6 0l-3 6zM237 528l6 0l-3-6zM291 528l6 0l-3-6zM210 534l6 0l-3-6zM222 534l6 0l-3-6zM234 534l6 0l-3-6zM216 534l6 0l-3 6zM219 540l6 0l-3 6zM222 546l6 0l-3-6zM225 540l6 0l-3 6zM231 540l6 0l-3 6zM258 546l6 0l-3-6zM231 552l6 0l-3-6zM237 552l6 0l-3-6zM240 558l6 0l-3 6zM255 564l6 0l-3 6z"/><path fill="#ffb842" d="M180 330l6 0l-3-6zM198 330l6 0l-3-6zM183 336l6 0l-3 6zM168 342l6 0l-3 6zM180 342l6 0l-3 6zM201 348l6 0l-3-6zM174 354l6 0l-3-6zM198 354l6 0l-3-6zM201 348l6 0l-3 6zM165 360l6 0l-3-6zM171 360l6 0l-3-6zM186 354l6 0l-3 6zM192 354l6 0l-3 6zM198 354l6 0l-3 6zM201 360l6 0l-3-6zM171 360l6 0l-3 6zM174 366l6 0l-3-6zM177 360l6 0l-3 6zM180 366l6 0l-3-6zM189 360l6 0l-3 6zM198 366l6 0l-3-6zM204 366l6 0l-3-6zM174 366l6 0l-3 6zM180 366l6 0l-3 6zM192 366l6 0l-3 6zM201 372l6 0l-3-6zM162 378l6 0l-3-6zM180 378l6 0l-3-6zM186 378l6 0l-3-6zM228 378l6 0l-3-6zM168 378l6 0l-3 6zM171 384l6 0l-3-6zM195 384l6 0l-3-6zM201 384l6 0l-3-6zM207 384l6 0l-3-6zM222 378l6 0l-3 6zM180 390l6 0l-3-6zM186 390l6 0l-3-6zM192 390l6 0l-3-6zM198 390l6 0l-3-6zM201 384l6 0l-3 6zM180 390l6 0l-3 6zM198 390l6 0l-3 6zM201 396l6 0l-3-6zM219 396l6 0l-3-6zM222 390l6 0l-3 6zM255 396l6 0l-3-6zM222 402l6 0l-3-6zM201 408l6 0l-3-6zM207 408l6 0l-3-6zM222 402l6 0l-3 6zM225 408l6 0l-3-6zM162 414l6 0l-3-6zM201 408l6 0l-3 6zM207 408l6 0l-3 6zM210 414l6 0l-3-6zM228 414l6 0l-3-6zM240 414l6 0l-3-6zM171 420l6 0l-3-6zM186 414l6 0l-3 6zM201 420l6 0l-3-6zM207 420l6 0l-3-6zM219 420l6 0l-3-6zM228 414l6 0l-3 6zM234 414l6 0l-3 6zM243 420l6 0l-3-6zM216 426l6 0l-3-6zM228 426l6 0l-3-6zM162 426l6 0l-3 6zM207 432l6 0l-3-6zM210 426l6 0l-3 6zM222 426l6 0l-3 6zM228 426l6 0l-3 6zM234 426l6 0l-3 6zM171 432l6 0l-3 6zM231 432l6 0l-3 6zM201 444l6 0l-3-6zM213 444l6 0l-3-6zM216 438l6 0l-3 6zM222 438l6 0l-3 6zM240 438l6 0l-3 6zM264 438l6 0l-3 6zM210 450l6 0l-3-6zM213 444l6 0l-3 6zM216 450l6 0l-3-6zM219 444l6 0l-3 6zM222 450l6 0l-3-6zM225 444l6 0l-3 6zM276 450l6 0l-3-6zM168 450l6 0l-3 6zM171 456l6 0l-3-6zM174 450l6 0l-3 6zM192 450l6 0l-3 6zM195 456l6 0l-3-6zM207 456l6 0l-3-6zM216 450l6 0l-3 6zM219 456l6 0l-3-6zM222 450l6 0l-3 6zM228 450l6 0l-3 6zM237 456l6 0l-3-6zM174 462l6 0l-3-6zM192 462l6 0l-3-6zM213 456l6 0l-3 6zM225 456l6 0l-3 6zM243 456l6 0l-3 6zM180 462l6 0l-3 6zM195 468l6 0l-3-6zM213 468l6 0l-3-6zM237 468l6 0l-3-6zM174 474l6 0l-3-6zM201 468l6 0l-3 6zM204 474l6 0l-3-6zM207 468l6 0l-3 6zM216 474l6 0l-3-6zM219 468l6 0l-3 6zM225 468l6 0l-3 6zM234 474l6 0l-3-6zM180 474l6 0l-3 6zM198 474l6 0l-3 6zM210 474l6 0l-3 6zM231 480l6 0l-3-6zM252 474l6 0l-3 6zM201 480l6 0l-3 6zM204 486l6 0l-3-6zM222 486l6 0l-3-6zM231 480l6 0l-3 6zM240 486l6 0l-3-6zM186 486l6 0l-3 6zM189 492l6 0l-3-6zM195 492l6 0l-3-6zM210 486l6 0l-3 6zM213 492l6 0l-3-6zM222 486l6 0l-3 6zM186 498l6 0l-3-6zM204 498l6 0l-3-6zM210 498l6 0l-3-6zM222 498l6 0l-3-6zM231 492l6 0l-3 6zM234 498l6 0l-3-6zM192 498l6 0l-3 6zM195 504l6 0l-3-6zM237 504l6 0l-3-6zM216 510l6 0l-3-6zM228 510l6 0l-3-6zM234 510l6 0l-3-6zM201 516l6 0l-3-6zM219 516l6 0l-3-6zM225 516l6 0l-3-6zM255 516l6 0l-3-6zM201 516l6 0l-3 6zM204 522l6 0l-3-6zM216 522l6 0l-3-6zM228 522l6 0l-3-6zM231 516l6 0l-3 6zM204 522l6 0l-3 6zM210 522l6 0l-3 6zM270 534l6 0l-3-6z"/><path fill="#ffc635" d="M183 312l6 0l-3 6zM177 348l6 0l-3 6zM177 360l6 0l-3-6zM183 360l6 0l-3-6zM189 360l6 0l-3-6zM192 366l6 0l-3-6zM195 360l6 0l-3 6zM183 372l6 0l-3-6zM207 372l6 0l-3-6zM210 366l6 0l-3 6zM165 372l6 0l-3 6zM174 378l6 0l-3-6zM177 372l6 0l-3 6zM192 378l6 0l-3-6zM198 378l6 0l-3-6zM213 372l6 0l-3 6zM165 384l6 0l-3-6zM186 378l6 0l-3 6zM210 378l6 0l-3 6zM213 384l6 0l-3-6zM216 378l6 0l-3 6zM225 384l6 0l-3-6zM168 390l6 0l-3-6zM210 390l6 0l-3-6zM222 390l6 0l-3-6zM228 390l6 0l-3-6zM240 390l6 0l-3-6zM183 396l6 0l-3-6zM231 396l6 0l-3-6zM180 402l6 0l-3-6zM195 396l6 0l-3 6zM198 402l6 0l-3-6zM201 396l6 0l-3 6zM204 402l6 0l-3-6zM207 396l6 0l-3 6zM210 402l6 0l-3-6zM213 396l6 0l-3 6zM219 396l6 0l-3 6zM240 402l6 0l-3-6zM162 402l6 0l-3 6zM165 408l6 0l-3-6zM171 408l6 0l-3-6zM180 402l6 0l-3 6zM186 402l6 0l-3 6zM192 402l6 0l-3 6zM213 408l6 0l-3-6zM219 408l6 0l-3-6zM228 402l6 0l-3 6zM237 408l6 0l-3-6zM204 414l6 0l-3-6zM216 414l6 0l-3-6zM219 408l6 0l-3 6zM222 414l6 0l-3-6zM225 408l6 0l-3 6zM243 408l6 0l-3 6zM162 414l6 0l-3 6zM174 414l6 0l-3 6zM177 420l6 0l-3-6zM192 414l6 0l-3 6zM210 414l6 0l-3 6zM231 420l6 0l-3-6zM174 426l6 0l-3-6zM189 420l6 0l-3 6zM195 420l6 0l-3 6zM213 420l6 0l-3 6zM219 420l6 0l-3 6zM177 432l6 0l-3-6zM180 426l6 0l-3 6zM195 432l6 0l-3-6zM201 432l6 0l-3-6zM213 432l6 0l-3-6zM231 432l6 0l-3-6zM168 438l6 0l-3-6zM180 438l6 0l-3-6zM198 438l6 0l-3-6zM210 438l6 0l-3-6zM219 432l6 0l-3 6zM222 438l6 0l-3-6zM183 444l6 0l-3-6zM186 438l6 0l-3 6zM198 438l6 0l-3 6zM231 444l6 0l-3-6zM198 450l6 0l-3-6zM201 444l6 0l-3 6zM207 444l6 0l-3 6zM240 450l6 0l-3-6zM177 456l6 0l-3-6zM198 450l6 0l-3 6zM210 450l6 0l-3 6zM213 456l6 0l-3-6zM249 456l6 0l-3-6zM171 456l6 0l-3 6zM183 456l6 0l-3 6zM201 456l6 0l-3 6zM207 456l6 0l-3 6zM237 456l6 0l-3 6zM183 468l6 0l-3-6zM192 462l6 0l-3 6zM207 468l6 0l-3-6zM210 462l6 0l-3 6zM216 462l6 0l-3 6zM219 468l6 0l-3-6zM195 468l6 0l-3 6zM210 474l6 0l-3-6zM228 474l6 0l-3-6zM183 480l6 0l-3-6zM186 474l6 0l-3 6zM189 480l6 0l-3-6zM228 474l6 0l-3 6zM267 480l6 0l-3-6zM186 486l6 0l-3-6zM189 480l6 0l-3 6zM213 480l6 0l-3 6zM201 492l6 0l-3-6zM234 486l6 0l-3 6zM195 492l6 0l-3 6zM243 492l6 0l-3 6zM189 504l6 0l-3-6zM192 510l6 0l-3-6zM198 510l6 0l-3-6zM207 516l6 0l-3-6zM213 516l6 0l-3-6zM222 510l6 0l-3 6zM207 516l6 0l-3 6zM219 516l6 0l-3 6zM222 522l6 0l-3-6zM213 528l6 0l-3 6zM240 546l6 0l-3-6z"/><path fill="#ffd428" d="M198 342l6 0l-3-6zM183 348l6 0l-3 6zM168 366l6 0l-3 6zM186 366l6 0l-3 6zM171 372l6 0l-3 6zM180 378l6 0l-3 6zM183 384l6 0l-3-6zM189 384l6 0l-3-6zM165 384l6 0l-3 6zM174 390l6 0l-3-6zM189 384l6 0l-3 6zM204 390l6 0l-3-6zM213 384l6 0l-3 6zM219 384l6 0l-3 6zM162 390l6 0l-3 6zM171 396l6 0l-3-6zM186 390l6 0l-3 6zM192 390l6 0l-3 6zM213 396l6 0l-3-6zM174 402l6 0l-3-6zM189 396l6 0l-3 6zM192 402l6 0l-3-6zM228 402l6 0l-3-6zM177 408l6 0l-3-6zM195 408l6 0l-3-6zM198 402l6 0l-3 6zM231 408l6 0l-3-6zM168 414l6 0l-3-6zM183 408l6 0l-3 6zM195 408l6 0l-3 6zM165 420l6 0l-3-6zM168 414l6 0l-3 6zM180 414l6 0l-3 6zM183 420l6 0l-3-6zM195 420l6 0l-3-6zM198 414l6 0l-3 6zM204 414l6 0l-3 6zM162 426l6 0l-3-6zM165 420l6 0l-3 6zM168 426l6 0l-3-6zM192 426l6 0l-3-6zM198 426l6 0l-3-6zM201 420l6 0l-3 6zM204 426l6 0l-3-6zM207 420l6 0l-3 6zM210 426l6 0l-3-6zM246 426l6 0l-3-6zM174 426l6 0l-3 6zM186 426l6 0l-3 6zM198 426l6 0l-3 6zM219 432l6 0l-3-6zM225 432l6 0l-3-6zM165 432l6 0l-3 6zM174 438l6 0l-3-6zM177 432l6 0l-3 6zM189 432l6 0l-3 6zM192 438l6 0l-3-6zM195 432l6 0l-3 6zM204 438l6 0l-3-6zM165 444l6 0l-3-6zM207 444l6 0l-3-6zM174 450l6 0l-3-6zM180 450l6 0l-3-6zM189 444l6 0l-3 6zM192 450l6 0l-3-6zM228 450l6 0l-3-6zM231 444l6 0l-3 6zM183 456l6 0l-3-6zM189 456l6 0l-3-6zM225 456l6 0l-3-6zM177 456l6 0l-3 6zM189 456l6 0l-3 6zM198 462l6 0l-3-6zM210 462l6 0l-3-6zM216 462l6 0l-3-6zM174 462l6 0l-3 6zM186 462l6 0l-3 6zM189 468l6 0l-3-6zM183 468l6 0l-3 6zM240 474l6 0l-3-6zM207 480l6 0l-3-6zM180 486l6 0l-3-6zM183 480l6 0l-3 6zM198 486l6 0l-3-6zM201 504l6 0l-3 6zM213 516l6 0l-3 6z"/><path fill="#ffe31a" d="M168 378l6 0l-3-6zM198 378l6 0l-3 6zM171 384l6 0l-3 6zM177 384l6 0l-3 6zM183 384l6 0l-3 6zM174 390l6 0l-3 6zM177 396l6 0l-3-6zM195 396l6 0l-3-6zM204 390l6 0l-3 6zM162 402l6 0l-3-6zM165 396l6 0l-3 6zM168 402l6 0l-3-6zM177 396l6 0l-3 6zM186 402l6 0l-3-6zM174 402l6 0l-3 6zM183 408l6 0l-3-6zM204 402l6 0l-3 6zM210 402l6 0l-3 6zM165 408l6 0l-3 6zM174 414l6 0l-3-6zM177 408l6 0l-3 6zM189 408l6 0l-3 6zM222 414l6 0l-3 6zM180 426l6 0l-3-6zM165 432l6 0l-3-6zM168 426l6 0l-3 6zM171 432l6 0l-3-6zM183 432l6 0l-3-6zM189 432l6 0l-3-6zM204 426l6 0l-3 6zM216 426l6 0l-3 6zM183 432l6 0l-3 6zM201 432l6 0l-3 6zM213 432l6 0l-3 6zM168 438l6 0l-3 6zM174 438l6 0l-3 6zM192 438l6 0l-3 6zM168 450l6 0l-3-6zM171 444l6 0l-3 6zM177 444l6 0l-3 6zM195 444l6 0l-3 6zM204 450l6 0l-3-6zM180 450l6 0l-3 6zM204 450l6 0l-3 6zM180 462l6 0l-3-6zM177 468l6 0l-3-6zM201 468l6 0l-3-6zM231 468l6 0l-3-6zM177 468l6 0l-3 6zM180 474l6 0l-3-6zM186 474l6 0l-3-6zM177 480l6 0l-3-6zM198 498l6 0l-3-6z"/><path fill="#fff10d" d="M189 372l6 0l-3 6zM201 372l6 0l-3 6zM165 396l6 0l-3-6zM168 390l6 0l-3 6zM171 396l6 0l-3 6zM189 408l6 0l-3-6zM171 408l6 0l-3 6zM180 414l6 0l-3-6zM186 414l6 0l-3-6zM192 414l6 0l-3-6zM198 414l6 0l-3-6zM171 420l6 0l-3 6zM183 420l6 0l-3 6zM186 438l6 0l-3-6zM171 444l6 0l-3-6zM195 444l6 0l-3-6zM210 438l6 0l-3 6zM183 444l6 0l-3 6zM201 456l6 0l-3-6z"/><path fill="#ffff00" d="M162 390l6 0l-3-6zM189 396l6 0l-3-6zM168 402l6 0l-3 6zM213 408l6 0l-3 6zM189 420l6 0l-3-6zM213 420l6 0l-3-6zM186 426l6 0l-3-6zM192 426l6 0l-3 6zM177 444l6 0l-3-6zM189 444l6 0l-3-6zM204 462l6 0l-3-6zM189 468l6 0l-3 6z"/>
</g>
<g clip-path="url(#cl)" fill="none" stroke="#f0f0f0">
<path d="M848.1 746.0L898.0 734.3M766.1 746.0L898.0 715.2M684.1 746.0L898.0 696.0M602.2 746.0L898.0 676.9M438.3 746.0L898.0 638.6M6.3 746.0L-5.0 732.6M356.4 746.0L898.0 619.4M42.7 746.0L-5.0 689.5M274.5 746.0L898.0 600.2M79.0 746.0L-5.0 646.5M192.7 746.0L898.0 581.1M115.3 746.0L-5.0 603.4M110.8 746.0L898.0 561.9M151.7 746.0L-5.0 560.4M29.0 746.0L898.0 542.8M188.0 746.0L-5.0 517.3M-5.0 734.8L898.0 523.6M224.4 746.0L-5.0 474.3M-5.0 715.7L898.0 504.4M260.7 746.0L-5.0 431.2M-5.0 696.5L898.0 485.3M333.4 746.0L-5.0 345.1M-5.0 658.3L898.0 446.9M369.8 746.0L-5.0 302.0M-5.0 639.1L898.0 427.8M406.2 746.0L-5.0 259.0M-5.0 620.0L898.0 408.6M442.5 746.0L-5.0 215.9M-5.0 600.9L898.0 389.4M478.9 746.0L-5.0 172.8M-5.0 581.7L898.0 370.3M515.3 746.0L-5.0 129.7M-5.0 562.6L898.0 351.1M551.7 746.0L-5.0 86.6M-5.0 543.4L898.0 331.9M588.1 746.0L-5.0 43.6M-5.0 524.3L898.0 312.8M624.4 746.0L-5.0 0.5M-5.0 505.2L898.0 293.6M697.2 746.0L63.2 -5.0M-5.0 466.9L898.0 255.3M733.6 746.0L99.5 -5.0M-5.0 447.7L898.0 236.1M770.0 746.0L135.9 -5.0M-5.0 428.6L898.0 216.9M806.4 746.0L172.3 -5.0M-5.0 409.4L898.0 197.8M842.9 746.0L208.7 -5.0M-5.0 390.3L898.0 178.6M879.3 746.0L245.1 -5.0M-5.0 371.1L898.0 159.4M898.0 725.1L281.6 -5.0M-5.0 352.0L898.0 140.2M898.0 681.9L318.0 -5.0M-5.0 332.8L898.0 121.1M898.0 638.8L354.4 -5.0M-5.0 313.7L898.0 101.9M898.0 552.5L427.2 -5.0M-5.0 275.4L898.0 63.5M898.0 509.4L463.7 -5.0M-5.0 256.2L898.0 44.3M898.0 466.2L500.1 -5.0M-5.0 237.1L898.0 25.2M898.0 423.1L536.5 -5.0M-5.0 217.9L898.0 6.0M898.0 379.9L573.0 -5.0M-5.0 198.8L863.1 -5.0M898.0 336.7L609.4 -5.0M-5.0 179.6L781.4 -5.0M898.0 293.6L645.8 -5.0M-5.0 160.5L699.8 -5.0M898.0 250.4L682.3 -5.0M-5.0 141.3L618.1 -5.0M898.0 207.3L718.8 -5.0M-5.0 122.2L536.5 -5.0M898.0 120.9L791.7 -5.0M-5.0 83.9L373.3 -5.0M898.0 77.7L828.1 -5.0M-5.0 64.7L291.7 -5.0M898.0 34.5L864.6 -5.0M-5.0 45.6L210.1 -5.0M-5.0 26.4L128.6 -5.0M-5.0 7.2L47.1 -5.0" stroke-width="1" stroke-opacity="0.9"/>
<path d="M520.2 746.0L898.0 657.7M297.1 746.0L-5.0 388.2M-5.0 677.4L898.0 466.1M660.8 746.0L26.8 -5.0M-5.0 486.0L898.0 274.4M898.0 595.6L390.8 -5.0M-5.0 294.5L898.0 82.7M898.0 164.1L755.2 -5.0M-5.0 103.0L454.9 -5.0" stroke-width="1.9" stroke-opacity="0.95"/>
</g>
<!-- equator arc -->
<path d="M446.0 495.1A199.4 105.4 0 0 0 566.9 398.1A199.4 105.4 0 0 0 565.3 384.6" stroke="#ff6a10" stroke-width="1.8" fill="none"/>
<!-- box front/top edges -->
<g fill="none" stroke="#ff40ff" stroke-width="1" shape-rendering="crispEdges">
<path d="M21.6 138.3L499.5 26L713.3 277.6L234.6 389.2Z"/>
<path d="M21.6 138.3V509.5L234.5 761M234.6 389.2V765M713.5 277.6V647.5L234.5 761"/>
</g>
<!-- coil -->
<g fill="none" stroke="#8424c4" shape-rendering="crispEdges">
<path d="M37.8 151.3L493.1 44.8L696.1 284.1L241 391.7Z" stroke-width="2"/>
<path d="M139.4 271.5L594.6 164.5M265.5 98L468.5 337.9" stroke-width="1"/>
</g>
<!-- triad -->
<g>
<path d="M127.5 263.3L141.2 246.7" stroke="#4a10f0" stroke-width="2.3"/>
<path d="M139.3 244.8L145.6 250.6L154.4 233.5Z" fill="#4a14f0"/>
<path d="M142.6 247.6L154.4 233.5L144.8 249.8Z" fill="#d050f0"/>
<path d="M127.3 264.3L135.5 274.5" stroke="#1fae94" stroke-width="4.6"/>
<path d="M128.8 263.3L142 270" stroke="#d83ca8" stroke-width="3.6"/>
<path d="M141.3 268.8L147.8 268L155.4 283.1L146 280.6Z" fill="#a8307c"/>
<path d="M141.3 268.8L144.5 268.4L149 281.4L146 280.6Z" fill="#c83898"/>
<path d="M133 274.2L140.3 270.6L144 283.6L137 281Z" fill="#26c6a8"/>
</g>
<!-- legend -->
<g>
<rect x="734.5" y="65.5" width="140" height="340" fill="#f4f4f4" stroke="#000" stroke-width="1"/>
<path d="M734 90.5H875M734 116.5H875M734 312.5H875" stroke="#000" stroke-width="1" fill="none"/>
<rect x="749" y="127" width="21" height="170" fill="url(#bar)"/>
<text x="749.5" y="82">JsMagZ</text>
<text x="749.5" y="108" textLength="79.5">Type: Linear</text>
<text x="782" y="133.5">0.00314</text><text x="782" y="150.5">0.00283</text><text x="782" y="167.5">0.00251</text><text x="782" y="184.5">0.0022</text><text x="782" y="201.5">0.00188</text><text x="782" y="218.5">0.00157</text><text x="782" y="235.5">0.00126</text><text x="782" y="252.5">0.000942</text><text x="782" y="269.5">0.000628</text><text x="782" y="286.5">0.000314</text><text x="782" y="303.5">0</text><text x="749.5" y="328.5">Max: 0.00292</text><text x="749.5" y="345.5">Min: 0</text><text x="749.5" y="362.5">Units: A/m</text><text x="749.5" y="379.5">Mean: 0.000667</text><text x="749.5" y="396.5">STD: 0.00085</text>
</g>
</svg>
</body></html>
